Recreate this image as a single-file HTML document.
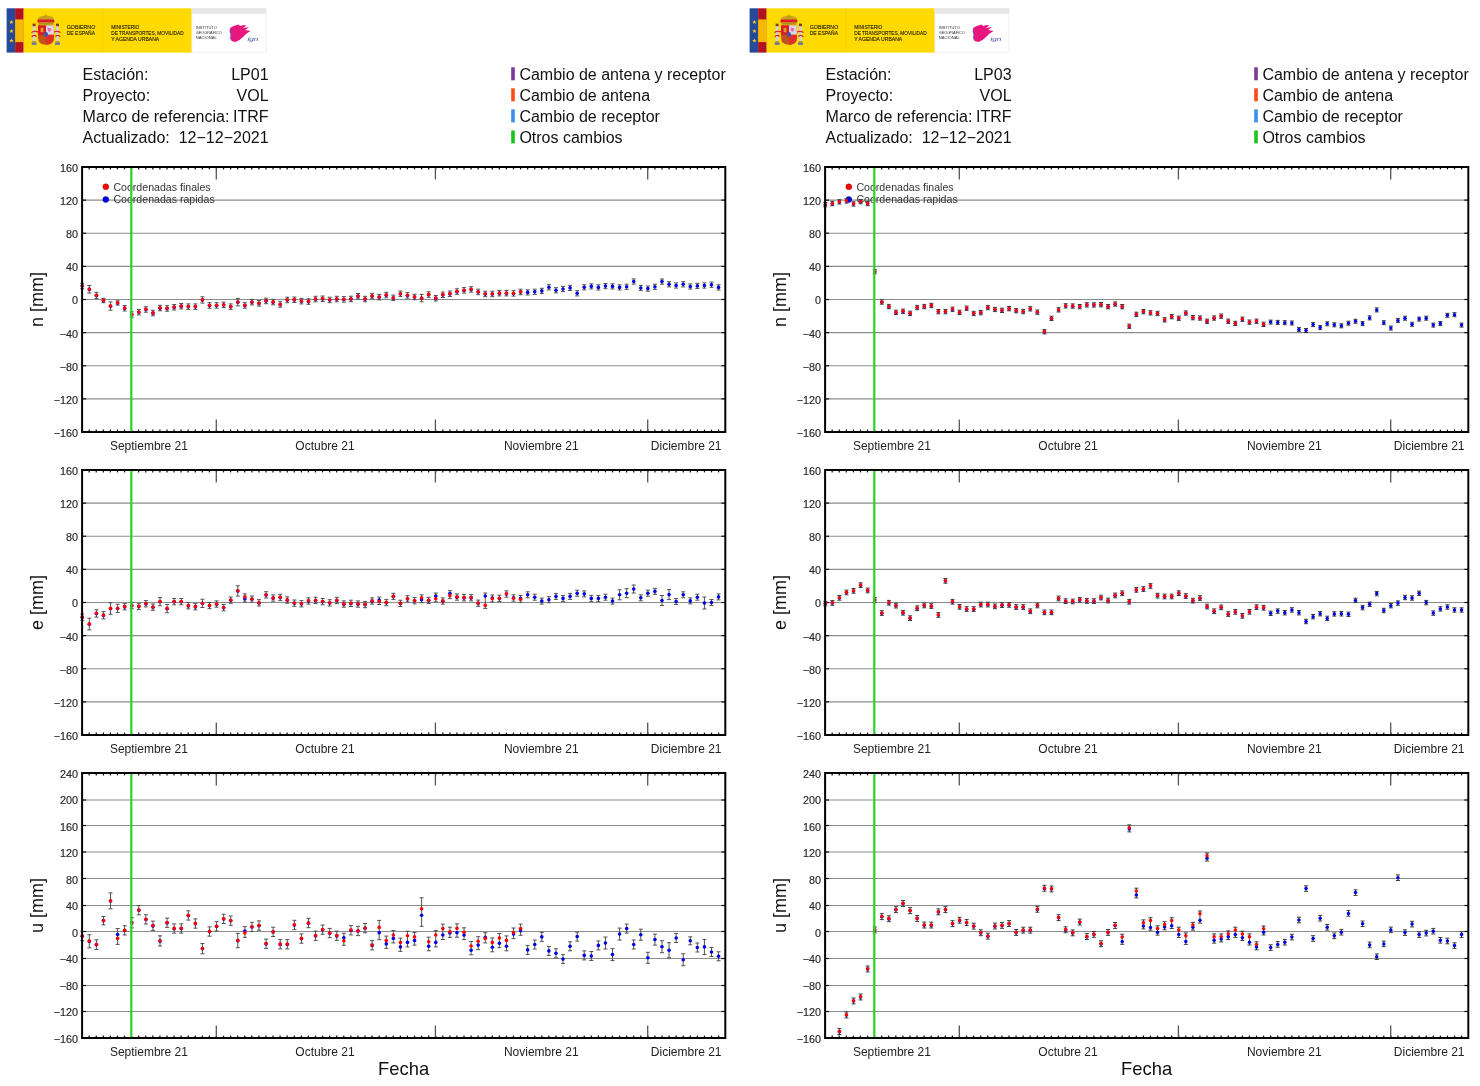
<!DOCTYPE html><html><head><meta charset="utf-8"><style>html,body{margin:0;padding:0;background:#fff;}svg{display:block;will-change:transform}</style></head><body><svg width="1480" height="1086" viewBox="0 0 1480 1086" font-family='"Liberation Sans", sans-serif'><rect width="1480" height="1086" fill="#fff"/><g transform="translate(0,0)"><rect x="6.6" y="8.3" width="8.5" height="44.3" fill="#27499c"/><rect x="15.1" y="8.3" width="8.6" height="44.3" fill="#b3121f"/><rect x="15.1" y="19.4" width="8.6" height="22.7" fill="#f6b800"/><path transform="translate(11.4,22.2) scale(2.3)" d="M0,-1 L0.29,-0.31 L0.95,-0.31 L0.42,0.12 L0.59,0.81 L0,0.4 L-0.59,0.81 L-0.42,0.12 L-0.95,-0.31 L-0.29,-0.31 Z" fill="#f5d010"/><path transform="translate(11.4,31.2) scale(2.3)" d="M0,-1 L0.29,-0.31 L0.95,-0.31 L0.42,0.12 L0.59,0.81 L0,0.4 L-0.59,0.81 L-0.42,0.12 L-0.95,-0.31 L-0.29,-0.31 Z" fill="#f5d010"/><path transform="translate(11.4,40.7) scale(2.3)" d="M0,-1 L0.29,-0.31 L0.95,-0.31 L0.42,0.12 L0.59,0.81 L0,0.4 L-0.59,0.81 L-0.42,0.12 L-0.95,-0.31 L-0.29,-0.31 Z" fill="#f5d010"/><rect x="23.7" y="8.3" width="168.2" height="44.3" fill="#ffda00"/><line x1="102.6" y1="8.3" x2="102.6" y2="52.6" stroke="#f0cc00" stroke-width="0.6"/><rect x="32.8" y="25" width="2.6" height="18" fill="#cfd3e6"/><rect x="32.599999999999994" y="23.6" width="3" height="2.6" fill="#8a3a20"/><rect x="31.699999999999996" y="42.4" width="4.8" height="2.4" fill="#5a72b0"/><rect x="32.3" y="41.2" width="3.6" height="1.4" fill="#b08a20"/><rect x="56.2" y="25" width="2.6" height="18" fill="#cfd3e6"/><rect x="56.0" y="23.6" width="3" height="2.6" fill="#8a3a20"/><rect x="55.1" y="42.4" width="4.8" height="2.4" fill="#5a72b0"/><rect x="55.7" y="41.2" width="3.6" height="1.4" fill="#b08a20"/><path d="M31.5 32.6 Q34 30.5 38.5 32 M31.8 36.8 Q34 34 36.5 36.5" stroke="#e0202a" stroke-width="1.2" fill="none"/><path d="M60.5 32.6 Q58 30.5 53.5 32 M60.2 36.8 Q58 34 55.5 36.5" stroke="#e0202a" stroke-width="1.2" fill="none"/><path d="M37.4 22.8 Q37 17.2 41 16.6 Q45.8 14.6 50.8 16.6 Q54.8 17.2 54.4 22.8 Z" fill="#c9a21a"/><rect x="37.6" y="19.4" width="16.6" height="3.2" rx="1.2" fill="#e01a2a"/><rect x="38.4" y="22.4" width="15" height="2.4" fill="#b8901a"/><rect x="45.5" y="14.4" width="0.9" height="2.6" fill="#b8901a"/><path d="M38.1 25.4 H53.8 V38 Q53.8 44.7 46 44.7 Q38.1 44.7 38.1 38 Z" fill="#c2521c"/><rect x="38.1" y="25.4" width="7.9" height="9.4" fill="#dc1a2c"/><rect x="46" y="25.4" width="7.8" height="9.4" fill="#dcd6e8"/><path d="M47.5 27.5 L51.5 28.5 L50 32 L48 31 Z" fill="#e070b0"/><path d="M46 34.8 H53.8 V38 Q53.8 44.7 46 44.7 Z" fill="#e0302a"/><rect x="40.6" y="27.8" width="2.8" height="4.4" fill="#d8a020"/><ellipse cx="46" cy="34.5" rx="2" ry="2.4" fill="#3a5aa8"/><g font-family='"Liberation Sans", sans-serif' font-size="5.5" fill="#1e1a00" stroke="#1e1a00" stroke-width="0.12"><text x="66.7" y="29.3" textLength="28.6" lengthAdjust="spacingAndGlyphs">GOBIERNO</text><text x="66.7" y="35.1" textLength="28.4" lengthAdjust="spacingAndGlyphs">DE ESPAÑA</text><text x="111.2" y="29.3" textLength="28.2" lengthAdjust="spacingAndGlyphs">MINISTERIO</text><text x="111.2" y="35.1" textLength="72.4" lengthAdjust="spacingAndGlyphs">DE TRANSPORTES, MOVILIDAD</text><text x="111.2" y="40.8" textLength="48" lengthAdjust="spacingAndGlyphs">Y AGENDA URBANA</text></g><rect x="191.9" y="8.4" width="74" height="43.8" fill="#ffffff" stroke="#ececec" stroke-width="0.8"/><rect x="191.9" y="8.4" width="74" height="5.4" fill="#e6e6e6"/><g font-family='"Liberation Sans", sans-serif' font-size="3.9" fill="#333"><text x="195.8" y="29.2" textLength="21" lengthAdjust="spacingAndGlyphs">INSTITUTO</text><text x="195.8" y="33.8" textLength="26" lengthAdjust="spacingAndGlyphs">GEOGRÁFICO</text><text x="195.8" y="38.9" textLength="21" lengthAdjust="spacingAndGlyphs">NACIONAL</text></g><path d="M230.2 28 L233 26.2 L236 25.2 L238.6 24.6 L240 26 L243.4 24.9 L246.6 25.4 L242.6 28 L246 27.4 L249 27 L245.2 30 L250.5 31 L246 34 L243 37 L239.5 40 L235.5 42 L232.2 41.2 L230.2 38.2 L231 35 L229.6 32 Z" fill="#e8177d"/><path d="M230 29 L231 33 L230.2 38 L232 41" stroke="#5566bb" stroke-width="0.9" fill="none" opacity="0.8"/><text x="247.4" y="41.4" font-size="6" font-style="italic" fill="#3b4fa8" font-family='"Liberation Sans", sans-serif' textLength="11" lengthAdjust="spacingAndGlyphs">ign</text></g><g transform="translate(0,0)" font-family='"Liberation Sans", sans-serif' font-size="16" fill="#111"><text x="82.6" y="80.1">Estación:</text><text x="268.6" y="80.1" text-anchor="end">LP01</text><text x="82.6" y="101.1">Proyecto:</text><text x="268.6" y="101.1" text-anchor="end">VOL</text><text x="82.6" y="122.2">Marco de referencia:</text><text x="268.6" y="122.2" text-anchor="end">ITRF</text><text x="82.6" y="143.3">Actualizado:</text><text x="268.6" y="143.3" text-anchor="end">12−12−2021</text><rect x="511.2" y="67.3" width="3.6" height="13" fill="#7b3a9a"/><text x="519.4" y="80.3">Cambio de antena y receptor</text><rect x="511.2" y="88.3" width="3.6" height="13" fill="#ff4a14"/><text x="519.4" y="101.3">Cambio de antena</text><rect x="511.2" y="109.4" width="3.6" height="13" fill="#3b8ef0"/><text x="519.4" y="122.4">Cambio de receptor</text><rect x="511.2" y="130.4" width="3.6" height="13" fill="#19c519"/><text x="519.4" y="143.4">Otros cambios</text></g><line x1="82.1" y1="200.12" x2="725.3" y2="200.12" stroke="#8c8c8c" stroke-width="1.1"/><line x1="82.1" y1="200.12" x2="86.1" y2="200.12" stroke="#111" stroke-width="1.2"/><line x1="721.3" y1="200.12" x2="725.3" y2="200.12" stroke="#111" stroke-width="1.2"/><line x1="82.1" y1="233.25" x2="725.3" y2="233.25" stroke="#8c8c8c" stroke-width="1.1"/><line x1="82.1" y1="233.25" x2="86.1" y2="233.25" stroke="#111" stroke-width="1.2"/><line x1="721.3" y1="233.25" x2="725.3" y2="233.25" stroke="#111" stroke-width="1.2"/><line x1="82.1" y1="266.38" x2="725.3" y2="266.38" stroke="#8c8c8c" stroke-width="1.1"/><line x1="82.1" y1="266.38" x2="86.1" y2="266.38" stroke="#111" stroke-width="1.2"/><line x1="721.3" y1="266.38" x2="725.3" y2="266.38" stroke="#111" stroke-width="1.2"/><line x1="82.1" y1="299.50" x2="725.3" y2="299.50" stroke="#8c8c8c" stroke-width="1.1"/><line x1="82.1" y1="299.50" x2="86.1" y2="299.50" stroke="#111" stroke-width="1.2"/><line x1="721.3" y1="299.50" x2="725.3" y2="299.50" stroke="#111" stroke-width="1.2"/><line x1="82.1" y1="332.62" x2="725.3" y2="332.62" stroke="#8c8c8c" stroke-width="1.1"/><line x1="82.1" y1="332.62" x2="86.1" y2="332.62" stroke="#111" stroke-width="1.2"/><line x1="721.3" y1="332.62" x2="725.3" y2="332.62" stroke="#111" stroke-width="1.2"/><line x1="82.1" y1="365.75" x2="725.3" y2="365.75" stroke="#8c8c8c" stroke-width="1.1"/><line x1="82.1" y1="365.75" x2="86.1" y2="365.75" stroke="#111" stroke-width="1.2"/><line x1="721.3" y1="365.75" x2="725.3" y2="365.75" stroke="#111" stroke-width="1.2"/><line x1="82.1" y1="398.88" x2="725.3" y2="398.88" stroke="#8c8c8c" stroke-width="1.1"/><line x1="82.1" y1="398.88" x2="86.1" y2="398.88" stroke="#111" stroke-width="1.2"/><line x1="721.3" y1="398.88" x2="725.3" y2="398.88" stroke="#111" stroke-width="1.2"/><text x="78.0" y="171.90" text-anchor="end" font-size="10.8" fill="#2a2a2a" stroke="#2a2a2a" stroke-width="0.18">160</text><text x="78.0" y="205.03" text-anchor="end" font-size="10.8" fill="#2a2a2a" stroke="#2a2a2a" stroke-width="0.18">120</text><text x="78.0" y="238.15" text-anchor="end" font-size="10.8" fill="#2a2a2a" stroke="#2a2a2a" stroke-width="0.18">80</text><text x="78.0" y="271.27" text-anchor="end" font-size="10.8" fill="#2a2a2a" stroke="#2a2a2a" stroke-width="0.18">40</text><text x="78.0" y="304.40" text-anchor="end" font-size="10.8" fill="#2a2a2a" stroke="#2a2a2a" stroke-width="0.18">0</text><text x="78.0" y="337.52" text-anchor="end" font-size="10.8" fill="#2a2a2a" stroke="#2a2a2a" stroke-width="0.18">−40</text><text x="78.0" y="370.65" text-anchor="end" font-size="10.8" fill="#2a2a2a" stroke="#2a2a2a" stroke-width="0.18">−80</text><text x="78.0" y="403.77" text-anchor="end" font-size="10.8" fill="#2a2a2a" stroke="#2a2a2a" stroke-width="0.18">−120</text><text x="78.0" y="436.90" text-anchor="end" font-size="10.8" fill="#2a2a2a" stroke="#2a2a2a" stroke-width="0.18">−160</text><line x1="89.17" y1="167" x2="89.17" y2="169.4" stroke="#111" stroke-width="1.25"/><line x1="89.17" y1="432" x2="89.17" y2="429.6" stroke="#111" stroke-width="1.25"/><line x1="96.24" y1="167" x2="96.24" y2="169.4" stroke="#111" stroke-width="1.25"/><line x1="96.24" y1="432" x2="96.24" y2="429.6" stroke="#111" stroke-width="1.25"/><line x1="103.32" y1="167" x2="103.32" y2="169.4" stroke="#111" stroke-width="1.25"/><line x1="103.32" y1="432" x2="103.32" y2="429.6" stroke="#111" stroke-width="1.25"/><line x1="110.39" y1="167" x2="110.39" y2="169.4" stroke="#111" stroke-width="1.25"/><line x1="110.39" y1="432" x2="110.39" y2="429.6" stroke="#111" stroke-width="1.25"/><line x1="117.46" y1="167" x2="117.46" y2="169.4" stroke="#111" stroke-width="1.25"/><line x1="117.46" y1="432" x2="117.46" y2="429.6" stroke="#111" stroke-width="1.25"/><line x1="124.53" y1="167" x2="124.53" y2="169.4" stroke="#111" stroke-width="1.25"/><line x1="124.53" y1="432" x2="124.53" y2="429.6" stroke="#111" stroke-width="1.25"/><line x1="131.60" y1="167" x2="131.60" y2="169.4" stroke="#111" stroke-width="1.25"/><line x1="131.60" y1="432" x2="131.60" y2="429.6" stroke="#111" stroke-width="1.25"/><line x1="138.68" y1="167" x2="138.68" y2="169.4" stroke="#111" stroke-width="1.25"/><line x1="138.68" y1="432" x2="138.68" y2="429.6" stroke="#111" stroke-width="1.25"/><line x1="145.75" y1="167" x2="145.75" y2="169.4" stroke="#111" stroke-width="1.25"/><line x1="145.75" y1="432" x2="145.75" y2="429.6" stroke="#111" stroke-width="1.25"/><line x1="152.82" y1="167" x2="152.82" y2="169.4" stroke="#111" stroke-width="1.25"/><line x1="152.82" y1="432" x2="152.82" y2="429.6" stroke="#111" stroke-width="1.25"/><line x1="159.89" y1="167" x2="159.89" y2="169.4" stroke="#111" stroke-width="1.25"/><line x1="159.89" y1="432" x2="159.89" y2="429.6" stroke="#111" stroke-width="1.25"/><line x1="166.97" y1="167" x2="166.97" y2="169.4" stroke="#111" stroke-width="1.25"/><line x1="166.97" y1="432" x2="166.97" y2="429.6" stroke="#111" stroke-width="1.25"/><line x1="174.04" y1="167" x2="174.04" y2="169.4" stroke="#111" stroke-width="1.25"/><line x1="174.04" y1="432" x2="174.04" y2="429.6" stroke="#111" stroke-width="1.25"/><line x1="181.11" y1="167" x2="181.11" y2="169.4" stroke="#111" stroke-width="1.25"/><line x1="181.11" y1="432" x2="181.11" y2="429.6" stroke="#111" stroke-width="1.25"/><line x1="188.18" y1="167" x2="188.18" y2="169.4" stroke="#111" stroke-width="1.25"/><line x1="188.18" y1="432" x2="188.18" y2="429.6" stroke="#111" stroke-width="1.25"/><line x1="195.25" y1="167" x2="195.25" y2="169.4" stroke="#111" stroke-width="1.25"/><line x1="195.25" y1="432" x2="195.25" y2="429.6" stroke="#111" stroke-width="1.25"/><line x1="202.33" y1="167" x2="202.33" y2="169.4" stroke="#111" stroke-width="1.25"/><line x1="202.33" y1="432" x2="202.33" y2="429.6" stroke="#111" stroke-width="1.25"/><line x1="209.40" y1="167" x2="209.40" y2="169.4" stroke="#111" stroke-width="1.25"/><line x1="209.40" y1="432" x2="209.40" y2="429.6" stroke="#111" stroke-width="1.25"/><line x1="216.47" y1="167" x2="216.47" y2="169.4" stroke="#111" stroke-width="1.25"/><line x1="216.47" y1="432" x2="216.47" y2="429.6" stroke="#111" stroke-width="1.25"/><line x1="223.54" y1="167" x2="223.54" y2="169.4" stroke="#111" stroke-width="1.25"/><line x1="223.54" y1="432" x2="223.54" y2="429.6" stroke="#111" stroke-width="1.25"/><line x1="230.61" y1="167" x2="230.61" y2="169.4" stroke="#111" stroke-width="1.25"/><line x1="230.61" y1="432" x2="230.61" y2="429.6" stroke="#111" stroke-width="1.25"/><line x1="237.69" y1="167" x2="237.69" y2="169.4" stroke="#111" stroke-width="1.25"/><line x1="237.69" y1="432" x2="237.69" y2="429.6" stroke="#111" stroke-width="1.25"/><line x1="244.76" y1="167" x2="244.76" y2="169.4" stroke="#111" stroke-width="1.25"/><line x1="244.76" y1="432" x2="244.76" y2="429.6" stroke="#111" stroke-width="1.25"/><line x1="251.83" y1="167" x2="251.83" y2="169.4" stroke="#111" stroke-width="1.25"/><line x1="251.83" y1="432" x2="251.83" y2="429.6" stroke="#111" stroke-width="1.25"/><line x1="258.90" y1="167" x2="258.90" y2="169.4" stroke="#111" stroke-width="1.25"/><line x1="258.90" y1="432" x2="258.90" y2="429.6" stroke="#111" stroke-width="1.25"/><line x1="265.98" y1="167" x2="265.98" y2="169.4" stroke="#111" stroke-width="1.25"/><line x1="265.98" y1="432" x2="265.98" y2="429.6" stroke="#111" stroke-width="1.25"/><line x1="273.05" y1="167" x2="273.05" y2="169.4" stroke="#111" stroke-width="1.25"/><line x1="273.05" y1="432" x2="273.05" y2="429.6" stroke="#111" stroke-width="1.25"/><line x1="280.12" y1="167" x2="280.12" y2="169.4" stroke="#111" stroke-width="1.25"/><line x1="280.12" y1="432" x2="280.12" y2="429.6" stroke="#111" stroke-width="1.25"/><line x1="287.19" y1="167" x2="287.19" y2="169.4" stroke="#111" stroke-width="1.25"/><line x1="287.19" y1="432" x2="287.19" y2="429.6" stroke="#111" stroke-width="1.25"/><line x1="294.26" y1="167" x2="294.26" y2="169.4" stroke="#111" stroke-width="1.25"/><line x1="294.26" y1="432" x2="294.26" y2="429.6" stroke="#111" stroke-width="1.25"/><line x1="301.34" y1="167" x2="301.34" y2="169.4" stroke="#111" stroke-width="1.25"/><line x1="301.34" y1="432" x2="301.34" y2="429.6" stroke="#111" stroke-width="1.25"/><line x1="308.41" y1="167" x2="308.41" y2="169.4" stroke="#111" stroke-width="1.25"/><line x1="308.41" y1="432" x2="308.41" y2="429.6" stroke="#111" stroke-width="1.25"/><line x1="315.48" y1="167" x2="315.48" y2="169.4" stroke="#111" stroke-width="1.25"/><line x1="315.48" y1="432" x2="315.48" y2="429.6" stroke="#111" stroke-width="1.25"/><line x1="322.55" y1="167" x2="322.55" y2="169.4" stroke="#111" stroke-width="1.25"/><line x1="322.55" y1="432" x2="322.55" y2="429.6" stroke="#111" stroke-width="1.25"/><line x1="329.62" y1="167" x2="329.62" y2="169.4" stroke="#111" stroke-width="1.25"/><line x1="329.62" y1="432" x2="329.62" y2="429.6" stroke="#111" stroke-width="1.25"/><line x1="336.70" y1="167" x2="336.70" y2="169.4" stroke="#111" stroke-width="1.25"/><line x1="336.70" y1="432" x2="336.70" y2="429.6" stroke="#111" stroke-width="1.25"/><line x1="343.77" y1="167" x2="343.77" y2="169.4" stroke="#111" stroke-width="1.25"/><line x1="343.77" y1="432" x2="343.77" y2="429.6" stroke="#111" stroke-width="1.25"/><line x1="350.84" y1="167" x2="350.84" y2="169.4" stroke="#111" stroke-width="1.25"/><line x1="350.84" y1="432" x2="350.84" y2="429.6" stroke="#111" stroke-width="1.25"/><line x1="357.91" y1="167" x2="357.91" y2="169.4" stroke="#111" stroke-width="1.25"/><line x1="357.91" y1="432" x2="357.91" y2="429.6" stroke="#111" stroke-width="1.25"/><line x1="364.99" y1="167" x2="364.99" y2="169.4" stroke="#111" stroke-width="1.25"/><line x1="364.99" y1="432" x2="364.99" y2="429.6" stroke="#111" stroke-width="1.25"/><line x1="372.06" y1="167" x2="372.06" y2="169.4" stroke="#111" stroke-width="1.25"/><line x1="372.06" y1="432" x2="372.06" y2="429.6" stroke="#111" stroke-width="1.25"/><line x1="379.13" y1="167" x2="379.13" y2="169.4" stroke="#111" stroke-width="1.25"/><line x1="379.13" y1="432" x2="379.13" y2="429.6" stroke="#111" stroke-width="1.25"/><line x1="386.20" y1="167" x2="386.20" y2="169.4" stroke="#111" stroke-width="1.25"/><line x1="386.20" y1="432" x2="386.20" y2="429.6" stroke="#111" stroke-width="1.25"/><line x1="393.27" y1="167" x2="393.27" y2="169.4" stroke="#111" stroke-width="1.25"/><line x1="393.27" y1="432" x2="393.27" y2="429.6" stroke="#111" stroke-width="1.25"/><line x1="400.35" y1="167" x2="400.35" y2="169.4" stroke="#111" stroke-width="1.25"/><line x1="400.35" y1="432" x2="400.35" y2="429.6" stroke="#111" stroke-width="1.25"/><line x1="407.42" y1="167" x2="407.42" y2="169.4" stroke="#111" stroke-width="1.25"/><line x1="407.42" y1="432" x2="407.42" y2="429.6" stroke="#111" stroke-width="1.25"/><line x1="414.49" y1="167" x2="414.49" y2="169.4" stroke="#111" stroke-width="1.25"/><line x1="414.49" y1="432" x2="414.49" y2="429.6" stroke="#111" stroke-width="1.25"/><line x1="421.56" y1="167" x2="421.56" y2="169.4" stroke="#111" stroke-width="1.25"/><line x1="421.56" y1="432" x2="421.56" y2="429.6" stroke="#111" stroke-width="1.25"/><line x1="428.63" y1="167" x2="428.63" y2="169.4" stroke="#111" stroke-width="1.25"/><line x1="428.63" y1="432" x2="428.63" y2="429.6" stroke="#111" stroke-width="1.25"/><line x1="435.71" y1="167" x2="435.71" y2="169.4" stroke="#111" stroke-width="1.25"/><line x1="435.71" y1="432" x2="435.71" y2="429.6" stroke="#111" stroke-width="1.25"/><line x1="442.78" y1="167" x2="442.78" y2="169.4" stroke="#111" stroke-width="1.25"/><line x1="442.78" y1="432" x2="442.78" y2="429.6" stroke="#111" stroke-width="1.25"/><line x1="449.85" y1="167" x2="449.85" y2="169.4" stroke="#111" stroke-width="1.25"/><line x1="449.85" y1="432" x2="449.85" y2="429.6" stroke="#111" stroke-width="1.25"/><line x1="456.92" y1="167" x2="456.92" y2="169.4" stroke="#111" stroke-width="1.25"/><line x1="456.92" y1="432" x2="456.92" y2="429.6" stroke="#111" stroke-width="1.25"/><line x1="464.00" y1="167" x2="464.00" y2="169.4" stroke="#111" stroke-width="1.25"/><line x1="464.00" y1="432" x2="464.00" y2="429.6" stroke="#111" stroke-width="1.25"/><line x1="471.07" y1="167" x2="471.07" y2="169.4" stroke="#111" stroke-width="1.25"/><line x1="471.07" y1="432" x2="471.07" y2="429.6" stroke="#111" stroke-width="1.25"/><line x1="478.14" y1="167" x2="478.14" y2="169.4" stroke="#111" stroke-width="1.25"/><line x1="478.14" y1="432" x2="478.14" y2="429.6" stroke="#111" stroke-width="1.25"/><line x1="485.21" y1="167" x2="485.21" y2="169.4" stroke="#111" stroke-width="1.25"/><line x1="485.21" y1="432" x2="485.21" y2="429.6" stroke="#111" stroke-width="1.25"/><line x1="492.28" y1="167" x2="492.28" y2="169.4" stroke="#111" stroke-width="1.25"/><line x1="492.28" y1="432" x2="492.28" y2="429.6" stroke="#111" stroke-width="1.25"/><line x1="499.36" y1="167" x2="499.36" y2="169.4" stroke="#111" stroke-width="1.25"/><line x1="499.36" y1="432" x2="499.36" y2="429.6" stroke="#111" stroke-width="1.25"/><line x1="506.43" y1="167" x2="506.43" y2="169.4" stroke="#111" stroke-width="1.25"/><line x1="506.43" y1="432" x2="506.43" y2="429.6" stroke="#111" stroke-width="1.25"/><line x1="513.50" y1="167" x2="513.50" y2="169.4" stroke="#111" stroke-width="1.25"/><line x1="513.50" y1="432" x2="513.50" y2="429.6" stroke="#111" stroke-width="1.25"/><line x1="520.57" y1="167" x2="520.57" y2="169.4" stroke="#111" stroke-width="1.25"/><line x1="520.57" y1="432" x2="520.57" y2="429.6" stroke="#111" stroke-width="1.25"/><line x1="527.64" y1="167" x2="527.64" y2="169.4" stroke="#111" stroke-width="1.25"/><line x1="527.64" y1="432" x2="527.64" y2="429.6" stroke="#111" stroke-width="1.25"/><line x1="534.72" y1="167" x2="534.72" y2="169.4" stroke="#111" stroke-width="1.25"/><line x1="534.72" y1="432" x2="534.72" y2="429.6" stroke="#111" stroke-width="1.25"/><line x1="541.79" y1="167" x2="541.79" y2="169.4" stroke="#111" stroke-width="1.25"/><line x1="541.79" y1="432" x2="541.79" y2="429.6" stroke="#111" stroke-width="1.25"/><line x1="548.86" y1="167" x2="548.86" y2="169.4" stroke="#111" stroke-width="1.25"/><line x1="548.86" y1="432" x2="548.86" y2="429.6" stroke="#111" stroke-width="1.25"/><line x1="555.93" y1="167" x2="555.93" y2="169.4" stroke="#111" stroke-width="1.25"/><line x1="555.93" y1="432" x2="555.93" y2="429.6" stroke="#111" stroke-width="1.25"/><line x1="563.00" y1="167" x2="563.00" y2="169.4" stroke="#111" stroke-width="1.25"/><line x1="563.00" y1="432" x2="563.00" y2="429.6" stroke="#111" stroke-width="1.25"/><line x1="570.08" y1="167" x2="570.08" y2="169.4" stroke="#111" stroke-width="1.25"/><line x1="570.08" y1="432" x2="570.08" y2="429.6" stroke="#111" stroke-width="1.25"/><line x1="577.15" y1="167" x2="577.15" y2="169.4" stroke="#111" stroke-width="1.25"/><line x1="577.15" y1="432" x2="577.15" y2="429.6" stroke="#111" stroke-width="1.25"/><line x1="584.22" y1="167" x2="584.22" y2="169.4" stroke="#111" stroke-width="1.25"/><line x1="584.22" y1="432" x2="584.22" y2="429.6" stroke="#111" stroke-width="1.25"/><line x1="591.29" y1="167" x2="591.29" y2="169.4" stroke="#111" stroke-width="1.25"/><line x1="591.29" y1="432" x2="591.29" y2="429.6" stroke="#111" stroke-width="1.25"/><line x1="598.37" y1="167" x2="598.37" y2="169.4" stroke="#111" stroke-width="1.25"/><line x1="598.37" y1="432" x2="598.37" y2="429.6" stroke="#111" stroke-width="1.25"/><line x1="605.44" y1="167" x2="605.44" y2="169.4" stroke="#111" stroke-width="1.25"/><line x1="605.44" y1="432" x2="605.44" y2="429.6" stroke="#111" stroke-width="1.25"/><line x1="612.51" y1="167" x2="612.51" y2="169.4" stroke="#111" stroke-width="1.25"/><line x1="612.51" y1="432" x2="612.51" y2="429.6" stroke="#111" stroke-width="1.25"/><line x1="619.58" y1="167" x2="619.58" y2="169.4" stroke="#111" stroke-width="1.25"/><line x1="619.58" y1="432" x2="619.58" y2="429.6" stroke="#111" stroke-width="1.25"/><line x1="626.65" y1="167" x2="626.65" y2="169.4" stroke="#111" stroke-width="1.25"/><line x1="626.65" y1="432" x2="626.65" y2="429.6" stroke="#111" stroke-width="1.25"/><line x1="633.73" y1="167" x2="633.73" y2="169.4" stroke="#111" stroke-width="1.25"/><line x1="633.73" y1="432" x2="633.73" y2="429.6" stroke="#111" stroke-width="1.25"/><line x1="640.80" y1="167" x2="640.80" y2="169.4" stroke="#111" stroke-width="1.25"/><line x1="640.80" y1="432" x2="640.80" y2="429.6" stroke="#111" stroke-width="1.25"/><line x1="647.87" y1="167" x2="647.87" y2="169.4" stroke="#111" stroke-width="1.25"/><line x1="647.87" y1="432" x2="647.87" y2="429.6" stroke="#111" stroke-width="1.25"/><line x1="654.94" y1="167" x2="654.94" y2="169.4" stroke="#111" stroke-width="1.25"/><line x1="654.94" y1="432" x2="654.94" y2="429.6" stroke="#111" stroke-width="1.25"/><line x1="662.01" y1="167" x2="662.01" y2="169.4" stroke="#111" stroke-width="1.25"/><line x1="662.01" y1="432" x2="662.01" y2="429.6" stroke="#111" stroke-width="1.25"/><line x1="669.09" y1="167" x2="669.09" y2="169.4" stroke="#111" stroke-width="1.25"/><line x1="669.09" y1="432" x2="669.09" y2="429.6" stroke="#111" stroke-width="1.25"/><line x1="676.16" y1="167" x2="676.16" y2="169.4" stroke="#111" stroke-width="1.25"/><line x1="676.16" y1="432" x2="676.16" y2="429.6" stroke="#111" stroke-width="1.25"/><line x1="683.23" y1="167" x2="683.23" y2="169.4" stroke="#111" stroke-width="1.25"/><line x1="683.23" y1="432" x2="683.23" y2="429.6" stroke="#111" stroke-width="1.25"/><line x1="690.30" y1="167" x2="690.30" y2="169.4" stroke="#111" stroke-width="1.25"/><line x1="690.30" y1="432" x2="690.30" y2="429.6" stroke="#111" stroke-width="1.25"/><line x1="697.38" y1="167" x2="697.38" y2="169.4" stroke="#111" stroke-width="1.25"/><line x1="697.38" y1="432" x2="697.38" y2="429.6" stroke="#111" stroke-width="1.25"/><line x1="704.45" y1="167" x2="704.45" y2="169.4" stroke="#111" stroke-width="1.25"/><line x1="704.45" y1="432" x2="704.45" y2="429.6" stroke="#111" stroke-width="1.25"/><line x1="711.52" y1="167" x2="711.52" y2="169.4" stroke="#111" stroke-width="1.25"/><line x1="711.52" y1="432" x2="711.52" y2="429.6" stroke="#111" stroke-width="1.25"/><line x1="718.59" y1="167" x2="718.59" y2="169.4" stroke="#111" stroke-width="1.25"/><line x1="718.59" y1="432" x2="718.59" y2="429.6" stroke="#111" stroke-width="1.25"/><line x1="216.3" y1="167" x2="216.3" y2="179.5" stroke="#555" stroke-width="1.3"/><line x1="216.3" y1="432" x2="216.3" y2="419.5" stroke="#555" stroke-width="1.3"/><line x1="435.4" y1="167" x2="435.4" y2="179.5" stroke="#555" stroke-width="1.3"/><line x1="435.4" y1="432" x2="435.4" y2="419.5" stroke="#555" stroke-width="1.3"/><line x1="647.7" y1="167" x2="647.7" y2="179.5" stroke="#555" stroke-width="1.3"/><line x1="647.7" y1="432" x2="647.7" y2="419.5" stroke="#555" stroke-width="1.3"/><text x="148.9" y="450.4" text-anchor="middle" font-size="12" fill="#222">Septiembre 21</text><text x="325.0" y="450.4" text-anchor="middle" font-size="12" fill="#222">Octubre 21</text><text x="541.3" y="450.4" text-anchor="middle" font-size="12" fill="#222">Noviembre 21</text><text x="686.2" y="450.4" text-anchor="middle" font-size="12" fill="#222">Diciembre 21</text><text transform="translate(43.2,299.5) rotate(-90)" text-anchor="middle" font-size="18" fill="#111">n [mm]</text><circle cx="105.8" cy="186.8" r="3" fill="#ff0000" stroke="#8a0000" stroke-width="0.4"/><text x="113.4" y="190.6" font-size="10.6" fill="#333">Coordenadas finales</text><circle cx="105.8" cy="199.5" r="3" fill="#0000ee" stroke="#00006a" stroke-width="0.4"/><text x="113.4" y="202.7" font-size="10.6" fill="#333">Coordenadas rapidas</text><path d="M82.26 283.20V288.70M80.26 283.20H84.26M80.26 288.70H84.26M89.33 285.50V293.00M87.33 285.50H91.33M87.33 293.00H91.33M96.40 292.30V298.60M94.40 292.30H98.40M94.40 298.60H98.40M103.47 298.40V302.70M101.47 298.40H105.47M101.47 302.70H105.47M110.54 301.90V310.20M108.54 301.90H112.54M108.54 310.20H112.54M117.61 300.80V305.10M115.61 300.80H119.61M115.61 305.10H119.61M124.68 305.50V311.00M122.68 305.50H126.68M122.68 311.00H126.68M131.75 311.80V317.30M129.75 311.80H133.75M129.75 317.30H133.75M138.82 309.40V314.90M136.82 309.40H140.82M136.82 314.90H140.82M145.89 306.70V312.20M143.89 306.70H147.89M143.89 312.20H147.89M152.96 310.30V315.80M150.96 310.30H154.96M150.96 315.80H154.96M160.03 305.30V310.80M158.03 305.30H162.03M158.03 310.80H162.03M167.10 305.70V311.20M165.10 305.70H169.10M165.10 311.20H169.10M174.17 304.50V310.00M172.17 304.50H176.17M172.17 310.00H176.17M181.24 303.50V309.00M179.24 303.50H183.24M179.24 309.00H183.24M188.31 303.90V309.40M186.31 303.90H190.31M186.31 309.40H190.31M195.38 303.90V309.40M193.38 303.90H197.38M193.38 309.40H197.38M202.45 296.80V303.10M200.45 296.80H204.45M200.45 303.10H204.45M209.52 302.70V308.20M207.52 302.70H211.52M207.52 308.20H211.52M216.59 302.70V308.20M214.59 302.70H218.59M214.59 308.20H218.59M223.66 302.10V307.60M221.66 302.10H225.66M221.66 307.60H225.66M230.73 303.90V309.40M228.73 303.90H232.73M228.73 309.40H232.73M237.80 298.50V305.80M235.80 298.50H239.80M235.80 305.80H239.80M244.87 302.70V308.20M242.87 302.70H246.87M242.87 308.20H246.87M251.94 299.40V304.90M249.94 299.40H253.94M249.94 304.90H253.94M259.01 300.60V306.10M257.01 300.60H261.01M257.01 306.10H261.01M266.08 298.20V303.70M264.08 298.20H268.08M264.08 303.70H268.08M273.15 299.30V304.80M271.15 299.30H275.15M271.15 304.80H275.15M280.22 301.70V307.20M278.22 301.70H282.22M278.22 307.20H282.22M287.29 297.20V302.70M285.29 297.20H289.29M285.29 302.70H289.29M294.36 297.00V302.50M292.36 297.00H296.36M292.36 302.50H296.36M301.43 298.40V303.90M299.43 298.40H303.43M299.43 303.90H303.43M308.50 298.80V304.30M306.50 298.80H310.50M306.50 304.30H310.50M315.57 296.30V301.80M313.57 296.30H317.57M313.57 301.80H317.57M322.64 296.00V301.50M320.64 296.00H324.64M320.64 301.50H324.64M329.71 297.20V302.70M327.71 297.20H331.71M327.71 302.70H331.71M336.78 296.30V301.80M334.78 296.30H338.78M334.78 301.80H338.78M343.85 296.60V302.10M341.85 296.60H345.85M341.85 302.10H345.85M350.92 296.20V301.70M348.92 296.20H352.92M348.92 301.70H352.92M357.99 293.50V299.00M355.99 293.50H359.99M355.99 299.00H359.99M365.06 296.30V301.80M363.06 296.30H367.06M363.06 301.80H367.06M372.13 293.30V298.80M370.13 293.30H374.13M370.13 298.80H374.13M379.20 294.40V299.90M377.20 294.40H381.20M377.20 299.90H381.20M386.27 292.30V297.80M384.27 292.30H388.27M384.27 297.80H388.27M393.34 295.10V300.60M391.34 295.10H395.34M391.34 300.60H395.34M400.41 291.10V296.60M398.41 291.10H402.41M398.41 296.60H402.41M407.48 292.70V298.20M405.48 292.70H409.48M405.48 298.20H409.48M414.55 294.20V299.70M412.55 294.20H416.55M412.55 299.70H416.55M421.62 294.50V301.80M419.62 294.50H423.62M419.62 301.80H423.62M428.69 291.80V297.30M426.69 291.80H430.69M426.69 297.30H430.69M435.76 295.50V301.00M433.76 295.50H437.76M433.76 301.00H437.76M442.83 292.00V297.50M440.83 292.00H444.83M440.83 297.50H444.83M449.90 291.00V296.50M447.90 291.00H451.90M447.90 296.50H451.90M456.97 288.80V294.30M454.97 288.80H458.97M454.97 294.30H458.97M464.04 287.60V293.10M462.04 287.60H466.04M462.04 293.10H466.04M471.11 286.70V292.20M469.11 286.70H473.11M469.11 292.20H473.11M478.18 289.20V294.70M476.18 289.20H480.18M476.18 294.70H480.18M485.25 291.20V296.70M483.25 291.20H487.25M483.25 296.70H487.25M492.32 291.20V296.70M490.32 291.20H494.32M490.32 296.70H494.32M499.39 290.40V295.90M497.39 290.40H501.39M497.39 295.90H501.39M506.46 290.40V295.90M504.46 290.40H508.46M504.46 295.90H508.46M513.53 290.60V296.10M511.53 290.60H515.53M511.53 296.10H515.53M520.60 289.20V294.70M518.60 289.20H522.60M518.60 294.70H522.60M527.67 289.80V295.00M525.67 289.80H529.67M525.67 295.00H529.67M534.74 289.20V294.40M532.74 289.20H536.74M532.74 294.40H536.74M541.81 288.30V293.50M539.81 288.30H543.81M539.81 293.50H543.81M548.88 284.70V289.90M546.88 284.70H550.88M546.88 289.90H550.88M555.95 287.70V292.90M553.95 287.70H557.95M553.95 292.90H557.95M563.02 286.40V291.60M561.02 286.40H565.02M561.02 291.60H565.02M570.09 285.30V290.50M568.09 285.30H572.09M568.09 290.50H572.09M577.16 290.70V295.90M575.16 290.70H579.16M575.16 295.90H579.16M584.23 284.70V289.90M582.23 284.70H586.23M582.23 289.90H586.23M591.30 283.80V289.00M589.30 283.80H593.30M589.30 289.00H593.30M598.37 284.80V290.00M596.37 284.80H600.37M596.37 290.00H600.37M605.44 283.50V288.70M603.44 283.50H607.44M603.44 288.70H607.44M612.51 283.80V289.00M610.51 283.80H614.51M610.51 289.00H614.51M619.58 284.80V290.00M617.58 284.80H621.58M617.58 290.00H621.58M626.65 284.20V289.40M624.65 284.20H628.65M624.65 289.40H628.65M633.72 278.90V284.10M631.72 278.90H635.72M631.72 284.10H635.72M640.79 285.40V290.60M638.79 285.40H642.79M638.79 290.60H642.79M647.86 286.00V291.20M645.86 286.00H649.86M645.86 291.20H649.86M654.93 284.20V289.40M652.93 284.20H656.93M652.93 289.40H656.93M662.00 279.00V284.20M660.00 279.00H664.00M660.00 284.20H664.00M669.07 281.70V286.90M667.07 281.70H671.07M667.07 286.90H671.07M676.14 282.90V288.10M674.14 282.90H678.14M674.14 288.10H678.14M683.21 281.70V286.90M681.21 281.70H685.21M681.21 286.90H685.21M690.28 283.90V289.10M688.28 283.90H692.28M688.28 289.10H692.28M697.35 283.30V288.50M695.35 283.30H699.35M695.35 288.50H699.35M704.42 282.90V288.10M702.42 282.90H706.42M702.42 288.10H706.42M711.49 282.10V287.30M709.49 282.10H713.49M709.49 287.30H713.49M718.56 284.80V290.00M716.56 284.80H720.56M716.56 290.00H720.56" stroke="#4a4a4a" stroke-width="0.95" fill="none"/><g fill="#0000e6"><circle cx="82.26" cy="286.10" r="1.8"/><circle cx="89.33" cy="289.40" r="1.8"/><circle cx="96.40" cy="295.60" r="1.8"/><circle cx="103.47" cy="300.70" r="1.8"/><circle cx="110.54" cy="306.20" r="1.8"/><circle cx="117.61" cy="303.10" r="1.8"/><circle cx="124.68" cy="308.40" r="1.8"/><circle cx="131.75" cy="314.70" r="1.8"/><circle cx="138.82" cy="312.30" r="1.8"/><circle cx="145.89" cy="309.60" r="1.8"/><circle cx="152.96" cy="313.20" r="1.8"/><circle cx="160.03" cy="308.20" r="1.8"/><circle cx="167.10" cy="308.60" r="1.8"/><circle cx="174.17" cy="307.40" r="1.8"/><circle cx="181.24" cy="306.40" r="1.8"/><circle cx="188.31" cy="306.80" r="1.8"/><circle cx="195.38" cy="306.80" r="1.8"/><circle cx="202.45" cy="300.10" r="1.8"/><circle cx="209.52" cy="305.60" r="1.8"/><circle cx="216.59" cy="305.60" r="1.8"/><circle cx="223.66" cy="305.00" r="1.8"/><circle cx="230.73" cy="306.80" r="1.8"/><circle cx="237.80" cy="302.30" r="1.8"/><circle cx="244.87" cy="305.60" r="1.8"/><circle cx="251.94" cy="302.30" r="1.8"/><circle cx="259.01" cy="303.50" r="1.8"/><circle cx="266.08" cy="301.10" r="1.8"/><circle cx="273.15" cy="302.20" r="1.8"/><circle cx="280.22" cy="304.60" r="1.8"/><circle cx="287.29" cy="300.10" r="1.8"/><circle cx="294.36" cy="299.90" r="1.8"/><circle cx="301.43" cy="301.30" r="1.8"/><circle cx="308.50" cy="301.70" r="1.8"/><circle cx="315.57" cy="299.20" r="1.8"/><circle cx="322.64" cy="298.90" r="1.8"/><circle cx="329.71" cy="300.10" r="1.8"/><circle cx="336.78" cy="299.20" r="1.8"/><circle cx="343.85" cy="299.50" r="1.8"/><circle cx="350.92" cy="299.10" r="1.8"/><circle cx="357.99" cy="296.40" r="1.8"/><circle cx="365.06" cy="299.20" r="1.8"/><circle cx="372.13" cy="296.20" r="1.8"/><circle cx="379.20" cy="297.30" r="1.8"/><circle cx="386.27" cy="295.20" r="1.8"/><circle cx="393.34" cy="298.00" r="1.8"/><circle cx="400.41" cy="294.00" r="1.8"/><circle cx="407.48" cy="295.60" r="1.8"/><circle cx="414.55" cy="297.10" r="1.8"/><circle cx="421.62" cy="298.30" r="1.8"/><circle cx="428.69" cy="294.70" r="1.8"/><circle cx="435.76" cy="298.40" r="1.8"/><circle cx="442.83" cy="294.90" r="1.8"/><circle cx="449.90" cy="293.90" r="1.8"/><circle cx="456.97" cy="291.70" r="1.8"/><circle cx="464.04" cy="290.50" r="1.8"/><circle cx="471.11" cy="289.60" r="1.8"/><circle cx="478.18" cy="292.10" r="1.8"/><circle cx="485.25" cy="294.10" r="1.8"/><circle cx="492.32" cy="294.10" r="1.8"/><circle cx="499.39" cy="293.30" r="1.8"/><circle cx="506.46" cy="293.30" r="1.8"/><circle cx="513.53" cy="293.50" r="1.8"/><circle cx="520.60" cy="292.10" r="1.8"/><circle cx="527.67" cy="292.40" r="1.8"/><circle cx="534.74" cy="291.80" r="1.8"/><circle cx="541.81" cy="290.90" r="1.8"/><circle cx="548.88" cy="287.30" r="1.8"/><circle cx="555.95" cy="290.30" r="1.8"/><circle cx="563.02" cy="289.00" r="1.8"/><circle cx="570.09" cy="287.90" r="1.8"/><circle cx="577.16" cy="293.30" r="1.8"/><circle cx="584.23" cy="287.30" r="1.8"/><circle cx="591.30" cy="286.40" r="1.8"/><circle cx="598.37" cy="287.40" r="1.8"/><circle cx="605.44" cy="286.10" r="1.8"/><circle cx="612.51" cy="286.40" r="1.8"/><circle cx="619.58" cy="287.40" r="1.8"/><circle cx="626.65" cy="286.80" r="1.8"/><circle cx="633.72" cy="281.50" r="1.8"/><circle cx="640.79" cy="288.00" r="1.8"/><circle cx="647.86" cy="288.60" r="1.8"/><circle cx="654.93" cy="286.80" r="1.8"/><circle cx="662.00" cy="281.60" r="1.8"/><circle cx="669.07" cy="284.30" r="1.8"/><circle cx="676.14" cy="285.50" r="1.8"/><circle cx="683.21" cy="284.30" r="1.8"/><circle cx="690.28" cy="286.50" r="1.8"/><circle cx="697.35" cy="285.90" r="1.8"/><circle cx="704.42" cy="285.50" r="1.8"/><circle cx="711.49" cy="284.70" r="1.8"/><circle cx="718.56" cy="287.40" r="1.8"/></g><g fill="#ff0000"><circle cx="82.26" cy="285.80" r="1.8"/><circle cx="89.33" cy="289.10" r="1.8"/><circle cx="96.40" cy="295.30" r="1.8"/><circle cx="103.47" cy="300.40" r="1.8"/><circle cx="110.54" cy="305.90" r="1.8"/><circle cx="117.61" cy="302.80" r="1.8"/><circle cx="124.68" cy="308.10" r="1.8"/><circle cx="131.75" cy="314.40" r="1.8"/><circle cx="138.82" cy="312.00" r="1.8"/><circle cx="145.89" cy="309.30" r="1.8"/><circle cx="152.96" cy="312.90" r="1.8"/><circle cx="160.03" cy="307.90" r="1.8"/><circle cx="167.10" cy="308.30" r="1.8"/><circle cx="174.17" cy="307.10" r="1.8"/><circle cx="181.24" cy="306.10" r="1.8"/><circle cx="188.31" cy="306.50" r="1.8"/><circle cx="195.38" cy="306.50" r="1.8"/><circle cx="202.45" cy="299.80" r="1.8"/><circle cx="209.52" cy="305.30" r="1.8"/><circle cx="216.59" cy="305.30" r="1.8"/><circle cx="223.66" cy="304.70" r="1.8"/><circle cx="230.73" cy="306.50" r="1.8"/><circle cx="237.80" cy="302.00" r="1.8"/><circle cx="244.87" cy="305.30" r="1.8"/><circle cx="251.94" cy="302.00" r="1.8"/><circle cx="259.01" cy="303.20" r="1.8"/><circle cx="266.08" cy="300.80" r="1.8"/><circle cx="273.15" cy="301.90" r="1.8"/><circle cx="280.22" cy="304.30" r="1.8"/><circle cx="287.29" cy="299.80" r="1.8"/><circle cx="294.36" cy="299.60" r="1.8"/><circle cx="301.43" cy="301.00" r="1.8"/><circle cx="308.50" cy="301.40" r="1.8"/><circle cx="315.57" cy="298.90" r="1.8"/><circle cx="322.64" cy="298.60" r="1.8"/><circle cx="329.71" cy="299.80" r="1.8"/><circle cx="336.78" cy="298.90" r="1.8"/><circle cx="343.85" cy="299.20" r="1.8"/><circle cx="350.92" cy="298.80" r="1.8"/><circle cx="357.99" cy="296.10" r="1.8"/><circle cx="365.06" cy="298.90" r="1.8"/><circle cx="372.13" cy="295.90" r="1.8"/><circle cx="379.20" cy="297.00" r="1.8"/><circle cx="386.27" cy="294.90" r="1.8"/><circle cx="393.34" cy="297.70" r="1.8"/><circle cx="400.41" cy="293.70" r="1.8"/><circle cx="407.48" cy="295.30" r="1.8"/><circle cx="414.55" cy="296.80" r="1.8"/><circle cx="421.62" cy="298.00" r="1.8"/><circle cx="428.69" cy="294.40" r="1.8"/><circle cx="435.76" cy="298.10" r="1.8"/><circle cx="442.83" cy="294.60" r="1.8"/><circle cx="449.90" cy="293.60" r="1.8"/><circle cx="456.97" cy="291.40" r="1.8"/><circle cx="464.04" cy="290.20" r="1.8"/><circle cx="471.11" cy="289.30" r="1.8"/><circle cx="478.18" cy="291.80" r="1.8"/><circle cx="485.25" cy="293.80" r="1.8"/><circle cx="492.32" cy="293.80" r="1.8"/><circle cx="499.39" cy="293.00" r="1.8"/><circle cx="506.46" cy="293.00" r="1.8"/><circle cx="513.53" cy="293.20" r="1.8"/><circle cx="520.60" cy="291.80" r="1.8"/></g><line x1="131.3" y1="167" x2="131.3" y2="432" stroke="#28d228" stroke-width="2.2"/><rect x="82.1" y="167" width="643.1999999999999" height="265" fill="none" stroke="#000" stroke-width="2"/><line x1="82.1" y1="503.12" x2="725.3" y2="503.12" stroke="#8c8c8c" stroke-width="1.1"/><line x1="82.1" y1="503.12" x2="86.1" y2="503.12" stroke="#111" stroke-width="1.2"/><line x1="721.3" y1="503.12" x2="725.3" y2="503.12" stroke="#111" stroke-width="1.2"/><line x1="82.1" y1="536.25" x2="725.3" y2="536.25" stroke="#8c8c8c" stroke-width="1.1"/><line x1="82.1" y1="536.25" x2="86.1" y2="536.25" stroke="#111" stroke-width="1.2"/><line x1="721.3" y1="536.25" x2="725.3" y2="536.25" stroke="#111" stroke-width="1.2"/><line x1="82.1" y1="569.38" x2="725.3" y2="569.38" stroke="#8c8c8c" stroke-width="1.1"/><line x1="82.1" y1="569.38" x2="86.1" y2="569.38" stroke="#111" stroke-width="1.2"/><line x1="721.3" y1="569.38" x2="725.3" y2="569.38" stroke="#111" stroke-width="1.2"/><line x1="82.1" y1="602.50" x2="725.3" y2="602.50" stroke="#8c8c8c" stroke-width="1.1"/><line x1="82.1" y1="602.50" x2="86.1" y2="602.50" stroke="#111" stroke-width="1.2"/><line x1="721.3" y1="602.50" x2="725.3" y2="602.50" stroke="#111" stroke-width="1.2"/><line x1="82.1" y1="635.62" x2="725.3" y2="635.62" stroke="#8c8c8c" stroke-width="1.1"/><line x1="82.1" y1="635.62" x2="86.1" y2="635.62" stroke="#111" stroke-width="1.2"/><line x1="721.3" y1="635.62" x2="725.3" y2="635.62" stroke="#111" stroke-width="1.2"/><line x1="82.1" y1="668.75" x2="725.3" y2="668.75" stroke="#8c8c8c" stroke-width="1.1"/><line x1="82.1" y1="668.75" x2="86.1" y2="668.75" stroke="#111" stroke-width="1.2"/><line x1="721.3" y1="668.75" x2="725.3" y2="668.75" stroke="#111" stroke-width="1.2"/><line x1="82.1" y1="701.88" x2="725.3" y2="701.88" stroke="#8c8c8c" stroke-width="1.1"/><line x1="82.1" y1="701.88" x2="86.1" y2="701.88" stroke="#111" stroke-width="1.2"/><line x1="721.3" y1="701.88" x2="725.3" y2="701.88" stroke="#111" stroke-width="1.2"/><text x="78.0" y="474.90" text-anchor="end" font-size="10.8" fill="#2a2a2a" stroke="#2a2a2a" stroke-width="0.18">160</text><text x="78.0" y="508.02" text-anchor="end" font-size="10.8" fill="#2a2a2a" stroke="#2a2a2a" stroke-width="0.18">120</text><text x="78.0" y="541.15" text-anchor="end" font-size="10.8" fill="#2a2a2a" stroke="#2a2a2a" stroke-width="0.18">80</text><text x="78.0" y="574.27" text-anchor="end" font-size="10.8" fill="#2a2a2a" stroke="#2a2a2a" stroke-width="0.18">40</text><text x="78.0" y="607.40" text-anchor="end" font-size="10.8" fill="#2a2a2a" stroke="#2a2a2a" stroke-width="0.18">0</text><text x="78.0" y="640.52" text-anchor="end" font-size="10.8" fill="#2a2a2a" stroke="#2a2a2a" stroke-width="0.18">−40</text><text x="78.0" y="673.65" text-anchor="end" font-size="10.8" fill="#2a2a2a" stroke="#2a2a2a" stroke-width="0.18">−80</text><text x="78.0" y="706.77" text-anchor="end" font-size="10.8" fill="#2a2a2a" stroke="#2a2a2a" stroke-width="0.18">−120</text><text x="78.0" y="739.90" text-anchor="end" font-size="10.8" fill="#2a2a2a" stroke="#2a2a2a" stroke-width="0.18">−160</text><line x1="89.17" y1="470" x2="89.17" y2="472.4" stroke="#111" stroke-width="1.25"/><line x1="89.17" y1="735" x2="89.17" y2="732.6" stroke="#111" stroke-width="1.25"/><line x1="96.24" y1="470" x2="96.24" y2="472.4" stroke="#111" stroke-width="1.25"/><line x1="96.24" y1="735" x2="96.24" y2="732.6" stroke="#111" stroke-width="1.25"/><line x1="103.32" y1="470" x2="103.32" y2="472.4" stroke="#111" stroke-width="1.25"/><line x1="103.32" y1="735" x2="103.32" y2="732.6" stroke="#111" stroke-width="1.25"/><line x1="110.39" y1="470" x2="110.39" y2="472.4" stroke="#111" stroke-width="1.25"/><line x1="110.39" y1="735" x2="110.39" y2="732.6" stroke="#111" stroke-width="1.25"/><line x1="117.46" y1="470" x2="117.46" y2="472.4" stroke="#111" stroke-width="1.25"/><line x1="117.46" y1="735" x2="117.46" y2="732.6" stroke="#111" stroke-width="1.25"/><line x1="124.53" y1="470" x2="124.53" y2="472.4" stroke="#111" stroke-width="1.25"/><line x1="124.53" y1="735" x2="124.53" y2="732.6" stroke="#111" stroke-width="1.25"/><line x1="131.60" y1="470" x2="131.60" y2="472.4" stroke="#111" stroke-width="1.25"/><line x1="131.60" y1="735" x2="131.60" y2="732.6" stroke="#111" stroke-width="1.25"/><line x1="138.68" y1="470" x2="138.68" y2="472.4" stroke="#111" stroke-width="1.25"/><line x1="138.68" y1="735" x2="138.68" y2="732.6" stroke="#111" stroke-width="1.25"/><line x1="145.75" y1="470" x2="145.75" y2="472.4" stroke="#111" stroke-width="1.25"/><line x1="145.75" y1="735" x2="145.75" y2="732.6" stroke="#111" stroke-width="1.25"/><line x1="152.82" y1="470" x2="152.82" y2="472.4" stroke="#111" stroke-width="1.25"/><line x1="152.82" y1="735" x2="152.82" y2="732.6" stroke="#111" stroke-width="1.25"/><line x1="159.89" y1="470" x2="159.89" y2="472.4" stroke="#111" stroke-width="1.25"/><line x1="159.89" y1="735" x2="159.89" y2="732.6" stroke="#111" stroke-width="1.25"/><line x1="166.97" y1="470" x2="166.97" y2="472.4" stroke="#111" stroke-width="1.25"/><line x1="166.97" y1="735" x2="166.97" y2="732.6" stroke="#111" stroke-width="1.25"/><line x1="174.04" y1="470" x2="174.04" y2="472.4" stroke="#111" stroke-width="1.25"/><line x1="174.04" y1="735" x2="174.04" y2="732.6" stroke="#111" stroke-width="1.25"/><line x1="181.11" y1="470" x2="181.11" y2="472.4" stroke="#111" stroke-width="1.25"/><line x1="181.11" y1="735" x2="181.11" y2="732.6" stroke="#111" stroke-width="1.25"/><line x1="188.18" y1="470" x2="188.18" y2="472.4" stroke="#111" stroke-width="1.25"/><line x1="188.18" y1="735" x2="188.18" y2="732.6" stroke="#111" stroke-width="1.25"/><line x1="195.25" y1="470" x2="195.25" y2="472.4" stroke="#111" stroke-width="1.25"/><line x1="195.25" y1="735" x2="195.25" y2="732.6" stroke="#111" stroke-width="1.25"/><line x1="202.33" y1="470" x2="202.33" y2="472.4" stroke="#111" stroke-width="1.25"/><line x1="202.33" y1="735" x2="202.33" y2="732.6" stroke="#111" stroke-width="1.25"/><line x1="209.40" y1="470" x2="209.40" y2="472.4" stroke="#111" stroke-width="1.25"/><line x1="209.40" y1="735" x2="209.40" y2="732.6" stroke="#111" stroke-width="1.25"/><line x1="216.47" y1="470" x2="216.47" y2="472.4" stroke="#111" stroke-width="1.25"/><line x1="216.47" y1="735" x2="216.47" y2="732.6" stroke="#111" stroke-width="1.25"/><line x1="223.54" y1="470" x2="223.54" y2="472.4" stroke="#111" stroke-width="1.25"/><line x1="223.54" y1="735" x2="223.54" y2="732.6" stroke="#111" stroke-width="1.25"/><line x1="230.61" y1="470" x2="230.61" y2="472.4" stroke="#111" stroke-width="1.25"/><line x1="230.61" y1="735" x2="230.61" y2="732.6" stroke="#111" stroke-width="1.25"/><line x1="237.69" y1="470" x2="237.69" y2="472.4" stroke="#111" stroke-width="1.25"/><line x1="237.69" y1="735" x2="237.69" y2="732.6" stroke="#111" stroke-width="1.25"/><line x1="244.76" y1="470" x2="244.76" y2="472.4" stroke="#111" stroke-width="1.25"/><line x1="244.76" y1="735" x2="244.76" y2="732.6" stroke="#111" stroke-width="1.25"/><line x1="251.83" y1="470" x2="251.83" y2="472.4" stroke="#111" stroke-width="1.25"/><line x1="251.83" y1="735" x2="251.83" y2="732.6" stroke="#111" stroke-width="1.25"/><line x1="258.90" y1="470" x2="258.90" y2="472.4" stroke="#111" stroke-width="1.25"/><line x1="258.90" y1="735" x2="258.90" y2="732.6" stroke="#111" stroke-width="1.25"/><line x1="265.98" y1="470" x2="265.98" y2="472.4" stroke="#111" stroke-width="1.25"/><line x1="265.98" y1="735" x2="265.98" y2="732.6" stroke="#111" stroke-width="1.25"/><line x1="273.05" y1="470" x2="273.05" y2="472.4" stroke="#111" stroke-width="1.25"/><line x1="273.05" y1="735" x2="273.05" y2="732.6" stroke="#111" stroke-width="1.25"/><line x1="280.12" y1="470" x2="280.12" y2="472.4" stroke="#111" stroke-width="1.25"/><line x1="280.12" y1="735" x2="280.12" y2="732.6" stroke="#111" stroke-width="1.25"/><line x1="287.19" y1="470" x2="287.19" y2="472.4" stroke="#111" stroke-width="1.25"/><line x1="287.19" y1="735" x2="287.19" y2="732.6" stroke="#111" stroke-width="1.25"/><line x1="294.26" y1="470" x2="294.26" y2="472.4" stroke="#111" stroke-width="1.25"/><line x1="294.26" y1="735" x2="294.26" y2="732.6" stroke="#111" stroke-width="1.25"/><line x1="301.34" y1="470" x2="301.34" y2="472.4" stroke="#111" stroke-width="1.25"/><line x1="301.34" y1="735" x2="301.34" y2="732.6" stroke="#111" stroke-width="1.25"/><line x1="308.41" y1="470" x2="308.41" y2="472.4" stroke="#111" stroke-width="1.25"/><line x1="308.41" y1="735" x2="308.41" y2="732.6" stroke="#111" stroke-width="1.25"/><line x1="315.48" y1="470" x2="315.48" y2="472.4" stroke="#111" stroke-width="1.25"/><line x1="315.48" y1="735" x2="315.48" y2="732.6" stroke="#111" stroke-width="1.25"/><line x1="322.55" y1="470" x2="322.55" y2="472.4" stroke="#111" stroke-width="1.25"/><line x1="322.55" y1="735" x2="322.55" y2="732.6" stroke="#111" stroke-width="1.25"/><line x1="329.62" y1="470" x2="329.62" y2="472.4" stroke="#111" stroke-width="1.25"/><line x1="329.62" y1="735" x2="329.62" y2="732.6" stroke="#111" stroke-width="1.25"/><line x1="336.70" y1="470" x2="336.70" y2="472.4" stroke="#111" stroke-width="1.25"/><line x1="336.70" y1="735" x2="336.70" y2="732.6" stroke="#111" stroke-width="1.25"/><line x1="343.77" y1="470" x2="343.77" y2="472.4" stroke="#111" stroke-width="1.25"/><line x1="343.77" y1="735" x2="343.77" y2="732.6" stroke="#111" stroke-width="1.25"/><line x1="350.84" y1="470" x2="350.84" y2="472.4" stroke="#111" stroke-width="1.25"/><line x1="350.84" y1="735" x2="350.84" y2="732.6" stroke="#111" stroke-width="1.25"/><line x1="357.91" y1="470" x2="357.91" y2="472.4" stroke="#111" stroke-width="1.25"/><line x1="357.91" y1="735" x2="357.91" y2="732.6" stroke="#111" stroke-width="1.25"/><line x1="364.99" y1="470" x2="364.99" y2="472.4" stroke="#111" stroke-width="1.25"/><line x1="364.99" y1="735" x2="364.99" y2="732.6" stroke="#111" stroke-width="1.25"/><line x1="372.06" y1="470" x2="372.06" y2="472.4" stroke="#111" stroke-width="1.25"/><line x1="372.06" y1="735" x2="372.06" y2="732.6" stroke="#111" stroke-width="1.25"/><line x1="379.13" y1="470" x2="379.13" y2="472.4" stroke="#111" stroke-width="1.25"/><line x1="379.13" y1="735" x2="379.13" y2="732.6" stroke="#111" stroke-width="1.25"/><line x1="386.20" y1="470" x2="386.20" y2="472.4" stroke="#111" stroke-width="1.25"/><line x1="386.20" y1="735" x2="386.20" y2="732.6" stroke="#111" stroke-width="1.25"/><line x1="393.27" y1="470" x2="393.27" y2="472.4" stroke="#111" stroke-width="1.25"/><line x1="393.27" y1="735" x2="393.27" y2="732.6" stroke="#111" stroke-width="1.25"/><line x1="400.35" y1="470" x2="400.35" y2="472.4" stroke="#111" stroke-width="1.25"/><line x1="400.35" y1="735" x2="400.35" y2="732.6" stroke="#111" stroke-width="1.25"/><line x1="407.42" y1="470" x2="407.42" y2="472.4" stroke="#111" stroke-width="1.25"/><line x1="407.42" y1="735" x2="407.42" y2="732.6" stroke="#111" stroke-width="1.25"/><line x1="414.49" y1="470" x2="414.49" y2="472.4" stroke="#111" stroke-width="1.25"/><line x1="414.49" y1="735" x2="414.49" y2="732.6" stroke="#111" stroke-width="1.25"/><line x1="421.56" y1="470" x2="421.56" y2="472.4" stroke="#111" stroke-width="1.25"/><line x1="421.56" y1="735" x2="421.56" y2="732.6" stroke="#111" stroke-width="1.25"/><line x1="428.63" y1="470" x2="428.63" y2="472.4" stroke="#111" stroke-width="1.25"/><line x1="428.63" y1="735" x2="428.63" y2="732.6" stroke="#111" stroke-width="1.25"/><line x1="435.71" y1="470" x2="435.71" y2="472.4" stroke="#111" stroke-width="1.25"/><line x1="435.71" y1="735" x2="435.71" y2="732.6" stroke="#111" stroke-width="1.25"/><line x1="442.78" y1="470" x2="442.78" y2="472.4" stroke="#111" stroke-width="1.25"/><line x1="442.78" y1="735" x2="442.78" y2="732.6" stroke="#111" stroke-width="1.25"/><line x1="449.85" y1="470" x2="449.85" y2="472.4" stroke="#111" stroke-width="1.25"/><line x1="449.85" y1="735" x2="449.85" y2="732.6" stroke="#111" stroke-width="1.25"/><line x1="456.92" y1="470" x2="456.92" y2="472.4" stroke="#111" stroke-width="1.25"/><line x1="456.92" y1="735" x2="456.92" y2="732.6" stroke="#111" stroke-width="1.25"/><line x1="464.00" y1="470" x2="464.00" y2="472.4" stroke="#111" stroke-width="1.25"/><line x1="464.00" y1="735" x2="464.00" y2="732.6" stroke="#111" stroke-width="1.25"/><line x1="471.07" y1="470" x2="471.07" y2="472.4" stroke="#111" stroke-width="1.25"/><line x1="471.07" y1="735" x2="471.07" y2="732.6" stroke="#111" stroke-width="1.25"/><line x1="478.14" y1="470" x2="478.14" y2="472.4" stroke="#111" stroke-width="1.25"/><line x1="478.14" y1="735" x2="478.14" y2="732.6" stroke="#111" stroke-width="1.25"/><line x1="485.21" y1="470" x2="485.21" y2="472.4" stroke="#111" stroke-width="1.25"/><line x1="485.21" y1="735" x2="485.21" y2="732.6" stroke="#111" stroke-width="1.25"/><line x1="492.28" y1="470" x2="492.28" y2="472.4" stroke="#111" stroke-width="1.25"/><line x1="492.28" y1="735" x2="492.28" y2="732.6" stroke="#111" stroke-width="1.25"/><line x1="499.36" y1="470" x2="499.36" y2="472.4" stroke="#111" stroke-width="1.25"/><line x1="499.36" y1="735" x2="499.36" y2="732.6" stroke="#111" stroke-width="1.25"/><line x1="506.43" y1="470" x2="506.43" y2="472.4" stroke="#111" stroke-width="1.25"/><line x1="506.43" y1="735" x2="506.43" y2="732.6" stroke="#111" stroke-width="1.25"/><line x1="513.50" y1="470" x2="513.50" y2="472.4" stroke="#111" stroke-width="1.25"/><line x1="513.50" y1="735" x2="513.50" y2="732.6" stroke="#111" stroke-width="1.25"/><line x1="520.57" y1="470" x2="520.57" y2="472.4" stroke="#111" stroke-width="1.25"/><line x1="520.57" y1="735" x2="520.57" y2="732.6" stroke="#111" stroke-width="1.25"/><line x1="527.64" y1="470" x2="527.64" y2="472.4" stroke="#111" stroke-width="1.25"/><line x1="527.64" y1="735" x2="527.64" y2="732.6" stroke="#111" stroke-width="1.25"/><line x1="534.72" y1="470" x2="534.72" y2="472.4" stroke="#111" stroke-width="1.25"/><line x1="534.72" y1="735" x2="534.72" y2="732.6" stroke="#111" stroke-width="1.25"/><line x1="541.79" y1="470" x2="541.79" y2="472.4" stroke="#111" stroke-width="1.25"/><line x1="541.79" y1="735" x2="541.79" y2="732.6" stroke="#111" stroke-width="1.25"/><line x1="548.86" y1="470" x2="548.86" y2="472.4" stroke="#111" stroke-width="1.25"/><line x1="548.86" y1="735" x2="548.86" y2="732.6" stroke="#111" stroke-width="1.25"/><line x1="555.93" y1="470" x2="555.93" y2="472.4" stroke="#111" stroke-width="1.25"/><line x1="555.93" y1="735" x2="555.93" y2="732.6" stroke="#111" stroke-width="1.25"/><line x1="563.00" y1="470" x2="563.00" y2="472.4" stroke="#111" stroke-width="1.25"/><line x1="563.00" y1="735" x2="563.00" y2="732.6" stroke="#111" stroke-width="1.25"/><line x1="570.08" y1="470" x2="570.08" y2="472.4" stroke="#111" stroke-width="1.25"/><line x1="570.08" y1="735" x2="570.08" y2="732.6" stroke="#111" stroke-width="1.25"/><line x1="577.15" y1="470" x2="577.15" y2="472.4" stroke="#111" stroke-width="1.25"/><line x1="577.15" y1="735" x2="577.15" y2="732.6" stroke="#111" stroke-width="1.25"/><line x1="584.22" y1="470" x2="584.22" y2="472.4" stroke="#111" stroke-width="1.25"/><line x1="584.22" y1="735" x2="584.22" y2="732.6" stroke="#111" stroke-width="1.25"/><line x1="591.29" y1="470" x2="591.29" y2="472.4" stroke="#111" stroke-width="1.25"/><line x1="591.29" y1="735" x2="591.29" y2="732.6" stroke="#111" stroke-width="1.25"/><line x1="598.37" y1="470" x2="598.37" y2="472.4" stroke="#111" stroke-width="1.25"/><line x1="598.37" y1="735" x2="598.37" y2="732.6" stroke="#111" stroke-width="1.25"/><line x1="605.44" y1="470" x2="605.44" y2="472.4" stroke="#111" stroke-width="1.25"/><line x1="605.44" y1="735" x2="605.44" y2="732.6" stroke="#111" stroke-width="1.25"/><line x1="612.51" y1="470" x2="612.51" y2="472.4" stroke="#111" stroke-width="1.25"/><line x1="612.51" y1="735" x2="612.51" y2="732.6" stroke="#111" stroke-width="1.25"/><line x1="619.58" y1="470" x2="619.58" y2="472.4" stroke="#111" stroke-width="1.25"/><line x1="619.58" y1="735" x2="619.58" y2="732.6" stroke="#111" stroke-width="1.25"/><line x1="626.65" y1="470" x2="626.65" y2="472.4" stroke="#111" stroke-width="1.25"/><line x1="626.65" y1="735" x2="626.65" y2="732.6" stroke="#111" stroke-width="1.25"/><line x1="633.73" y1="470" x2="633.73" y2="472.4" stroke="#111" stroke-width="1.25"/><line x1="633.73" y1="735" x2="633.73" y2="732.6" stroke="#111" stroke-width="1.25"/><line x1="640.80" y1="470" x2="640.80" y2="472.4" stroke="#111" stroke-width="1.25"/><line x1="640.80" y1="735" x2="640.80" y2="732.6" stroke="#111" stroke-width="1.25"/><line x1="647.87" y1="470" x2="647.87" y2="472.4" stroke="#111" stroke-width="1.25"/><line x1="647.87" y1="735" x2="647.87" y2="732.6" stroke="#111" stroke-width="1.25"/><line x1="654.94" y1="470" x2="654.94" y2="472.4" stroke="#111" stroke-width="1.25"/><line x1="654.94" y1="735" x2="654.94" y2="732.6" stroke="#111" stroke-width="1.25"/><line x1="662.01" y1="470" x2="662.01" y2="472.4" stroke="#111" stroke-width="1.25"/><line x1="662.01" y1="735" x2="662.01" y2="732.6" stroke="#111" stroke-width="1.25"/><line x1="669.09" y1="470" x2="669.09" y2="472.4" stroke="#111" stroke-width="1.25"/><line x1="669.09" y1="735" x2="669.09" y2="732.6" stroke="#111" stroke-width="1.25"/><line x1="676.16" y1="470" x2="676.16" y2="472.4" stroke="#111" stroke-width="1.25"/><line x1="676.16" y1="735" x2="676.16" y2="732.6" stroke="#111" stroke-width="1.25"/><line x1="683.23" y1="470" x2="683.23" y2="472.4" stroke="#111" stroke-width="1.25"/><line x1="683.23" y1="735" x2="683.23" y2="732.6" stroke="#111" stroke-width="1.25"/><line x1="690.30" y1="470" x2="690.30" y2="472.4" stroke="#111" stroke-width="1.25"/><line x1="690.30" y1="735" x2="690.30" y2="732.6" stroke="#111" stroke-width="1.25"/><line x1="697.38" y1="470" x2="697.38" y2="472.4" stroke="#111" stroke-width="1.25"/><line x1="697.38" y1="735" x2="697.38" y2="732.6" stroke="#111" stroke-width="1.25"/><line x1="704.45" y1="470" x2="704.45" y2="472.4" stroke="#111" stroke-width="1.25"/><line x1="704.45" y1="735" x2="704.45" y2="732.6" stroke="#111" stroke-width="1.25"/><line x1="711.52" y1="470" x2="711.52" y2="472.4" stroke="#111" stroke-width="1.25"/><line x1="711.52" y1="735" x2="711.52" y2="732.6" stroke="#111" stroke-width="1.25"/><line x1="718.59" y1="470" x2="718.59" y2="472.4" stroke="#111" stroke-width="1.25"/><line x1="718.59" y1="735" x2="718.59" y2="732.6" stroke="#111" stroke-width="1.25"/><line x1="216.3" y1="470" x2="216.3" y2="482.5" stroke="#555" stroke-width="1.3"/><line x1="216.3" y1="735" x2="216.3" y2="722.5" stroke="#555" stroke-width="1.3"/><line x1="435.4" y1="470" x2="435.4" y2="482.5" stroke="#555" stroke-width="1.3"/><line x1="435.4" y1="735" x2="435.4" y2="722.5" stroke="#555" stroke-width="1.3"/><line x1="647.7" y1="470" x2="647.7" y2="482.5" stroke="#555" stroke-width="1.3"/><line x1="647.7" y1="735" x2="647.7" y2="722.5" stroke="#555" stroke-width="1.3"/><text x="148.9" y="753.4" text-anchor="middle" font-size="12" fill="#222">Septiembre 21</text><text x="325.0" y="753.4" text-anchor="middle" font-size="12" fill="#222">Octubre 21</text><text x="541.3" y="753.4" text-anchor="middle" font-size="12" fill="#222">Noviembre 21</text><text x="686.2" y="753.4" text-anchor="middle" font-size="12" fill="#222">Diciembre 21</text><text transform="translate(43.2,602.5) rotate(-90)" text-anchor="middle" font-size="18" fill="#111">e [mm]</text><path d="M82.26 614.00V620.30M80.26 614.00H84.26M80.26 620.30H84.26M89.33 618.20V629.90M87.33 618.20H91.33M87.33 629.90H91.33M96.40 609.80V617.10M94.40 609.80H98.40M94.40 617.10H98.40M103.47 611.60V618.90M101.47 611.60H105.47M101.47 618.90H105.47M110.54 602.80V614.30M108.54 602.80H112.54M108.54 614.30H112.54M117.61 604.20V612.50M115.61 604.20H119.61M115.61 612.50H119.61M124.68 603.60V609.90M122.68 603.60H126.68M122.68 609.90H126.68M131.75 602.40V608.70M129.75 602.40H133.75M129.75 608.70H133.75M138.82 603.30V609.60M136.82 603.30H140.82M136.82 609.60H140.82M145.89 600.60V606.90M143.89 600.60H147.89M143.89 606.90H147.89M152.96 604.00V610.30M150.96 604.00H154.96M150.96 610.30H154.96M160.03 597.50V605.80M158.03 597.50H162.03M158.03 605.80H162.03M167.10 604.40V612.70M165.10 604.40H169.10M165.10 612.70H169.10M174.17 598.50V604.80M172.17 598.50H176.17M172.17 604.80H176.17M181.24 598.50V604.80M179.24 598.50H183.24M179.24 604.80H183.24M188.31 602.60V608.90M186.31 602.60H190.31M186.31 608.90H190.31M195.38 603.60V609.90M193.38 603.60H197.38M193.38 609.90H197.38M202.45 599.20V607.50M200.45 599.20H204.45M200.45 607.50H204.45M209.52 602.40V608.70M207.52 602.40H211.52M207.52 608.70H211.52M216.59 600.90V607.20M214.59 600.90H218.59M214.59 607.20H218.59M223.66 604.50V610.80M221.66 604.50H225.66M221.66 610.80H225.66M230.73 597.00V603.30M228.73 597.00H232.73M228.73 603.30H232.73M237.80 585.80V596.10M235.80 585.80H239.80M235.80 596.10H239.80M244.87 593.90V602.00M242.87 593.90H246.87M242.87 602.00H246.87M251.94 596.00V602.30M249.94 596.00H253.94M249.94 602.30H253.94M259.01 599.70V606.00M257.01 599.70H261.01M257.01 606.00H261.01M266.08 591.70V598.00M264.08 591.70H268.08M264.08 598.00H268.08M273.15 594.90V601.20M271.15 594.90H275.15M271.15 601.20H275.15M280.22 594.30V600.60M278.22 594.30H282.22M278.22 600.60H282.22M287.29 596.90V603.20M285.29 596.90H289.29M285.29 603.20H289.29M294.36 600.00V606.30M292.36 600.00H296.36M292.36 606.30H296.36M301.43 600.60V606.90M299.43 600.60H303.43M299.43 606.90H303.43M308.50 597.80V604.10M306.50 597.80H310.50M306.50 604.10H310.50M315.57 597.20V603.50M313.57 597.20H317.57M313.57 603.50H317.57M322.64 598.50V604.80M320.64 598.50H324.64M320.64 604.80H324.64M329.71 599.70V606.00M327.71 599.70H331.71M327.71 606.00H331.71M336.78 597.30V603.60M334.78 597.30H338.78M334.78 603.60H338.78M343.85 600.90V607.20M341.85 600.90H345.85M341.85 607.20H345.85M350.92 600.20V606.50M348.92 600.20H352.92M348.92 606.50H352.92M357.99 600.90V607.20M355.99 600.90H359.99M355.99 607.20H359.99M365.06 601.40V607.70M363.06 601.40H367.06M363.06 607.70H367.06M372.13 597.90V604.20M370.13 597.90H374.13M370.13 604.20H374.13M379.20 597.00V604.50M377.20 597.00H381.20M377.20 604.50H381.20M386.27 599.40V605.70M384.27 599.40H388.27M384.27 605.70H388.27M393.34 593.30V599.60M391.34 593.30H395.34M391.34 599.60H395.34M400.41 600.20V606.50M398.41 600.20H402.41M398.41 606.50H402.41M407.48 595.70V602.00M405.48 595.70H409.48M405.48 602.00H409.48M414.55 597.50V603.80M412.55 597.50H416.55M412.55 603.80H416.55M421.62 594.80V602.70M419.62 594.80H423.62M419.62 602.70H423.62M428.69 597.30V603.60M426.69 597.30H430.69M426.69 603.60H430.69M435.76 593.00V601.80M433.76 593.00H437.76M433.76 601.80H437.76M442.83 597.90V604.20M440.83 597.90H444.83M440.83 604.20H444.83M449.90 590.60V598.60M447.90 590.60H451.90M447.90 598.60H451.90M456.97 593.90V600.20M454.97 593.90H458.97M454.97 600.20H458.97M464.04 594.60V600.90M462.04 594.60H466.04M462.04 600.90H466.04M471.11 594.60V600.90M469.11 594.60H473.11M469.11 600.90H473.11M478.18 600.10V606.40M476.18 600.10H480.18M476.18 606.40H480.18M485.25 593.00V608.40M483.25 593.00H487.25M483.25 608.40H487.25M492.32 595.00V601.80M490.32 595.00H494.32M490.32 601.80H494.32M499.39 595.20V601.50M497.39 595.20H501.39M497.39 601.50H501.39M506.46 590.80V597.10M504.46 590.80H508.46M504.46 597.10H508.46M513.53 594.80V601.20M511.53 594.80H515.53M511.53 601.20H515.53M520.60 595.40V602.40M518.60 595.40H522.60M518.60 602.40H522.60M527.67 591.80V597.80M525.67 591.80H529.67M525.67 597.80H529.67M534.74 594.20V600.20M532.74 594.20H536.74M532.74 600.20H536.74M541.81 598.10V604.10M539.81 598.10H543.81M539.81 604.10H543.81M548.88 596.70V602.70M546.88 596.70H550.88M546.88 602.70H550.88M555.95 593.40V599.40M553.95 593.40H557.95M553.95 599.40H557.95M563.02 595.40V601.40M561.02 595.40H565.02M561.02 601.40H565.02M570.09 593.40V599.40M568.09 593.40H572.09M568.09 599.40H572.09M577.16 590.20V596.20M575.16 590.20H579.16M575.16 596.20H579.16M584.23 590.90V596.90M582.23 590.90H586.23M582.23 596.90H586.23M591.30 595.40V601.40M589.30 595.40H593.30M589.30 601.40H593.30M598.37 595.40V601.40M596.37 595.40H600.37M596.37 601.40H600.37M605.44 594.20V600.20M603.44 594.20H607.44M603.44 600.20H607.44M612.51 598.10V604.10M610.51 598.10H614.51M610.51 604.10H614.51M619.58 589.80V599.80M617.58 589.80H621.58M617.58 599.80H621.58M626.65 588.70V597.70M624.65 588.70H628.65M624.65 597.70H628.65M633.72 585.00V593.00M631.72 585.00H635.72M631.72 593.00H635.72M640.79 594.80V600.80M638.79 594.80H642.79M638.79 600.80H642.79M647.86 590.20V596.20M645.86 590.20H649.86M645.86 596.20H649.86M654.93 588.40V594.40M652.93 588.40H656.93M652.93 594.40H656.93M662.00 595.50V605.50M660.00 595.50H664.00M660.00 605.50H664.00M669.07 589.60V599.60M667.07 589.60H671.07M667.07 599.60H671.07M676.14 598.50V604.50M674.14 598.50H678.14M674.14 604.50H678.14M683.21 591.80V597.80M681.21 591.80H685.21M681.21 597.80H685.21M690.28 597.90V603.90M688.28 597.90H692.28M688.28 603.90H692.28M697.35 594.20V600.20M695.35 594.20H699.35M695.35 600.20H699.35M704.42 597.00V609.00M702.42 597.00H706.42M702.42 609.00H706.42M711.49 599.50V605.50M709.49 599.50H713.49M709.49 605.50H713.49M718.56 593.90V599.90M716.56 593.90H720.56M716.56 599.90H720.56" stroke="#4a4a4a" stroke-width="0.95" fill="none"/><g fill="#0000e6"><circle cx="82.26" cy="617.30" r="1.8"/><circle cx="89.33" cy="624.20" r="1.8"/><circle cx="96.40" cy="613.60" r="1.8"/><circle cx="103.47" cy="615.40" r="1.8"/><circle cx="110.54" cy="608.70" r="1.8"/><circle cx="117.61" cy="608.50" r="1.8"/><circle cx="124.68" cy="606.90" r="1.8"/><circle cx="131.75" cy="605.70" r="1.8"/><circle cx="138.82" cy="606.60" r="1.8"/><circle cx="145.89" cy="603.90" r="1.8"/><circle cx="152.96" cy="607.30" r="1.8"/><circle cx="160.03" cy="601.80" r="1.8"/><circle cx="167.10" cy="608.70" r="1.8"/><circle cx="174.17" cy="601.80" r="1.8"/><circle cx="181.24" cy="601.80" r="1.8"/><circle cx="188.31" cy="605.90" r="1.8"/><circle cx="195.38" cy="606.90" r="1.8"/><circle cx="202.45" cy="603.50" r="1.8"/><circle cx="209.52" cy="605.70" r="1.8"/><circle cx="216.59" cy="604.20" r="1.8"/><circle cx="223.66" cy="607.80" r="1.8"/><circle cx="230.73" cy="600.30" r="1.8"/><circle cx="237.80" cy="591.10" r="1.8"/><circle cx="244.87" cy="599.00" r="1.8"/><circle cx="251.94" cy="599.30" r="1.8"/><circle cx="259.01" cy="603.00" r="1.8"/><circle cx="266.08" cy="595.00" r="1.8"/><circle cx="273.15" cy="598.20" r="1.8"/><circle cx="280.22" cy="597.60" r="1.8"/><circle cx="287.29" cy="600.20" r="1.8"/><circle cx="294.36" cy="603.30" r="1.8"/><circle cx="301.43" cy="603.90" r="1.8"/><circle cx="308.50" cy="601.10" r="1.8"/><circle cx="315.57" cy="600.50" r="1.8"/><circle cx="322.64" cy="601.80" r="1.8"/><circle cx="329.71" cy="603.00" r="1.8"/><circle cx="336.78" cy="600.60" r="1.8"/><circle cx="343.85" cy="604.20" r="1.8"/><circle cx="350.92" cy="603.50" r="1.8"/><circle cx="357.99" cy="604.20" r="1.8"/><circle cx="365.06" cy="604.70" r="1.8"/><circle cx="372.13" cy="601.20" r="1.8"/><circle cx="379.20" cy="600.00" r="1.8"/><circle cx="386.27" cy="602.70" r="1.8"/><circle cx="393.34" cy="596.60" r="1.8"/><circle cx="400.41" cy="603.50" r="1.8"/><circle cx="407.48" cy="599.00" r="1.8"/><circle cx="414.55" cy="600.80" r="1.8"/><circle cx="421.62" cy="599.70" r="1.8"/><circle cx="428.69" cy="600.60" r="1.8"/><circle cx="435.76" cy="596.00" r="1.8"/><circle cx="442.83" cy="601.20" r="1.8"/><circle cx="449.90" cy="593.60" r="1.8"/><circle cx="456.97" cy="597.20" r="1.8"/><circle cx="464.04" cy="597.90" r="1.8"/><circle cx="471.11" cy="597.90" r="1.8"/><circle cx="478.18" cy="603.40" r="1.8"/><circle cx="485.25" cy="596.00" r="1.8"/><circle cx="492.32" cy="598.00" r="1.8"/><circle cx="499.39" cy="598.50" r="1.8"/><circle cx="506.46" cy="594.10" r="1.8"/><circle cx="513.53" cy="597.80" r="1.8"/><circle cx="520.60" cy="598.40" r="1.8"/><circle cx="527.67" cy="594.80" r="1.8"/><circle cx="534.74" cy="597.20" r="1.8"/><circle cx="541.81" cy="601.10" r="1.8"/><circle cx="548.88" cy="599.70" r="1.8"/><circle cx="555.95" cy="596.40" r="1.8"/><circle cx="563.02" cy="598.40" r="1.8"/><circle cx="570.09" cy="596.40" r="1.8"/><circle cx="577.16" cy="593.20" r="1.8"/><circle cx="584.23" cy="593.90" r="1.8"/><circle cx="591.30" cy="598.40" r="1.8"/><circle cx="598.37" cy="598.40" r="1.8"/><circle cx="605.44" cy="597.20" r="1.8"/><circle cx="612.51" cy="601.10" r="1.8"/><circle cx="619.58" cy="594.80" r="1.8"/><circle cx="626.65" cy="593.20" r="1.8"/><circle cx="633.72" cy="589.00" r="1.8"/><circle cx="640.79" cy="597.80" r="1.8"/><circle cx="647.86" cy="593.20" r="1.8"/><circle cx="654.93" cy="591.40" r="1.8"/><circle cx="662.00" cy="600.50" r="1.8"/><circle cx="669.07" cy="594.60" r="1.8"/><circle cx="676.14" cy="601.50" r="1.8"/><circle cx="683.21" cy="594.80" r="1.8"/><circle cx="690.28" cy="600.90" r="1.8"/><circle cx="697.35" cy="597.20" r="1.8"/><circle cx="704.42" cy="603.00" r="1.8"/><circle cx="711.49" cy="602.50" r="1.8"/><circle cx="718.56" cy="596.90" r="1.8"/></g><g fill="#ff0000"><circle cx="82.26" cy="617.00" r="1.8"/><circle cx="89.33" cy="623.90" r="1.8"/><circle cx="96.40" cy="613.30" r="1.8"/><circle cx="103.47" cy="615.10" r="1.8"/><circle cx="110.54" cy="608.40" r="1.8"/><circle cx="117.61" cy="608.20" r="1.8"/><circle cx="124.68" cy="606.60" r="1.8"/><circle cx="131.75" cy="605.40" r="1.8"/><circle cx="138.82" cy="606.30" r="1.8"/><circle cx="145.89" cy="603.60" r="1.8"/><circle cx="152.96" cy="607.00" r="1.8"/><circle cx="160.03" cy="601.50" r="1.8"/><circle cx="167.10" cy="608.40" r="1.8"/><circle cx="174.17" cy="601.50" r="1.8"/><circle cx="181.24" cy="601.50" r="1.8"/><circle cx="188.31" cy="605.60" r="1.8"/><circle cx="195.38" cy="606.60" r="1.8"/><circle cx="202.45" cy="603.20" r="1.8"/><circle cx="209.52" cy="605.40" r="1.8"/><circle cx="216.59" cy="603.90" r="1.8"/><circle cx="223.66" cy="607.50" r="1.8"/><circle cx="230.73" cy="600.00" r="1.8"/><circle cx="237.80" cy="590.80" r="1.8"/><circle cx="244.87" cy="596.90" r="1.8"/><circle cx="251.94" cy="599.00" r="1.8"/><circle cx="259.01" cy="602.70" r="1.8"/><circle cx="266.08" cy="594.70" r="1.8"/><circle cx="273.15" cy="597.90" r="1.8"/><circle cx="280.22" cy="597.30" r="1.8"/><circle cx="287.29" cy="599.90" r="1.8"/><circle cx="294.36" cy="603.00" r="1.8"/><circle cx="301.43" cy="603.60" r="1.8"/><circle cx="308.50" cy="600.80" r="1.8"/><circle cx="315.57" cy="600.20" r="1.8"/><circle cx="322.64" cy="601.50" r="1.8"/><circle cx="329.71" cy="602.70" r="1.8"/><circle cx="336.78" cy="600.30" r="1.8"/><circle cx="343.85" cy="603.90" r="1.8"/><circle cx="350.92" cy="603.20" r="1.8"/><circle cx="357.99" cy="603.90" r="1.8"/><circle cx="365.06" cy="604.40" r="1.8"/><circle cx="372.13" cy="600.90" r="1.8"/><circle cx="379.20" cy="601.50" r="1.8"/><circle cx="386.27" cy="602.40" r="1.8"/><circle cx="393.34" cy="596.30" r="1.8"/><circle cx="400.41" cy="603.20" r="1.8"/><circle cx="407.48" cy="598.70" r="1.8"/><circle cx="414.55" cy="600.50" r="1.8"/><circle cx="421.62" cy="597.80" r="1.8"/><circle cx="428.69" cy="600.30" r="1.8"/><circle cx="435.76" cy="598.80" r="1.8"/><circle cx="442.83" cy="600.90" r="1.8"/><circle cx="449.90" cy="595.60" r="1.8"/><circle cx="456.97" cy="596.90" r="1.8"/><circle cx="464.04" cy="597.60" r="1.8"/><circle cx="471.11" cy="597.60" r="1.8"/><circle cx="478.18" cy="603.10" r="1.8"/><circle cx="485.25" cy="605.40" r="1.8"/><circle cx="492.32" cy="598.80" r="1.8"/><circle cx="499.39" cy="598.20" r="1.8"/><circle cx="506.46" cy="593.80" r="1.8"/><circle cx="513.53" cy="598.20" r="1.8"/><circle cx="520.60" cy="599.40" r="1.8"/></g><line x1="131.3" y1="470" x2="131.3" y2="735" stroke="#28d228" stroke-width="2.2"/><rect x="82.1" y="470" width="643.1999999999999" height="265" fill="none" stroke="#000" stroke-width="2"/><line x1="82.1" y1="800.00" x2="725.3" y2="800.00" stroke="#8c8c8c" stroke-width="1.1"/><line x1="82.1" y1="800.00" x2="86.1" y2="800.00" stroke="#111" stroke-width="1.2"/><line x1="721.3" y1="800.00" x2="725.3" y2="800.00" stroke="#111" stroke-width="1.2"/><line x1="82.1" y1="825.50" x2="725.3" y2="825.50" stroke="#8c8c8c" stroke-width="1.1"/><line x1="82.1" y1="825.50" x2="86.1" y2="825.50" stroke="#111" stroke-width="1.2"/><line x1="721.3" y1="825.50" x2="725.3" y2="825.50" stroke="#111" stroke-width="1.2"/><line x1="82.1" y1="852.00" x2="725.3" y2="852.00" stroke="#8c8c8c" stroke-width="1.1"/><line x1="82.1" y1="852.00" x2="86.1" y2="852.00" stroke="#111" stroke-width="1.2"/><line x1="721.3" y1="852.00" x2="725.3" y2="852.00" stroke="#111" stroke-width="1.2"/><line x1="82.1" y1="878.50" x2="725.3" y2="878.50" stroke="#8c8c8c" stroke-width="1.1"/><line x1="82.1" y1="878.50" x2="86.1" y2="878.50" stroke="#111" stroke-width="1.2"/><line x1="721.3" y1="878.50" x2="725.3" y2="878.50" stroke="#111" stroke-width="1.2"/><line x1="82.1" y1="905.50" x2="725.3" y2="905.50" stroke="#8c8c8c" stroke-width="1.1"/><line x1="82.1" y1="905.50" x2="86.1" y2="905.50" stroke="#111" stroke-width="1.2"/><line x1="721.3" y1="905.50" x2="725.3" y2="905.50" stroke="#111" stroke-width="1.2"/><line x1="82.1" y1="931.50" x2="725.3" y2="931.50" stroke="#8c8c8c" stroke-width="1.1"/><line x1="82.1" y1="931.50" x2="86.1" y2="931.50" stroke="#111" stroke-width="1.2"/><line x1="721.3" y1="931.50" x2="725.3" y2="931.50" stroke="#111" stroke-width="1.2"/><line x1="82.1" y1="958.50" x2="725.3" y2="958.50" stroke="#8c8c8c" stroke-width="1.1"/><line x1="82.1" y1="958.50" x2="86.1" y2="958.50" stroke="#111" stroke-width="1.2"/><line x1="721.3" y1="958.50" x2="725.3" y2="958.50" stroke="#111" stroke-width="1.2"/><line x1="82.1" y1="985.50" x2="725.3" y2="985.50" stroke="#8c8c8c" stroke-width="1.1"/><line x1="82.1" y1="985.50" x2="86.1" y2="985.50" stroke="#111" stroke-width="1.2"/><line x1="721.3" y1="985.50" x2="725.3" y2="985.50" stroke="#111" stroke-width="1.2"/><line x1="82.1" y1="1011.50" x2="725.3" y2="1011.50" stroke="#8c8c8c" stroke-width="1.1"/><line x1="82.1" y1="1011.50" x2="86.1" y2="1011.50" stroke="#111" stroke-width="1.2"/><line x1="721.3" y1="1011.50" x2="725.3" y2="1011.50" stroke="#111" stroke-width="1.2"/><text x="78.0" y="777.90" text-anchor="end" font-size="10.8" fill="#2a2a2a" stroke="#2a2a2a" stroke-width="0.18">240</text><text x="78.0" y="804.40" text-anchor="end" font-size="10.8" fill="#2a2a2a" stroke="#2a2a2a" stroke-width="0.18">200</text><text x="78.0" y="830.90" text-anchor="end" font-size="10.8" fill="#2a2a2a" stroke="#2a2a2a" stroke-width="0.18">160</text><text x="78.0" y="857.40" text-anchor="end" font-size="10.8" fill="#2a2a2a" stroke="#2a2a2a" stroke-width="0.18">120</text><text x="78.0" y="883.90" text-anchor="end" font-size="10.8" fill="#2a2a2a" stroke="#2a2a2a" stroke-width="0.18">80</text><text x="78.0" y="910.40" text-anchor="end" font-size="10.8" fill="#2a2a2a" stroke="#2a2a2a" stroke-width="0.18">40</text><text x="78.0" y="936.90" text-anchor="end" font-size="10.8" fill="#2a2a2a" stroke="#2a2a2a" stroke-width="0.18">0</text><text x="78.0" y="963.40" text-anchor="end" font-size="10.8" fill="#2a2a2a" stroke="#2a2a2a" stroke-width="0.18">−40</text><text x="78.0" y="989.90" text-anchor="end" font-size="10.8" fill="#2a2a2a" stroke="#2a2a2a" stroke-width="0.18">−80</text><text x="78.0" y="1016.40" text-anchor="end" font-size="10.8" fill="#2a2a2a" stroke="#2a2a2a" stroke-width="0.18">−120</text><text x="78.0" y="1042.90" text-anchor="end" font-size="10.8" fill="#2a2a2a" stroke="#2a2a2a" stroke-width="0.18">−160</text><line x1="89.17" y1="773" x2="89.17" y2="775.4" stroke="#111" stroke-width="1.25"/><line x1="89.17" y1="1038" x2="89.17" y2="1035.6" stroke="#111" stroke-width="1.25"/><line x1="96.24" y1="773" x2="96.24" y2="775.4" stroke="#111" stroke-width="1.25"/><line x1="96.24" y1="1038" x2="96.24" y2="1035.6" stroke="#111" stroke-width="1.25"/><line x1="103.32" y1="773" x2="103.32" y2="775.4" stroke="#111" stroke-width="1.25"/><line x1="103.32" y1="1038" x2="103.32" y2="1035.6" stroke="#111" stroke-width="1.25"/><line x1="110.39" y1="773" x2="110.39" y2="775.4" stroke="#111" stroke-width="1.25"/><line x1="110.39" y1="1038" x2="110.39" y2="1035.6" stroke="#111" stroke-width="1.25"/><line x1="117.46" y1="773" x2="117.46" y2="775.4" stroke="#111" stroke-width="1.25"/><line x1="117.46" y1="1038" x2="117.46" y2="1035.6" stroke="#111" stroke-width="1.25"/><line x1="124.53" y1="773" x2="124.53" y2="775.4" stroke="#111" stroke-width="1.25"/><line x1="124.53" y1="1038" x2="124.53" y2="1035.6" stroke="#111" stroke-width="1.25"/><line x1="131.60" y1="773" x2="131.60" y2="775.4" stroke="#111" stroke-width="1.25"/><line x1="131.60" y1="1038" x2="131.60" y2="1035.6" stroke="#111" stroke-width="1.25"/><line x1="138.68" y1="773" x2="138.68" y2="775.4" stroke="#111" stroke-width="1.25"/><line x1="138.68" y1="1038" x2="138.68" y2="1035.6" stroke="#111" stroke-width="1.25"/><line x1="145.75" y1="773" x2="145.75" y2="775.4" stroke="#111" stroke-width="1.25"/><line x1="145.75" y1="1038" x2="145.75" y2="1035.6" stroke="#111" stroke-width="1.25"/><line x1="152.82" y1="773" x2="152.82" y2="775.4" stroke="#111" stroke-width="1.25"/><line x1="152.82" y1="1038" x2="152.82" y2="1035.6" stroke="#111" stroke-width="1.25"/><line x1="159.89" y1="773" x2="159.89" y2="775.4" stroke="#111" stroke-width="1.25"/><line x1="159.89" y1="1038" x2="159.89" y2="1035.6" stroke="#111" stroke-width="1.25"/><line x1="166.97" y1="773" x2="166.97" y2="775.4" stroke="#111" stroke-width="1.25"/><line x1="166.97" y1="1038" x2="166.97" y2="1035.6" stroke="#111" stroke-width="1.25"/><line x1="174.04" y1="773" x2="174.04" y2="775.4" stroke="#111" stroke-width="1.25"/><line x1="174.04" y1="1038" x2="174.04" y2="1035.6" stroke="#111" stroke-width="1.25"/><line x1="181.11" y1="773" x2="181.11" y2="775.4" stroke="#111" stroke-width="1.25"/><line x1="181.11" y1="1038" x2="181.11" y2="1035.6" stroke="#111" stroke-width="1.25"/><line x1="188.18" y1="773" x2="188.18" y2="775.4" stroke="#111" stroke-width="1.25"/><line x1="188.18" y1="1038" x2="188.18" y2="1035.6" stroke="#111" stroke-width="1.25"/><line x1="195.25" y1="773" x2="195.25" y2="775.4" stroke="#111" stroke-width="1.25"/><line x1="195.25" y1="1038" x2="195.25" y2="1035.6" stroke="#111" stroke-width="1.25"/><line x1="202.33" y1="773" x2="202.33" y2="775.4" stroke="#111" stroke-width="1.25"/><line x1="202.33" y1="1038" x2="202.33" y2="1035.6" stroke="#111" stroke-width="1.25"/><line x1="209.40" y1="773" x2="209.40" y2="775.4" stroke="#111" stroke-width="1.25"/><line x1="209.40" y1="1038" x2="209.40" y2="1035.6" stroke="#111" stroke-width="1.25"/><line x1="216.47" y1="773" x2="216.47" y2="775.4" stroke="#111" stroke-width="1.25"/><line x1="216.47" y1="1038" x2="216.47" y2="1035.6" stroke="#111" stroke-width="1.25"/><line x1="223.54" y1="773" x2="223.54" y2="775.4" stroke="#111" stroke-width="1.25"/><line x1="223.54" y1="1038" x2="223.54" y2="1035.6" stroke="#111" stroke-width="1.25"/><line x1="230.61" y1="773" x2="230.61" y2="775.4" stroke="#111" stroke-width="1.25"/><line x1="230.61" y1="1038" x2="230.61" y2="1035.6" stroke="#111" stroke-width="1.25"/><line x1="237.69" y1="773" x2="237.69" y2="775.4" stroke="#111" stroke-width="1.25"/><line x1="237.69" y1="1038" x2="237.69" y2="1035.6" stroke="#111" stroke-width="1.25"/><line x1="244.76" y1="773" x2="244.76" y2="775.4" stroke="#111" stroke-width="1.25"/><line x1="244.76" y1="1038" x2="244.76" y2="1035.6" stroke="#111" stroke-width="1.25"/><line x1="251.83" y1="773" x2="251.83" y2="775.4" stroke="#111" stroke-width="1.25"/><line x1="251.83" y1="1038" x2="251.83" y2="1035.6" stroke="#111" stroke-width="1.25"/><line x1="258.90" y1="773" x2="258.90" y2="775.4" stroke="#111" stroke-width="1.25"/><line x1="258.90" y1="1038" x2="258.90" y2="1035.6" stroke="#111" stroke-width="1.25"/><line x1="265.98" y1="773" x2="265.98" y2="775.4" stroke="#111" stroke-width="1.25"/><line x1="265.98" y1="1038" x2="265.98" y2="1035.6" stroke="#111" stroke-width="1.25"/><line x1="273.05" y1="773" x2="273.05" y2="775.4" stroke="#111" stroke-width="1.25"/><line x1="273.05" y1="1038" x2="273.05" y2="1035.6" stroke="#111" stroke-width="1.25"/><line x1="280.12" y1="773" x2="280.12" y2="775.4" stroke="#111" stroke-width="1.25"/><line x1="280.12" y1="1038" x2="280.12" y2="1035.6" stroke="#111" stroke-width="1.25"/><line x1="287.19" y1="773" x2="287.19" y2="775.4" stroke="#111" stroke-width="1.25"/><line x1="287.19" y1="1038" x2="287.19" y2="1035.6" stroke="#111" stroke-width="1.25"/><line x1="294.26" y1="773" x2="294.26" y2="775.4" stroke="#111" stroke-width="1.25"/><line x1="294.26" y1="1038" x2="294.26" y2="1035.6" stroke="#111" stroke-width="1.25"/><line x1="301.34" y1="773" x2="301.34" y2="775.4" stroke="#111" stroke-width="1.25"/><line x1="301.34" y1="1038" x2="301.34" y2="1035.6" stroke="#111" stroke-width="1.25"/><line x1="308.41" y1="773" x2="308.41" y2="775.4" stroke="#111" stroke-width="1.25"/><line x1="308.41" y1="1038" x2="308.41" y2="1035.6" stroke="#111" stroke-width="1.25"/><line x1="315.48" y1="773" x2="315.48" y2="775.4" stroke="#111" stroke-width="1.25"/><line x1="315.48" y1="1038" x2="315.48" y2="1035.6" stroke="#111" stroke-width="1.25"/><line x1="322.55" y1="773" x2="322.55" y2="775.4" stroke="#111" stroke-width="1.25"/><line x1="322.55" y1="1038" x2="322.55" y2="1035.6" stroke="#111" stroke-width="1.25"/><line x1="329.62" y1="773" x2="329.62" y2="775.4" stroke="#111" stroke-width="1.25"/><line x1="329.62" y1="1038" x2="329.62" y2="1035.6" stroke="#111" stroke-width="1.25"/><line x1="336.70" y1="773" x2="336.70" y2="775.4" stroke="#111" stroke-width="1.25"/><line x1="336.70" y1="1038" x2="336.70" y2="1035.6" stroke="#111" stroke-width="1.25"/><line x1="343.77" y1="773" x2="343.77" y2="775.4" stroke="#111" stroke-width="1.25"/><line x1="343.77" y1="1038" x2="343.77" y2="1035.6" stroke="#111" stroke-width="1.25"/><line x1="350.84" y1="773" x2="350.84" y2="775.4" stroke="#111" stroke-width="1.25"/><line x1="350.84" y1="1038" x2="350.84" y2="1035.6" stroke="#111" stroke-width="1.25"/><line x1="357.91" y1="773" x2="357.91" y2="775.4" stroke="#111" stroke-width="1.25"/><line x1="357.91" y1="1038" x2="357.91" y2="1035.6" stroke="#111" stroke-width="1.25"/><line x1="364.99" y1="773" x2="364.99" y2="775.4" stroke="#111" stroke-width="1.25"/><line x1="364.99" y1="1038" x2="364.99" y2="1035.6" stroke="#111" stroke-width="1.25"/><line x1="372.06" y1="773" x2="372.06" y2="775.4" stroke="#111" stroke-width="1.25"/><line x1="372.06" y1="1038" x2="372.06" y2="1035.6" stroke="#111" stroke-width="1.25"/><line x1="379.13" y1="773" x2="379.13" y2="775.4" stroke="#111" stroke-width="1.25"/><line x1="379.13" y1="1038" x2="379.13" y2="1035.6" stroke="#111" stroke-width="1.25"/><line x1="386.20" y1="773" x2="386.20" y2="775.4" stroke="#111" stroke-width="1.25"/><line x1="386.20" y1="1038" x2="386.20" y2="1035.6" stroke="#111" stroke-width="1.25"/><line x1="393.27" y1="773" x2="393.27" y2="775.4" stroke="#111" stroke-width="1.25"/><line x1="393.27" y1="1038" x2="393.27" y2="1035.6" stroke="#111" stroke-width="1.25"/><line x1="400.35" y1="773" x2="400.35" y2="775.4" stroke="#111" stroke-width="1.25"/><line x1="400.35" y1="1038" x2="400.35" y2="1035.6" stroke="#111" stroke-width="1.25"/><line x1="407.42" y1="773" x2="407.42" y2="775.4" stroke="#111" stroke-width="1.25"/><line x1="407.42" y1="1038" x2="407.42" y2="1035.6" stroke="#111" stroke-width="1.25"/><line x1="414.49" y1="773" x2="414.49" y2="775.4" stroke="#111" stroke-width="1.25"/><line x1="414.49" y1="1038" x2="414.49" y2="1035.6" stroke="#111" stroke-width="1.25"/><line x1="421.56" y1="773" x2="421.56" y2="775.4" stroke="#111" stroke-width="1.25"/><line x1="421.56" y1="1038" x2="421.56" y2="1035.6" stroke="#111" stroke-width="1.25"/><line x1="428.63" y1="773" x2="428.63" y2="775.4" stroke="#111" stroke-width="1.25"/><line x1="428.63" y1="1038" x2="428.63" y2="1035.6" stroke="#111" stroke-width="1.25"/><line x1="435.71" y1="773" x2="435.71" y2="775.4" stroke="#111" stroke-width="1.25"/><line x1="435.71" y1="1038" x2="435.71" y2="1035.6" stroke="#111" stroke-width="1.25"/><line x1="442.78" y1="773" x2="442.78" y2="775.4" stroke="#111" stroke-width="1.25"/><line x1="442.78" y1="1038" x2="442.78" y2="1035.6" stroke="#111" stroke-width="1.25"/><line x1="449.85" y1="773" x2="449.85" y2="775.4" stroke="#111" stroke-width="1.25"/><line x1="449.85" y1="1038" x2="449.85" y2="1035.6" stroke="#111" stroke-width="1.25"/><line x1="456.92" y1="773" x2="456.92" y2="775.4" stroke="#111" stroke-width="1.25"/><line x1="456.92" y1="1038" x2="456.92" y2="1035.6" stroke="#111" stroke-width="1.25"/><line x1="464.00" y1="773" x2="464.00" y2="775.4" stroke="#111" stroke-width="1.25"/><line x1="464.00" y1="1038" x2="464.00" y2="1035.6" stroke="#111" stroke-width="1.25"/><line x1="471.07" y1="773" x2="471.07" y2="775.4" stroke="#111" stroke-width="1.25"/><line x1="471.07" y1="1038" x2="471.07" y2="1035.6" stroke="#111" stroke-width="1.25"/><line x1="478.14" y1="773" x2="478.14" y2="775.4" stroke="#111" stroke-width="1.25"/><line x1="478.14" y1="1038" x2="478.14" y2="1035.6" stroke="#111" stroke-width="1.25"/><line x1="485.21" y1="773" x2="485.21" y2="775.4" stroke="#111" stroke-width="1.25"/><line x1="485.21" y1="1038" x2="485.21" y2="1035.6" stroke="#111" stroke-width="1.25"/><line x1="492.28" y1="773" x2="492.28" y2="775.4" stroke="#111" stroke-width="1.25"/><line x1="492.28" y1="1038" x2="492.28" y2="1035.6" stroke="#111" stroke-width="1.25"/><line x1="499.36" y1="773" x2="499.36" y2="775.4" stroke="#111" stroke-width="1.25"/><line x1="499.36" y1="1038" x2="499.36" y2="1035.6" stroke="#111" stroke-width="1.25"/><line x1="506.43" y1="773" x2="506.43" y2="775.4" stroke="#111" stroke-width="1.25"/><line x1="506.43" y1="1038" x2="506.43" y2="1035.6" stroke="#111" stroke-width="1.25"/><line x1="513.50" y1="773" x2="513.50" y2="775.4" stroke="#111" stroke-width="1.25"/><line x1="513.50" y1="1038" x2="513.50" y2="1035.6" stroke="#111" stroke-width="1.25"/><line x1="520.57" y1="773" x2="520.57" y2="775.4" stroke="#111" stroke-width="1.25"/><line x1="520.57" y1="1038" x2="520.57" y2="1035.6" stroke="#111" stroke-width="1.25"/><line x1="527.64" y1="773" x2="527.64" y2="775.4" stroke="#111" stroke-width="1.25"/><line x1="527.64" y1="1038" x2="527.64" y2="1035.6" stroke="#111" stroke-width="1.25"/><line x1="534.72" y1="773" x2="534.72" y2="775.4" stroke="#111" stroke-width="1.25"/><line x1="534.72" y1="1038" x2="534.72" y2="1035.6" stroke="#111" stroke-width="1.25"/><line x1="541.79" y1="773" x2="541.79" y2="775.4" stroke="#111" stroke-width="1.25"/><line x1="541.79" y1="1038" x2="541.79" y2="1035.6" stroke="#111" stroke-width="1.25"/><line x1="548.86" y1="773" x2="548.86" y2="775.4" stroke="#111" stroke-width="1.25"/><line x1="548.86" y1="1038" x2="548.86" y2="1035.6" stroke="#111" stroke-width="1.25"/><line x1="555.93" y1="773" x2="555.93" y2="775.4" stroke="#111" stroke-width="1.25"/><line x1="555.93" y1="1038" x2="555.93" y2="1035.6" stroke="#111" stroke-width="1.25"/><line x1="563.00" y1="773" x2="563.00" y2="775.4" stroke="#111" stroke-width="1.25"/><line x1="563.00" y1="1038" x2="563.00" y2="1035.6" stroke="#111" stroke-width="1.25"/><line x1="570.08" y1="773" x2="570.08" y2="775.4" stroke="#111" stroke-width="1.25"/><line x1="570.08" y1="1038" x2="570.08" y2="1035.6" stroke="#111" stroke-width="1.25"/><line x1="577.15" y1="773" x2="577.15" y2="775.4" stroke="#111" stroke-width="1.25"/><line x1="577.15" y1="1038" x2="577.15" y2="1035.6" stroke="#111" stroke-width="1.25"/><line x1="584.22" y1="773" x2="584.22" y2="775.4" stroke="#111" stroke-width="1.25"/><line x1="584.22" y1="1038" x2="584.22" y2="1035.6" stroke="#111" stroke-width="1.25"/><line x1="591.29" y1="773" x2="591.29" y2="775.4" stroke="#111" stroke-width="1.25"/><line x1="591.29" y1="1038" x2="591.29" y2="1035.6" stroke="#111" stroke-width="1.25"/><line x1="598.37" y1="773" x2="598.37" y2="775.4" stroke="#111" stroke-width="1.25"/><line x1="598.37" y1="1038" x2="598.37" y2="1035.6" stroke="#111" stroke-width="1.25"/><line x1="605.44" y1="773" x2="605.44" y2="775.4" stroke="#111" stroke-width="1.25"/><line x1="605.44" y1="1038" x2="605.44" y2="1035.6" stroke="#111" stroke-width="1.25"/><line x1="612.51" y1="773" x2="612.51" y2="775.4" stroke="#111" stroke-width="1.25"/><line x1="612.51" y1="1038" x2="612.51" y2="1035.6" stroke="#111" stroke-width="1.25"/><line x1="619.58" y1="773" x2="619.58" y2="775.4" stroke="#111" stroke-width="1.25"/><line x1="619.58" y1="1038" x2="619.58" y2="1035.6" stroke="#111" stroke-width="1.25"/><line x1="626.65" y1="773" x2="626.65" y2="775.4" stroke="#111" stroke-width="1.25"/><line x1="626.65" y1="1038" x2="626.65" y2="1035.6" stroke="#111" stroke-width="1.25"/><line x1="633.73" y1="773" x2="633.73" y2="775.4" stroke="#111" stroke-width="1.25"/><line x1="633.73" y1="1038" x2="633.73" y2="1035.6" stroke="#111" stroke-width="1.25"/><line x1="640.80" y1="773" x2="640.80" y2="775.4" stroke="#111" stroke-width="1.25"/><line x1="640.80" y1="1038" x2="640.80" y2="1035.6" stroke="#111" stroke-width="1.25"/><line x1="647.87" y1="773" x2="647.87" y2="775.4" stroke="#111" stroke-width="1.25"/><line x1="647.87" y1="1038" x2="647.87" y2="1035.6" stroke="#111" stroke-width="1.25"/><line x1="654.94" y1="773" x2="654.94" y2="775.4" stroke="#111" stroke-width="1.25"/><line x1="654.94" y1="1038" x2="654.94" y2="1035.6" stroke="#111" stroke-width="1.25"/><line x1="662.01" y1="773" x2="662.01" y2="775.4" stroke="#111" stroke-width="1.25"/><line x1="662.01" y1="1038" x2="662.01" y2="1035.6" stroke="#111" stroke-width="1.25"/><line x1="669.09" y1="773" x2="669.09" y2="775.4" stroke="#111" stroke-width="1.25"/><line x1="669.09" y1="1038" x2="669.09" y2="1035.6" stroke="#111" stroke-width="1.25"/><line x1="676.16" y1="773" x2="676.16" y2="775.4" stroke="#111" stroke-width="1.25"/><line x1="676.16" y1="1038" x2="676.16" y2="1035.6" stroke="#111" stroke-width="1.25"/><line x1="683.23" y1="773" x2="683.23" y2="775.4" stroke="#111" stroke-width="1.25"/><line x1="683.23" y1="1038" x2="683.23" y2="1035.6" stroke="#111" stroke-width="1.25"/><line x1="690.30" y1="773" x2="690.30" y2="775.4" stroke="#111" stroke-width="1.25"/><line x1="690.30" y1="1038" x2="690.30" y2="1035.6" stroke="#111" stroke-width="1.25"/><line x1="697.38" y1="773" x2="697.38" y2="775.4" stroke="#111" stroke-width="1.25"/><line x1="697.38" y1="1038" x2="697.38" y2="1035.6" stroke="#111" stroke-width="1.25"/><line x1="704.45" y1="773" x2="704.45" y2="775.4" stroke="#111" stroke-width="1.25"/><line x1="704.45" y1="1038" x2="704.45" y2="1035.6" stroke="#111" stroke-width="1.25"/><line x1="711.52" y1="773" x2="711.52" y2="775.4" stroke="#111" stroke-width="1.25"/><line x1="711.52" y1="1038" x2="711.52" y2="1035.6" stroke="#111" stroke-width="1.25"/><line x1="718.59" y1="773" x2="718.59" y2="775.4" stroke="#111" stroke-width="1.25"/><line x1="718.59" y1="1038" x2="718.59" y2="1035.6" stroke="#111" stroke-width="1.25"/><line x1="216.3" y1="773" x2="216.3" y2="785.5" stroke="#555" stroke-width="1.3"/><line x1="216.3" y1="1038" x2="216.3" y2="1025.5" stroke="#555" stroke-width="1.3"/><line x1="435.4" y1="773" x2="435.4" y2="785.5" stroke="#555" stroke-width="1.3"/><line x1="435.4" y1="1038" x2="435.4" y2="1025.5" stroke="#555" stroke-width="1.3"/><line x1="647.7" y1="773" x2="647.7" y2="785.5" stroke="#555" stroke-width="1.3"/><line x1="647.7" y1="1038" x2="647.7" y2="1025.5" stroke="#555" stroke-width="1.3"/><text x="148.9" y="1056.4" text-anchor="middle" font-size="12" fill="#222">Septiembre 21</text><text x="325.0" y="1056.4" text-anchor="middle" font-size="12" fill="#222">Octubre 21</text><text x="541.3" y="1056.4" text-anchor="middle" font-size="12" fill="#222">Noviembre 21</text><text x="686.2" y="1056.4" text-anchor="middle" font-size="12" fill="#222">Diciembre 21</text><text transform="translate(43.2,905.5) rotate(-90)" text-anchor="middle" font-size="18" fill="#111">u [mm]</text><text x="403.6" y="1075" text-anchor="middle" font-size="18.4" fill="#111">Fecha</text><path d="M82.26 931.40V940.70M80.26 931.40H84.26M80.26 940.70H84.26M89.33 934.70V947.80M87.33 934.70H91.33M87.33 947.80H91.33M96.40 939.80V949.50M94.40 939.80H98.40M94.40 949.50H98.40M103.47 916.50V924.80M101.47 916.50H105.47M101.47 924.80H105.47M110.54 892.90V908.80M108.54 892.90H112.54M108.54 908.80H112.54M117.61 928.50V944.40M115.61 928.50H119.61M115.61 944.40H119.61M124.68 925.70V935.00M122.68 925.70H126.68M122.68 935.00H126.68M131.75 917.60V927.90M129.75 917.60H133.75M129.75 927.90H133.75M138.82 905.50V914.80M136.82 905.50H140.82M136.82 914.80H140.82M145.89 914.70V924.00M143.89 914.70H147.89M143.89 924.00H147.89M152.96 921.10V930.40M150.96 921.10H154.96M150.96 930.40H154.96M160.03 935.80V946.10M158.03 935.80H162.03M158.03 946.10H162.03M167.10 918.10V927.40M165.10 918.10H169.10M165.10 927.40H169.10M174.17 923.90V933.20M172.17 923.90H176.17M172.17 933.20H176.17M181.24 923.80V933.10M179.24 923.80H183.24M179.24 933.10H183.24M188.31 910.80V920.10M186.31 910.80H190.31M186.31 920.10H190.31M195.38 918.90V928.20M193.38 918.90H197.38M193.38 928.20H197.38M202.45 943.50V953.80M200.45 943.50H204.45M200.45 953.80H204.45M209.52 926.90V936.20M207.52 926.90H211.52M207.52 936.20H211.52M216.59 921.70V931.00M214.59 921.70H218.59M214.59 931.00H218.59M223.66 914.20V923.50M221.66 914.20H225.66M221.66 923.50H225.66M230.73 916.00V925.30M228.73 916.00H232.73M228.73 925.30H232.73M237.80 933.40V947.70M235.80 933.40H239.80M235.80 947.70H239.80M244.87 926.60V937.40M242.87 926.60H246.87M242.87 937.40H246.87M251.94 922.30V931.60M249.94 922.30H253.94M249.94 931.60H253.94M259.01 920.90V930.20M257.01 920.90H261.01M257.01 930.20H261.01M266.08 939.10V948.40M264.08 939.10H268.08M264.08 948.40H268.08M273.15 927.20V936.50M271.15 927.20H275.15M271.15 936.50H275.15M280.22 939.60V948.90M278.22 939.60H282.22M278.22 948.90H282.22M287.29 939.60V948.90M285.29 939.60H289.29M285.29 948.90H289.29M294.36 920.30V929.60M292.36 920.30H296.36M292.36 929.60H296.36M301.43 933.90V943.20M299.43 933.90H303.43M299.43 943.20H303.43M308.50 918.40V927.70M306.50 918.40H310.50M306.50 927.70H310.50M315.57 931.10V940.40M313.57 931.10H317.57M313.57 940.40H317.57M322.64 925.00V934.30M320.64 925.00H324.64M320.64 934.30H324.64M329.71 928.40V937.70M327.71 928.40H331.71M327.71 937.70H331.71M336.78 931.10V940.40M334.78 931.10H338.78M334.78 940.40H338.78M343.85 933.30V945.30M341.85 933.30H345.85M341.85 945.30H345.85M350.92 925.60V934.90M348.92 925.60H352.92M348.92 934.90H352.92M357.99 926.30V935.60M355.99 926.30H359.99M355.99 935.60H359.99M365.06 923.50V932.80M363.06 923.50H367.06M363.06 932.80H367.06M372.13 940.60V949.90M370.13 940.60H374.13M370.13 949.90H374.13M379.20 920.40V939.70M377.20 920.40H381.20M377.20 939.70H381.20M386.27 936.10V948.40M384.27 936.10H388.27M384.27 948.40H388.27M393.34 930.50V942.90M391.34 930.50H395.34M391.34 942.90H395.34M400.41 938.10V951.40M398.41 938.10H402.41M398.41 951.40H402.41M407.48 931.20V946.90M405.48 931.20H409.48M405.48 946.90H409.48M414.55 932.40V945.10M412.55 932.40H416.55M412.55 945.10H416.55M421.62 897.80V926.30M419.62 897.80H423.62M419.62 926.30H423.62M428.69 937.20V950.80M426.69 937.20H430.69M426.69 950.80H430.69M435.76 930.50V946.90M433.76 930.50H437.76M433.76 946.90H437.76M442.83 924.10V939.50M440.83 924.10H444.83M440.83 939.50H444.83M449.90 927.20V937.40M447.90 927.20H451.90M447.90 937.40H451.90M456.97 923.80V937.20M454.97 923.80H458.97M454.97 937.20H458.97M464.04 927.80V939.60M462.04 927.80H466.04M462.04 939.60H466.04M471.11 941.50V954.80M469.11 941.50H473.11M469.11 954.80H473.11M478.18 936.70V949.60M476.18 936.70H480.18M476.18 949.60H480.18M485.25 932.70V942.90M483.25 932.70H487.25M483.25 942.90H487.25M492.32 937.90V951.80M490.32 937.90H494.32M490.32 951.80H494.32M499.39 933.50V947.70M497.39 933.50H501.39M497.39 947.70H501.39M506.46 935.90V950.80M504.46 935.90H508.46M504.46 950.80H508.46M513.53 928.00V938.60M511.53 928.00H515.53M511.53 938.60H515.53M520.60 924.10V935.30M518.60 924.10H522.60M518.60 935.30H522.60M527.67 945.40V954.40M525.67 945.40H529.67M525.67 954.40H529.67M534.74 940.00V949.00M532.74 940.00H536.74M532.74 949.00H536.74M541.81 932.40V941.40M539.81 932.40H543.81M539.81 941.40H543.81M548.88 946.40V955.40M546.88 946.40H550.88M546.88 955.40H550.88M555.95 948.80V957.80M553.95 948.80H557.95M553.95 957.80H557.95M563.02 954.60V963.60M561.02 954.60H565.02M561.02 963.60H565.02M570.09 941.80V950.80M568.09 941.80H572.09M568.09 950.80H572.09M577.16 932.10V941.10M575.16 932.10H579.16M575.16 941.10H579.16M584.23 950.90V959.90M582.23 950.90H586.23M582.23 959.90H586.23M591.30 951.50V960.50M589.30 951.50H593.30M589.30 960.50H593.30M598.37 940.90V949.90M596.37 940.90H600.37M596.37 949.90H600.37M605.44 937.00V949.00M603.44 937.00H607.44M603.44 949.00H607.44M612.51 948.60V960.60M610.51 948.60H614.51M610.51 960.60H614.51M619.58 928.10V940.10M617.58 928.10H621.58M617.58 940.10H621.58M626.65 924.10V933.10M624.65 924.10H628.65M624.65 933.10H628.65M633.72 940.00V949.00M631.72 940.00H635.72M631.72 949.00H635.72M640.79 929.20V940.20M638.79 929.20H642.79M638.79 940.20H642.79M647.86 952.30V963.30M645.86 952.30H649.86M645.86 963.30H649.86M654.93 934.10V945.10M652.93 934.10H656.93M652.93 945.10H656.93M662.00 940.70V952.70M660.00 940.70H664.00M660.00 952.70H664.00M669.07 942.70V957.70M667.07 942.70H671.07M667.07 957.70H671.07M676.14 933.50V942.50M674.14 933.50H678.14M674.14 942.50H678.14M683.21 953.70V965.70M681.21 953.70H685.21M681.21 965.70H685.21M690.28 936.80V944.80M688.28 936.80H692.28M688.28 944.80H692.28M697.35 943.00V952.00M695.35 943.00H699.35M695.35 952.00H699.35M704.42 939.40V954.40M702.42 939.40H706.42M702.42 954.40H706.42M711.49 947.50V956.50M709.49 947.50H713.49M709.49 956.50H713.49M718.56 951.80V960.80M716.56 951.80H720.56M716.56 960.80H720.56" stroke="#4a4a4a" stroke-width="0.95" fill="none"/><g fill="#0000e6"><circle cx="82.26" cy="936.20" r="1.8"/><circle cx="89.33" cy="941.40" r="1.8"/><circle cx="96.40" cy="944.80" r="1.8"/><circle cx="103.47" cy="920.80" r="1.8"/><circle cx="110.54" cy="901.00" r="1.8"/><circle cx="117.61" cy="934.50" r="1.8"/><circle cx="124.68" cy="930.50" r="1.8"/><circle cx="131.75" cy="922.90" r="1.8"/><circle cx="138.82" cy="910.30" r="1.8"/><circle cx="145.89" cy="919.50" r="1.8"/><circle cx="152.96" cy="925.90" r="1.8"/><circle cx="160.03" cy="941.10" r="1.8"/><circle cx="167.10" cy="922.90" r="1.8"/><circle cx="174.17" cy="928.70" r="1.8"/><circle cx="181.24" cy="928.60" r="1.8"/><circle cx="188.31" cy="915.60" r="1.8"/><circle cx="195.38" cy="923.70" r="1.8"/><circle cx="202.45" cy="948.80" r="1.8"/><circle cx="209.52" cy="931.70" r="1.8"/><circle cx="216.59" cy="926.50" r="1.8"/><circle cx="223.66" cy="919.00" r="1.8"/><circle cx="230.73" cy="920.80" r="1.8"/><circle cx="237.80" cy="940.70" r="1.8"/><circle cx="244.87" cy="931.10" r="1.8"/><circle cx="251.94" cy="927.10" r="1.8"/><circle cx="259.01" cy="925.70" r="1.8"/><circle cx="266.08" cy="943.90" r="1.8"/><circle cx="273.15" cy="932.00" r="1.8"/><circle cx="280.22" cy="944.40" r="1.8"/><circle cx="287.29" cy="944.40" r="1.8"/><circle cx="294.36" cy="925.10" r="1.8"/><circle cx="301.43" cy="938.70" r="1.8"/><circle cx="308.50" cy="923.20" r="1.8"/><circle cx="315.57" cy="935.90" r="1.8"/><circle cx="322.64" cy="929.80" r="1.8"/><circle cx="329.71" cy="933.20" r="1.8"/><circle cx="336.78" cy="935.90" r="1.8"/><circle cx="343.85" cy="937.80" r="1.8"/><circle cx="350.92" cy="930.40" r="1.8"/><circle cx="357.99" cy="931.10" r="1.8"/><circle cx="365.06" cy="928.30" r="1.8"/><circle cx="372.13" cy="945.40" r="1.8"/><circle cx="379.20" cy="932.70" r="1.8"/><circle cx="386.27" cy="943.90" r="1.8"/><circle cx="393.34" cy="938.40" r="1.8"/><circle cx="400.41" cy="946.90" r="1.8"/><circle cx="407.48" cy="942.40" r="1.8"/><circle cx="414.55" cy="940.60" r="1.8"/><circle cx="421.62" cy="915.30" r="1.8"/><circle cx="428.69" cy="946.30" r="1.8"/><circle cx="435.76" cy="942.40" r="1.8"/><circle cx="442.83" cy="935.00" r="1.8"/><circle cx="449.90" cy="932.90" r="1.8"/><circle cx="456.97" cy="932.70" r="1.8"/><circle cx="464.04" cy="935.10" r="1.8"/><circle cx="471.11" cy="950.30" r="1.8"/><circle cx="478.18" cy="945.10" r="1.8"/><circle cx="485.25" cy="937.20" r="1.8"/><circle cx="492.32" cy="947.30" r="1.8"/><circle cx="499.39" cy="943.20" r="1.8"/><circle cx="506.46" cy="946.30" r="1.8"/><circle cx="513.53" cy="934.10" r="1.8"/><circle cx="520.60" cy="930.80" r="1.8"/><circle cx="527.67" cy="949.90" r="1.8"/><circle cx="534.74" cy="944.50" r="1.8"/><circle cx="541.81" cy="936.90" r="1.8"/><circle cx="548.88" cy="950.90" r="1.8"/><circle cx="555.95" cy="953.30" r="1.8"/><circle cx="563.02" cy="959.10" r="1.8"/><circle cx="570.09" cy="946.30" r="1.8"/><circle cx="577.16" cy="936.60" r="1.8"/><circle cx="584.23" cy="955.40" r="1.8"/><circle cx="591.30" cy="956.00" r="1.8"/><circle cx="598.37" cy="945.40" r="1.8"/><circle cx="605.44" cy="943.00" r="1.8"/><circle cx="612.51" cy="954.60" r="1.8"/><circle cx="619.58" cy="934.10" r="1.8"/><circle cx="626.65" cy="928.60" r="1.8"/><circle cx="633.72" cy="944.50" r="1.8"/><circle cx="640.79" cy="934.70" r="1.8"/><circle cx="647.86" cy="957.80" r="1.8"/><circle cx="654.93" cy="939.60" r="1.8"/><circle cx="662.00" cy="946.70" r="1.8"/><circle cx="669.07" cy="950.20" r="1.8"/><circle cx="676.14" cy="938.00" r="1.8"/><circle cx="683.21" cy="959.70" r="1.8"/><circle cx="690.28" cy="940.80" r="1.8"/><circle cx="697.35" cy="947.50" r="1.8"/><circle cx="704.42" cy="946.90" r="1.8"/><circle cx="711.49" cy="952.00" r="1.8"/><circle cx="718.56" cy="956.30" r="1.8"/></g><g fill="#ff0000"><circle cx="82.26" cy="935.90" r="1.8"/><circle cx="89.33" cy="941.10" r="1.8"/><circle cx="96.40" cy="944.50" r="1.8"/><circle cx="103.47" cy="920.50" r="1.8"/><circle cx="110.54" cy="900.70" r="1.8"/><circle cx="117.61" cy="938.40" r="1.8"/><circle cx="124.68" cy="930.20" r="1.8"/><circle cx="131.75" cy="922.60" r="1.8"/><circle cx="138.82" cy="910.00" r="1.8"/><circle cx="145.89" cy="919.20" r="1.8"/><circle cx="152.96" cy="925.60" r="1.8"/><circle cx="160.03" cy="940.80" r="1.8"/><circle cx="167.10" cy="922.60" r="1.8"/><circle cx="174.17" cy="928.40" r="1.8"/><circle cx="181.24" cy="928.30" r="1.8"/><circle cx="188.31" cy="915.30" r="1.8"/><circle cx="195.38" cy="923.40" r="1.8"/><circle cx="202.45" cy="948.50" r="1.8"/><circle cx="209.52" cy="931.40" r="1.8"/><circle cx="216.59" cy="926.20" r="1.8"/><circle cx="223.66" cy="918.70" r="1.8"/><circle cx="230.73" cy="920.50" r="1.8"/><circle cx="237.80" cy="940.40" r="1.8"/><circle cx="244.87" cy="932.90" r="1.8"/><circle cx="251.94" cy="926.80" r="1.8"/><circle cx="259.01" cy="925.40" r="1.8"/><circle cx="266.08" cy="943.60" r="1.8"/><circle cx="273.15" cy="931.70" r="1.8"/><circle cx="280.22" cy="944.10" r="1.8"/><circle cx="287.29" cy="944.10" r="1.8"/><circle cx="294.36" cy="924.80" r="1.8"/><circle cx="301.43" cy="938.40" r="1.8"/><circle cx="308.50" cy="922.90" r="1.8"/><circle cx="315.57" cy="935.60" r="1.8"/><circle cx="322.64" cy="929.50" r="1.8"/><circle cx="329.71" cy="932.90" r="1.8"/><circle cx="336.78" cy="935.60" r="1.8"/><circle cx="343.85" cy="940.80" r="1.8"/><circle cx="350.92" cy="930.10" r="1.8"/><circle cx="357.99" cy="930.80" r="1.8"/><circle cx="365.06" cy="928.00" r="1.8"/><circle cx="372.13" cy="945.10" r="1.8"/><circle cx="379.20" cy="927.40" r="1.8"/><circle cx="386.27" cy="940.60" r="1.8"/><circle cx="393.34" cy="935.00" r="1.8"/><circle cx="400.41" cy="942.60" r="1.8"/><circle cx="407.48" cy="935.70" r="1.8"/><circle cx="414.55" cy="936.90" r="1.8"/><circle cx="421.62" cy="908.80" r="1.8"/><circle cx="428.69" cy="941.70" r="1.8"/><circle cx="435.76" cy="935.00" r="1.8"/><circle cx="442.83" cy="928.60" r="1.8"/><circle cx="449.90" cy="931.70" r="1.8"/><circle cx="456.97" cy="928.30" r="1.8"/><circle cx="464.04" cy="932.30" r="1.8"/><circle cx="471.11" cy="946.00" r="1.8"/><circle cx="478.18" cy="941.20" r="1.8"/><circle cx="485.25" cy="938.40" r="1.8"/><circle cx="492.32" cy="942.40" r="1.8"/><circle cx="499.39" cy="938.00" r="1.8"/><circle cx="506.46" cy="940.40" r="1.8"/><circle cx="513.53" cy="932.50" r="1.8"/><circle cx="520.60" cy="928.60" r="1.8"/></g><line x1="131.3" y1="773" x2="131.3" y2="1038" stroke="#28d228" stroke-width="2.2"/><rect x="82.1" y="773" width="643.1999999999999" height="265" fill="none" stroke="#000" stroke-width="2"/><g transform="translate(743,0)"><rect x="6.6" y="8.3" width="8.5" height="44.3" fill="#27499c"/><rect x="15.1" y="8.3" width="8.6" height="44.3" fill="#b3121f"/><rect x="15.1" y="19.4" width="8.6" height="22.7" fill="#f6b800"/><path transform="translate(11.4,22.2) scale(2.3)" d="M0,-1 L0.29,-0.31 L0.95,-0.31 L0.42,0.12 L0.59,0.81 L0,0.4 L-0.59,0.81 L-0.42,0.12 L-0.95,-0.31 L-0.29,-0.31 Z" fill="#f5d010"/><path transform="translate(11.4,31.2) scale(2.3)" d="M0,-1 L0.29,-0.31 L0.95,-0.31 L0.42,0.12 L0.59,0.81 L0,0.4 L-0.59,0.81 L-0.42,0.12 L-0.95,-0.31 L-0.29,-0.31 Z" fill="#f5d010"/><path transform="translate(11.4,40.7) scale(2.3)" d="M0,-1 L0.29,-0.31 L0.95,-0.31 L0.42,0.12 L0.59,0.81 L0,0.4 L-0.59,0.81 L-0.42,0.12 L-0.95,-0.31 L-0.29,-0.31 Z" fill="#f5d010"/><rect x="23.7" y="8.3" width="168.2" height="44.3" fill="#ffda00"/><line x1="102.6" y1="8.3" x2="102.6" y2="52.6" stroke="#f0cc00" stroke-width="0.6"/><rect x="32.8" y="25" width="2.6" height="18" fill="#cfd3e6"/><rect x="32.599999999999994" y="23.6" width="3" height="2.6" fill="#8a3a20"/><rect x="31.699999999999996" y="42.4" width="4.8" height="2.4" fill="#5a72b0"/><rect x="32.3" y="41.2" width="3.6" height="1.4" fill="#b08a20"/><rect x="56.2" y="25" width="2.6" height="18" fill="#cfd3e6"/><rect x="56.0" y="23.6" width="3" height="2.6" fill="#8a3a20"/><rect x="55.1" y="42.4" width="4.8" height="2.4" fill="#5a72b0"/><rect x="55.7" y="41.2" width="3.6" height="1.4" fill="#b08a20"/><path d="M31.5 32.6 Q34 30.5 38.5 32 M31.8 36.8 Q34 34 36.5 36.5" stroke="#e0202a" stroke-width="1.2" fill="none"/><path d="M60.5 32.6 Q58 30.5 53.5 32 M60.2 36.8 Q58 34 55.5 36.5" stroke="#e0202a" stroke-width="1.2" fill="none"/><path d="M37.4 22.8 Q37 17.2 41 16.6 Q45.8 14.6 50.8 16.6 Q54.8 17.2 54.4 22.8 Z" fill="#c9a21a"/><rect x="37.6" y="19.4" width="16.6" height="3.2" rx="1.2" fill="#e01a2a"/><rect x="38.4" y="22.4" width="15" height="2.4" fill="#b8901a"/><rect x="45.5" y="14.4" width="0.9" height="2.6" fill="#b8901a"/><path d="M38.1 25.4 H53.8 V38 Q53.8 44.7 46 44.7 Q38.1 44.7 38.1 38 Z" fill="#c2521c"/><rect x="38.1" y="25.4" width="7.9" height="9.4" fill="#dc1a2c"/><rect x="46" y="25.4" width="7.8" height="9.4" fill="#dcd6e8"/><path d="M47.5 27.5 L51.5 28.5 L50 32 L48 31 Z" fill="#e070b0"/><path d="M46 34.8 H53.8 V38 Q53.8 44.7 46 44.7 Z" fill="#e0302a"/><rect x="40.6" y="27.8" width="2.8" height="4.4" fill="#d8a020"/><ellipse cx="46" cy="34.5" rx="2" ry="2.4" fill="#3a5aa8"/><g font-family='"Liberation Sans", sans-serif' font-size="5.5" fill="#1e1a00" stroke="#1e1a00" stroke-width="0.12"><text x="66.7" y="29.3" textLength="28.6" lengthAdjust="spacingAndGlyphs">GOBIERNO</text><text x="66.7" y="35.1" textLength="28.4" lengthAdjust="spacingAndGlyphs">DE ESPAÑA</text><text x="111.2" y="29.3" textLength="28.2" lengthAdjust="spacingAndGlyphs">MINISTERIO</text><text x="111.2" y="35.1" textLength="72.4" lengthAdjust="spacingAndGlyphs">DE TRANSPORTES, MOVILIDAD</text><text x="111.2" y="40.8" textLength="48" lengthAdjust="spacingAndGlyphs">Y AGENDA URBANA</text></g><rect x="191.9" y="8.4" width="74" height="43.8" fill="#ffffff" stroke="#ececec" stroke-width="0.8"/><rect x="191.9" y="8.4" width="74" height="5.4" fill="#e6e6e6"/><g font-family='"Liberation Sans", sans-serif' font-size="3.9" fill="#333"><text x="195.8" y="29.2" textLength="21" lengthAdjust="spacingAndGlyphs">INSTITUTO</text><text x="195.8" y="33.8" textLength="26" lengthAdjust="spacingAndGlyphs">GEOGRÁFICO</text><text x="195.8" y="38.9" textLength="21" lengthAdjust="spacingAndGlyphs">NACIONAL</text></g><path d="M230.2 28 L233 26.2 L236 25.2 L238.6 24.6 L240 26 L243.4 24.9 L246.6 25.4 L242.6 28 L246 27.4 L249 27 L245.2 30 L250.5 31 L246 34 L243 37 L239.5 40 L235.5 42 L232.2 41.2 L230.2 38.2 L231 35 L229.6 32 Z" fill="#e8177d"/><path d="M230 29 L231 33 L230.2 38 L232 41" stroke="#5566bb" stroke-width="0.9" fill="none" opacity="0.8"/><text x="247.4" y="41.4" font-size="6" font-style="italic" fill="#3b4fa8" font-family='"Liberation Sans", sans-serif' textLength="11" lengthAdjust="spacingAndGlyphs">ign</text></g><g transform="translate(743,0)" font-family='"Liberation Sans", sans-serif' font-size="16" fill="#111"><text x="82.6" y="80.1">Estación:</text><text x="268.6" y="80.1" text-anchor="end">LP03</text><text x="82.6" y="101.1">Proyecto:</text><text x="268.6" y="101.1" text-anchor="end">VOL</text><text x="82.6" y="122.2">Marco de referencia:</text><text x="268.6" y="122.2" text-anchor="end">ITRF</text><text x="82.6" y="143.3">Actualizado:</text><text x="268.6" y="143.3" text-anchor="end">12−12−2021</text><rect x="511.2" y="67.3" width="3.6" height="13" fill="#7b3a9a"/><text x="519.4" y="80.3">Cambio de antena y receptor</text><rect x="511.2" y="88.3" width="3.6" height="13" fill="#ff4a14"/><text x="519.4" y="101.3">Cambio de antena</text><rect x="511.2" y="109.4" width="3.6" height="13" fill="#3b8ef0"/><text x="519.4" y="122.4">Cambio de receptor</text><rect x="511.2" y="130.4" width="3.6" height="13" fill="#19c519"/><text x="519.4" y="143.4">Otros cambios</text></g><line x1="825.1" y1="200.12" x2="1468.3" y2="200.12" stroke="#8c8c8c" stroke-width="1.1"/><line x1="825.1" y1="200.12" x2="829.1" y2="200.12" stroke="#111" stroke-width="1.2"/><line x1="1464.3" y1="200.12" x2="1468.3" y2="200.12" stroke="#111" stroke-width="1.2"/><line x1="825.1" y1="233.25" x2="1468.3" y2="233.25" stroke="#8c8c8c" stroke-width="1.1"/><line x1="825.1" y1="233.25" x2="829.1" y2="233.25" stroke="#111" stroke-width="1.2"/><line x1="1464.3" y1="233.25" x2="1468.3" y2="233.25" stroke="#111" stroke-width="1.2"/><line x1="825.1" y1="266.38" x2="1468.3" y2="266.38" stroke="#8c8c8c" stroke-width="1.1"/><line x1="825.1" y1="266.38" x2="829.1" y2="266.38" stroke="#111" stroke-width="1.2"/><line x1="1464.3" y1="266.38" x2="1468.3" y2="266.38" stroke="#111" stroke-width="1.2"/><line x1="825.1" y1="299.50" x2="1468.3" y2="299.50" stroke="#8c8c8c" stroke-width="1.1"/><line x1="825.1" y1="299.50" x2="829.1" y2="299.50" stroke="#111" stroke-width="1.2"/><line x1="1464.3" y1="299.50" x2="1468.3" y2="299.50" stroke="#111" stroke-width="1.2"/><line x1="825.1" y1="332.62" x2="1468.3" y2="332.62" stroke="#8c8c8c" stroke-width="1.1"/><line x1="825.1" y1="332.62" x2="829.1" y2="332.62" stroke="#111" stroke-width="1.2"/><line x1="1464.3" y1="332.62" x2="1468.3" y2="332.62" stroke="#111" stroke-width="1.2"/><line x1="825.1" y1="365.75" x2="1468.3" y2="365.75" stroke="#8c8c8c" stroke-width="1.1"/><line x1="825.1" y1="365.75" x2="829.1" y2="365.75" stroke="#111" stroke-width="1.2"/><line x1="1464.3" y1="365.75" x2="1468.3" y2="365.75" stroke="#111" stroke-width="1.2"/><line x1="825.1" y1="398.88" x2="1468.3" y2="398.88" stroke="#8c8c8c" stroke-width="1.1"/><line x1="825.1" y1="398.88" x2="829.1" y2="398.88" stroke="#111" stroke-width="1.2"/><line x1="1464.3" y1="398.88" x2="1468.3" y2="398.88" stroke="#111" stroke-width="1.2"/><text x="821.0" y="171.90" text-anchor="end" font-size="10.8" fill="#2a2a2a" stroke="#2a2a2a" stroke-width="0.18">160</text><text x="821.0" y="205.03" text-anchor="end" font-size="10.8" fill="#2a2a2a" stroke="#2a2a2a" stroke-width="0.18">120</text><text x="821.0" y="238.15" text-anchor="end" font-size="10.8" fill="#2a2a2a" stroke="#2a2a2a" stroke-width="0.18">80</text><text x="821.0" y="271.27" text-anchor="end" font-size="10.8" fill="#2a2a2a" stroke="#2a2a2a" stroke-width="0.18">40</text><text x="821.0" y="304.40" text-anchor="end" font-size="10.8" fill="#2a2a2a" stroke="#2a2a2a" stroke-width="0.18">0</text><text x="821.0" y="337.52" text-anchor="end" font-size="10.8" fill="#2a2a2a" stroke="#2a2a2a" stroke-width="0.18">−40</text><text x="821.0" y="370.65" text-anchor="end" font-size="10.8" fill="#2a2a2a" stroke="#2a2a2a" stroke-width="0.18">−80</text><text x="821.0" y="403.77" text-anchor="end" font-size="10.8" fill="#2a2a2a" stroke="#2a2a2a" stroke-width="0.18">−120</text><text x="821.0" y="436.90" text-anchor="end" font-size="10.8" fill="#2a2a2a" stroke="#2a2a2a" stroke-width="0.18">−160</text><line x1="832.17" y1="167" x2="832.17" y2="169.4" stroke="#111" stroke-width="1.25"/><line x1="832.17" y1="432" x2="832.17" y2="429.6" stroke="#111" stroke-width="1.25"/><line x1="839.24" y1="167" x2="839.24" y2="169.4" stroke="#111" stroke-width="1.25"/><line x1="839.24" y1="432" x2="839.24" y2="429.6" stroke="#111" stroke-width="1.25"/><line x1="846.32" y1="167" x2="846.32" y2="169.4" stroke="#111" stroke-width="1.25"/><line x1="846.32" y1="432" x2="846.32" y2="429.6" stroke="#111" stroke-width="1.25"/><line x1="853.39" y1="167" x2="853.39" y2="169.4" stroke="#111" stroke-width="1.25"/><line x1="853.39" y1="432" x2="853.39" y2="429.6" stroke="#111" stroke-width="1.25"/><line x1="860.46" y1="167" x2="860.46" y2="169.4" stroke="#111" stroke-width="1.25"/><line x1="860.46" y1="432" x2="860.46" y2="429.6" stroke="#111" stroke-width="1.25"/><line x1="867.53" y1="167" x2="867.53" y2="169.4" stroke="#111" stroke-width="1.25"/><line x1="867.53" y1="432" x2="867.53" y2="429.6" stroke="#111" stroke-width="1.25"/><line x1="874.60" y1="167" x2="874.60" y2="169.4" stroke="#111" stroke-width="1.25"/><line x1="874.60" y1="432" x2="874.60" y2="429.6" stroke="#111" stroke-width="1.25"/><line x1="881.68" y1="167" x2="881.68" y2="169.4" stroke="#111" stroke-width="1.25"/><line x1="881.68" y1="432" x2="881.68" y2="429.6" stroke="#111" stroke-width="1.25"/><line x1="888.75" y1="167" x2="888.75" y2="169.4" stroke="#111" stroke-width="1.25"/><line x1="888.75" y1="432" x2="888.75" y2="429.6" stroke="#111" stroke-width="1.25"/><line x1="895.82" y1="167" x2="895.82" y2="169.4" stroke="#111" stroke-width="1.25"/><line x1="895.82" y1="432" x2="895.82" y2="429.6" stroke="#111" stroke-width="1.25"/><line x1="902.89" y1="167" x2="902.89" y2="169.4" stroke="#111" stroke-width="1.25"/><line x1="902.89" y1="432" x2="902.89" y2="429.6" stroke="#111" stroke-width="1.25"/><line x1="909.97" y1="167" x2="909.97" y2="169.4" stroke="#111" stroke-width="1.25"/><line x1="909.97" y1="432" x2="909.97" y2="429.6" stroke="#111" stroke-width="1.25"/><line x1="917.04" y1="167" x2="917.04" y2="169.4" stroke="#111" stroke-width="1.25"/><line x1="917.04" y1="432" x2="917.04" y2="429.6" stroke="#111" stroke-width="1.25"/><line x1="924.11" y1="167" x2="924.11" y2="169.4" stroke="#111" stroke-width="1.25"/><line x1="924.11" y1="432" x2="924.11" y2="429.6" stroke="#111" stroke-width="1.25"/><line x1="931.18" y1="167" x2="931.18" y2="169.4" stroke="#111" stroke-width="1.25"/><line x1="931.18" y1="432" x2="931.18" y2="429.6" stroke="#111" stroke-width="1.25"/><line x1="938.25" y1="167" x2="938.25" y2="169.4" stroke="#111" stroke-width="1.25"/><line x1="938.25" y1="432" x2="938.25" y2="429.6" stroke="#111" stroke-width="1.25"/><line x1="945.33" y1="167" x2="945.33" y2="169.4" stroke="#111" stroke-width="1.25"/><line x1="945.33" y1="432" x2="945.33" y2="429.6" stroke="#111" stroke-width="1.25"/><line x1="952.40" y1="167" x2="952.40" y2="169.4" stroke="#111" stroke-width="1.25"/><line x1="952.40" y1="432" x2="952.40" y2="429.6" stroke="#111" stroke-width="1.25"/><line x1="959.47" y1="167" x2="959.47" y2="169.4" stroke="#111" stroke-width="1.25"/><line x1="959.47" y1="432" x2="959.47" y2="429.6" stroke="#111" stroke-width="1.25"/><line x1="966.54" y1="167" x2="966.54" y2="169.4" stroke="#111" stroke-width="1.25"/><line x1="966.54" y1="432" x2="966.54" y2="429.6" stroke="#111" stroke-width="1.25"/><line x1="973.61" y1="167" x2="973.61" y2="169.4" stroke="#111" stroke-width="1.25"/><line x1="973.61" y1="432" x2="973.61" y2="429.6" stroke="#111" stroke-width="1.25"/><line x1="980.69" y1="167" x2="980.69" y2="169.4" stroke="#111" stroke-width="1.25"/><line x1="980.69" y1="432" x2="980.69" y2="429.6" stroke="#111" stroke-width="1.25"/><line x1="987.76" y1="167" x2="987.76" y2="169.4" stroke="#111" stroke-width="1.25"/><line x1="987.76" y1="432" x2="987.76" y2="429.6" stroke="#111" stroke-width="1.25"/><line x1="994.83" y1="167" x2="994.83" y2="169.4" stroke="#111" stroke-width="1.25"/><line x1="994.83" y1="432" x2="994.83" y2="429.6" stroke="#111" stroke-width="1.25"/><line x1="1001.90" y1="167" x2="1001.90" y2="169.4" stroke="#111" stroke-width="1.25"/><line x1="1001.90" y1="432" x2="1001.90" y2="429.6" stroke="#111" stroke-width="1.25"/><line x1="1008.98" y1="167" x2="1008.98" y2="169.4" stroke="#111" stroke-width="1.25"/><line x1="1008.98" y1="432" x2="1008.98" y2="429.6" stroke="#111" stroke-width="1.25"/><line x1="1016.05" y1="167" x2="1016.05" y2="169.4" stroke="#111" stroke-width="1.25"/><line x1="1016.05" y1="432" x2="1016.05" y2="429.6" stroke="#111" stroke-width="1.25"/><line x1="1023.12" y1="167" x2="1023.12" y2="169.4" stroke="#111" stroke-width="1.25"/><line x1="1023.12" y1="432" x2="1023.12" y2="429.6" stroke="#111" stroke-width="1.25"/><line x1="1030.19" y1="167" x2="1030.19" y2="169.4" stroke="#111" stroke-width="1.25"/><line x1="1030.19" y1="432" x2="1030.19" y2="429.6" stroke="#111" stroke-width="1.25"/><line x1="1037.26" y1="167" x2="1037.26" y2="169.4" stroke="#111" stroke-width="1.25"/><line x1="1037.26" y1="432" x2="1037.26" y2="429.6" stroke="#111" stroke-width="1.25"/><line x1="1044.34" y1="167" x2="1044.34" y2="169.4" stroke="#111" stroke-width="1.25"/><line x1="1044.34" y1="432" x2="1044.34" y2="429.6" stroke="#111" stroke-width="1.25"/><line x1="1051.41" y1="167" x2="1051.41" y2="169.4" stroke="#111" stroke-width="1.25"/><line x1="1051.41" y1="432" x2="1051.41" y2="429.6" stroke="#111" stroke-width="1.25"/><line x1="1058.48" y1="167" x2="1058.48" y2="169.4" stroke="#111" stroke-width="1.25"/><line x1="1058.48" y1="432" x2="1058.48" y2="429.6" stroke="#111" stroke-width="1.25"/><line x1="1065.55" y1="167" x2="1065.55" y2="169.4" stroke="#111" stroke-width="1.25"/><line x1="1065.55" y1="432" x2="1065.55" y2="429.6" stroke="#111" stroke-width="1.25"/><line x1="1072.62" y1="167" x2="1072.62" y2="169.4" stroke="#111" stroke-width="1.25"/><line x1="1072.62" y1="432" x2="1072.62" y2="429.6" stroke="#111" stroke-width="1.25"/><line x1="1079.70" y1="167" x2="1079.70" y2="169.4" stroke="#111" stroke-width="1.25"/><line x1="1079.70" y1="432" x2="1079.70" y2="429.6" stroke="#111" stroke-width="1.25"/><line x1="1086.77" y1="167" x2="1086.77" y2="169.4" stroke="#111" stroke-width="1.25"/><line x1="1086.77" y1="432" x2="1086.77" y2="429.6" stroke="#111" stroke-width="1.25"/><line x1="1093.84" y1="167" x2="1093.84" y2="169.4" stroke="#111" stroke-width="1.25"/><line x1="1093.84" y1="432" x2="1093.84" y2="429.6" stroke="#111" stroke-width="1.25"/><line x1="1100.91" y1="167" x2="1100.91" y2="169.4" stroke="#111" stroke-width="1.25"/><line x1="1100.91" y1="432" x2="1100.91" y2="429.6" stroke="#111" stroke-width="1.25"/><line x1="1107.99" y1="167" x2="1107.99" y2="169.4" stroke="#111" stroke-width="1.25"/><line x1="1107.99" y1="432" x2="1107.99" y2="429.6" stroke="#111" stroke-width="1.25"/><line x1="1115.06" y1="167" x2="1115.06" y2="169.4" stroke="#111" stroke-width="1.25"/><line x1="1115.06" y1="432" x2="1115.06" y2="429.6" stroke="#111" stroke-width="1.25"/><line x1="1122.13" y1="167" x2="1122.13" y2="169.4" stroke="#111" stroke-width="1.25"/><line x1="1122.13" y1="432" x2="1122.13" y2="429.6" stroke="#111" stroke-width="1.25"/><line x1="1129.20" y1="167" x2="1129.20" y2="169.4" stroke="#111" stroke-width="1.25"/><line x1="1129.20" y1="432" x2="1129.20" y2="429.6" stroke="#111" stroke-width="1.25"/><line x1="1136.27" y1="167" x2="1136.27" y2="169.4" stroke="#111" stroke-width="1.25"/><line x1="1136.27" y1="432" x2="1136.27" y2="429.6" stroke="#111" stroke-width="1.25"/><line x1="1143.35" y1="167" x2="1143.35" y2="169.4" stroke="#111" stroke-width="1.25"/><line x1="1143.35" y1="432" x2="1143.35" y2="429.6" stroke="#111" stroke-width="1.25"/><line x1="1150.42" y1="167" x2="1150.42" y2="169.4" stroke="#111" stroke-width="1.25"/><line x1="1150.42" y1="432" x2="1150.42" y2="429.6" stroke="#111" stroke-width="1.25"/><line x1="1157.49" y1="167" x2="1157.49" y2="169.4" stroke="#111" stroke-width="1.25"/><line x1="1157.49" y1="432" x2="1157.49" y2="429.6" stroke="#111" stroke-width="1.25"/><line x1="1164.56" y1="167" x2="1164.56" y2="169.4" stroke="#111" stroke-width="1.25"/><line x1="1164.56" y1="432" x2="1164.56" y2="429.6" stroke="#111" stroke-width="1.25"/><line x1="1171.63" y1="167" x2="1171.63" y2="169.4" stroke="#111" stroke-width="1.25"/><line x1="1171.63" y1="432" x2="1171.63" y2="429.6" stroke="#111" stroke-width="1.25"/><line x1="1178.71" y1="167" x2="1178.71" y2="169.4" stroke="#111" stroke-width="1.25"/><line x1="1178.71" y1="432" x2="1178.71" y2="429.6" stroke="#111" stroke-width="1.25"/><line x1="1185.78" y1="167" x2="1185.78" y2="169.4" stroke="#111" stroke-width="1.25"/><line x1="1185.78" y1="432" x2="1185.78" y2="429.6" stroke="#111" stroke-width="1.25"/><line x1="1192.85" y1="167" x2="1192.85" y2="169.4" stroke="#111" stroke-width="1.25"/><line x1="1192.85" y1="432" x2="1192.85" y2="429.6" stroke="#111" stroke-width="1.25"/><line x1="1199.92" y1="167" x2="1199.92" y2="169.4" stroke="#111" stroke-width="1.25"/><line x1="1199.92" y1="432" x2="1199.92" y2="429.6" stroke="#111" stroke-width="1.25"/><line x1="1207.00" y1="167" x2="1207.00" y2="169.4" stroke="#111" stroke-width="1.25"/><line x1="1207.00" y1="432" x2="1207.00" y2="429.6" stroke="#111" stroke-width="1.25"/><line x1="1214.07" y1="167" x2="1214.07" y2="169.4" stroke="#111" stroke-width="1.25"/><line x1="1214.07" y1="432" x2="1214.07" y2="429.6" stroke="#111" stroke-width="1.25"/><line x1="1221.14" y1="167" x2="1221.14" y2="169.4" stroke="#111" stroke-width="1.25"/><line x1="1221.14" y1="432" x2="1221.14" y2="429.6" stroke="#111" stroke-width="1.25"/><line x1="1228.21" y1="167" x2="1228.21" y2="169.4" stroke="#111" stroke-width="1.25"/><line x1="1228.21" y1="432" x2="1228.21" y2="429.6" stroke="#111" stroke-width="1.25"/><line x1="1235.28" y1="167" x2="1235.28" y2="169.4" stroke="#111" stroke-width="1.25"/><line x1="1235.28" y1="432" x2="1235.28" y2="429.6" stroke="#111" stroke-width="1.25"/><line x1="1242.36" y1="167" x2="1242.36" y2="169.4" stroke="#111" stroke-width="1.25"/><line x1="1242.36" y1="432" x2="1242.36" y2="429.6" stroke="#111" stroke-width="1.25"/><line x1="1249.43" y1="167" x2="1249.43" y2="169.4" stroke="#111" stroke-width="1.25"/><line x1="1249.43" y1="432" x2="1249.43" y2="429.6" stroke="#111" stroke-width="1.25"/><line x1="1256.50" y1="167" x2="1256.50" y2="169.4" stroke="#111" stroke-width="1.25"/><line x1="1256.50" y1="432" x2="1256.50" y2="429.6" stroke="#111" stroke-width="1.25"/><line x1="1263.57" y1="167" x2="1263.57" y2="169.4" stroke="#111" stroke-width="1.25"/><line x1="1263.57" y1="432" x2="1263.57" y2="429.6" stroke="#111" stroke-width="1.25"/><line x1="1270.64" y1="167" x2="1270.64" y2="169.4" stroke="#111" stroke-width="1.25"/><line x1="1270.64" y1="432" x2="1270.64" y2="429.6" stroke="#111" stroke-width="1.25"/><line x1="1277.72" y1="167" x2="1277.72" y2="169.4" stroke="#111" stroke-width="1.25"/><line x1="1277.72" y1="432" x2="1277.72" y2="429.6" stroke="#111" stroke-width="1.25"/><line x1="1284.79" y1="167" x2="1284.79" y2="169.4" stroke="#111" stroke-width="1.25"/><line x1="1284.79" y1="432" x2="1284.79" y2="429.6" stroke="#111" stroke-width="1.25"/><line x1="1291.86" y1="167" x2="1291.86" y2="169.4" stroke="#111" stroke-width="1.25"/><line x1="1291.86" y1="432" x2="1291.86" y2="429.6" stroke="#111" stroke-width="1.25"/><line x1="1298.93" y1="167" x2="1298.93" y2="169.4" stroke="#111" stroke-width="1.25"/><line x1="1298.93" y1="432" x2="1298.93" y2="429.6" stroke="#111" stroke-width="1.25"/><line x1="1306.00" y1="167" x2="1306.00" y2="169.4" stroke="#111" stroke-width="1.25"/><line x1="1306.00" y1="432" x2="1306.00" y2="429.6" stroke="#111" stroke-width="1.25"/><line x1="1313.08" y1="167" x2="1313.08" y2="169.4" stroke="#111" stroke-width="1.25"/><line x1="1313.08" y1="432" x2="1313.08" y2="429.6" stroke="#111" stroke-width="1.25"/><line x1="1320.15" y1="167" x2="1320.15" y2="169.4" stroke="#111" stroke-width="1.25"/><line x1="1320.15" y1="432" x2="1320.15" y2="429.6" stroke="#111" stroke-width="1.25"/><line x1="1327.22" y1="167" x2="1327.22" y2="169.4" stroke="#111" stroke-width="1.25"/><line x1="1327.22" y1="432" x2="1327.22" y2="429.6" stroke="#111" stroke-width="1.25"/><line x1="1334.29" y1="167" x2="1334.29" y2="169.4" stroke="#111" stroke-width="1.25"/><line x1="1334.29" y1="432" x2="1334.29" y2="429.6" stroke="#111" stroke-width="1.25"/><line x1="1341.37" y1="167" x2="1341.37" y2="169.4" stroke="#111" stroke-width="1.25"/><line x1="1341.37" y1="432" x2="1341.37" y2="429.6" stroke="#111" stroke-width="1.25"/><line x1="1348.44" y1="167" x2="1348.44" y2="169.4" stroke="#111" stroke-width="1.25"/><line x1="1348.44" y1="432" x2="1348.44" y2="429.6" stroke="#111" stroke-width="1.25"/><line x1="1355.51" y1="167" x2="1355.51" y2="169.4" stroke="#111" stroke-width="1.25"/><line x1="1355.51" y1="432" x2="1355.51" y2="429.6" stroke="#111" stroke-width="1.25"/><line x1="1362.58" y1="167" x2="1362.58" y2="169.4" stroke="#111" stroke-width="1.25"/><line x1="1362.58" y1="432" x2="1362.58" y2="429.6" stroke="#111" stroke-width="1.25"/><line x1="1369.65" y1="167" x2="1369.65" y2="169.4" stroke="#111" stroke-width="1.25"/><line x1="1369.65" y1="432" x2="1369.65" y2="429.6" stroke="#111" stroke-width="1.25"/><line x1="1376.73" y1="167" x2="1376.73" y2="169.4" stroke="#111" stroke-width="1.25"/><line x1="1376.73" y1="432" x2="1376.73" y2="429.6" stroke="#111" stroke-width="1.25"/><line x1="1383.80" y1="167" x2="1383.80" y2="169.4" stroke="#111" stroke-width="1.25"/><line x1="1383.80" y1="432" x2="1383.80" y2="429.6" stroke="#111" stroke-width="1.25"/><line x1="1390.87" y1="167" x2="1390.87" y2="169.4" stroke="#111" stroke-width="1.25"/><line x1="1390.87" y1="432" x2="1390.87" y2="429.6" stroke="#111" stroke-width="1.25"/><line x1="1397.94" y1="167" x2="1397.94" y2="169.4" stroke="#111" stroke-width="1.25"/><line x1="1397.94" y1="432" x2="1397.94" y2="429.6" stroke="#111" stroke-width="1.25"/><line x1="1405.01" y1="167" x2="1405.01" y2="169.4" stroke="#111" stroke-width="1.25"/><line x1="1405.01" y1="432" x2="1405.01" y2="429.6" stroke="#111" stroke-width="1.25"/><line x1="1412.09" y1="167" x2="1412.09" y2="169.4" stroke="#111" stroke-width="1.25"/><line x1="1412.09" y1="432" x2="1412.09" y2="429.6" stroke="#111" stroke-width="1.25"/><line x1="1419.16" y1="167" x2="1419.16" y2="169.4" stroke="#111" stroke-width="1.25"/><line x1="1419.16" y1="432" x2="1419.16" y2="429.6" stroke="#111" stroke-width="1.25"/><line x1="1426.23" y1="167" x2="1426.23" y2="169.4" stroke="#111" stroke-width="1.25"/><line x1="1426.23" y1="432" x2="1426.23" y2="429.6" stroke="#111" stroke-width="1.25"/><line x1="1433.30" y1="167" x2="1433.30" y2="169.4" stroke="#111" stroke-width="1.25"/><line x1="1433.30" y1="432" x2="1433.30" y2="429.6" stroke="#111" stroke-width="1.25"/><line x1="1440.38" y1="167" x2="1440.38" y2="169.4" stroke="#111" stroke-width="1.25"/><line x1="1440.38" y1="432" x2="1440.38" y2="429.6" stroke="#111" stroke-width="1.25"/><line x1="1447.45" y1="167" x2="1447.45" y2="169.4" stroke="#111" stroke-width="1.25"/><line x1="1447.45" y1="432" x2="1447.45" y2="429.6" stroke="#111" stroke-width="1.25"/><line x1="1454.52" y1="167" x2="1454.52" y2="169.4" stroke="#111" stroke-width="1.25"/><line x1="1454.52" y1="432" x2="1454.52" y2="429.6" stroke="#111" stroke-width="1.25"/><line x1="1461.59" y1="167" x2="1461.59" y2="169.4" stroke="#111" stroke-width="1.25"/><line x1="1461.59" y1="432" x2="1461.59" y2="429.6" stroke="#111" stroke-width="1.25"/><line x1="959.3" y1="167" x2="959.3" y2="179.5" stroke="#555" stroke-width="1.3"/><line x1="959.3" y1="432" x2="959.3" y2="419.5" stroke="#555" stroke-width="1.3"/><line x1="1178.4" y1="167" x2="1178.4" y2="179.5" stroke="#555" stroke-width="1.3"/><line x1="1178.4" y1="432" x2="1178.4" y2="419.5" stroke="#555" stroke-width="1.3"/><line x1="1390.7" y1="167" x2="1390.7" y2="179.5" stroke="#555" stroke-width="1.3"/><line x1="1390.7" y1="432" x2="1390.7" y2="419.5" stroke="#555" stroke-width="1.3"/><text x="891.9" y="450.4" text-anchor="middle" font-size="12" fill="#222">Septiembre 21</text><text x="1068.0" y="450.4" text-anchor="middle" font-size="12" fill="#222">Octubre 21</text><text x="1284.3" y="450.4" text-anchor="middle" font-size="12" fill="#222">Noviembre 21</text><text x="1429.2" y="450.4" text-anchor="middle" font-size="12" fill="#222">Diciembre 21</text><text transform="translate(786.2,299.5) rotate(-90)" text-anchor="middle" font-size="18" fill="#111">n [mm]</text><circle cx="848.8" cy="186.8" r="3" fill="#ff0000" stroke="#8a0000" stroke-width="0.4"/><text x="856.4" y="190.6" font-size="10.6" fill="#333">Coordenadas finales</text><circle cx="848.8" cy="199.5" r="3" fill="#0000ee" stroke="#00006a" stroke-width="0.4"/><text x="856.4" y="202.7" font-size="10.6" fill="#333">Coordenadas rapidas</text><path d="M825.26 202.50V206.80M823.26 202.50H827.26M823.26 206.80H827.26M832.33 201.40V205.70M830.33 201.40H834.33M830.33 205.70H834.33M839.40 199.70V204.00M837.40 199.70H841.40M837.40 204.00H841.40M846.47 198.80V203.10M844.47 198.80H848.47M844.47 203.10H848.47M853.54 201.80V206.10M851.54 201.80H855.54M851.54 206.10H855.54M860.61 199.50V203.80M858.61 199.50H862.61M858.61 203.80H862.61M867.68 201.40V205.70M865.68 201.40H869.68M865.68 205.70H869.68M874.75 269.50V273.80M872.75 269.50H876.75M872.75 273.80H876.75M881.82 299.90V304.20M879.82 299.90H883.82M879.82 304.20H883.82M888.89 304.40V308.70M886.89 304.40H890.89M886.89 308.70H890.89M895.96 310.20V314.50M893.96 310.20H897.96M893.96 314.50H897.96M903.03 309.10V313.40M901.03 309.10H905.03M901.03 313.40H905.03M910.10 311.20V315.50M908.10 311.20H912.10M908.10 315.50H912.10M917.17 305.40V309.70M915.17 305.40H919.17M915.17 309.70H919.17M924.24 304.40V308.70M922.24 304.40H926.24M922.24 308.70H926.24M931.31 303.30V307.60M929.31 303.30H933.31M929.31 307.60H933.31M938.38 309.50V313.80M936.38 309.50H940.38M936.38 313.80H940.38M945.45 309.50V313.80M943.45 309.50H947.45M943.45 313.80H947.45M952.52 307.10V311.40M950.52 307.10H954.52M950.52 311.40H954.52M959.59 310.20V314.50M957.59 310.20H961.59M957.59 314.50H961.59M966.66 306.10V310.40M964.66 306.10H968.66M964.66 310.40H968.66M973.73 311.30V315.60M971.73 311.30H975.73M971.73 315.60H975.73M980.80 310.50V314.80M978.80 310.50H982.80M978.80 314.80H982.80M987.87 305.40V309.70M985.87 305.40H989.87M985.87 309.70H989.87M994.94 307.30V311.60M992.94 307.30H996.94M992.94 311.60H996.94M1002.01 308.20V312.50M1000.01 308.20H1004.01M1000.01 312.50H1004.01M1009.08 306.50V310.80M1007.08 306.50H1011.08M1007.08 310.80H1011.08M1016.15 308.50V312.80M1014.15 308.50H1018.15M1014.15 312.80H1018.15M1023.22 309.40V313.70M1021.22 309.40H1025.22M1021.22 313.70H1025.22M1030.29 306.70V311.00M1028.29 306.70H1032.29M1028.29 311.00H1032.29M1037.36 310.00V314.30M1035.36 310.00H1039.36M1035.36 314.30H1039.36M1044.43 329.60V333.90M1042.43 329.60H1046.43M1042.43 333.90H1046.43M1051.50 316.20V320.50M1049.50 316.20H1053.50M1049.50 320.50H1053.50M1058.57 307.70V312.00M1056.57 307.70H1060.57M1056.57 312.00H1060.57M1065.64 303.70V308.00M1063.64 303.70H1067.64M1063.64 308.00H1067.64M1072.71 303.90V308.20M1070.71 303.90H1074.71M1070.71 308.20H1074.71M1079.78 304.50V308.80M1077.78 304.50H1081.78M1077.78 308.80H1081.78M1086.85 302.70V307.00M1084.85 302.70H1088.85M1084.85 307.00H1088.85M1093.92 302.80V307.10M1091.92 302.80H1095.92M1091.92 307.10H1095.92M1100.99 302.50V306.80M1098.99 302.50H1102.99M1098.99 306.80H1102.99M1108.06 304.50V308.80M1106.06 304.50H1110.06M1106.06 308.80H1110.06M1115.13 301.90V306.20M1113.13 301.90H1117.13M1113.13 306.20H1117.13M1122.20 304.50V308.80M1120.20 304.50H1124.20M1120.20 308.80H1124.20M1129.27 324.10V328.40M1127.27 324.10H1131.27M1127.27 328.40H1131.27M1136.34 312.20V316.50M1134.34 312.20H1138.34M1134.34 316.50H1138.34M1143.41 309.50V313.80M1141.41 309.50H1145.41M1141.41 313.80H1145.41M1150.48 310.70V315.00M1148.48 310.70H1152.48M1148.48 315.00H1152.48M1157.55 311.30V315.60M1155.55 311.30H1159.55M1155.55 315.60H1159.55M1164.62 317.70V322.00M1162.62 317.70H1166.62M1162.62 322.00H1166.62M1171.69 314.50V318.80M1169.69 314.50H1173.69M1169.69 318.80H1173.69M1178.76 316.10V320.40M1176.76 316.10H1180.76M1176.76 320.40H1180.76M1185.83 310.90V315.20M1183.83 310.90H1187.83M1183.83 315.20H1187.83M1192.90 315.50V319.80M1190.90 315.50H1194.90M1190.90 319.80H1194.90M1199.97 315.90V320.20M1197.97 315.90H1201.97M1197.97 320.20H1201.97M1207.04 319.10V323.40M1205.04 319.10H1209.04M1205.04 323.40H1209.04M1214.11 315.90V320.20M1212.11 315.90H1216.11M1212.11 320.20H1216.11M1221.18 314.00V318.30M1219.18 314.00H1223.18M1219.18 318.30H1223.18M1228.25 319.10V323.40M1226.25 319.10H1230.25M1226.25 323.40H1230.25M1235.32 321.30V325.60M1233.32 321.30H1237.32M1233.32 325.60H1237.32M1242.39 317.10V321.40M1240.39 317.10H1244.39M1240.39 321.40H1244.39M1249.46 320.00V324.30M1247.46 320.00H1251.46M1247.46 324.30H1251.46M1256.53 319.10V323.40M1254.53 319.10H1258.53M1254.53 323.40H1258.53M1263.60 322.20V326.50M1261.60 322.20H1265.60M1261.60 326.50H1265.60M1270.67 320.10V324.10M1268.67 320.10H1272.67M1268.67 324.10H1272.67M1277.74 320.40V324.40M1275.74 320.40H1279.74M1275.74 324.40H1279.74M1284.81 320.70V324.70M1282.81 320.70H1286.81M1282.81 324.70H1286.81M1291.88 321.00V325.00M1289.88 321.00H1293.88M1289.88 325.00H1293.88M1298.95 327.40V331.40M1296.95 327.40H1300.95M1296.95 331.40H1300.95M1306.02 328.50V332.50M1304.02 328.50H1308.02M1304.02 332.50H1308.02M1313.09 322.60V326.60M1311.09 322.60H1315.09M1311.09 326.60H1315.09M1320.16 325.60V329.60M1318.16 325.60H1322.16M1318.16 329.60H1322.16M1327.23 321.80V325.80M1325.23 321.80H1329.23M1325.23 325.80H1329.23M1334.30 322.80V326.80M1332.30 322.80H1336.30M1332.30 326.80H1336.30M1341.37 323.80V327.80M1339.37 323.80H1343.37M1339.37 327.80H1343.37M1348.44 321.20V325.20M1346.44 321.20H1350.44M1346.44 325.20H1350.44M1355.51 319.30V323.30M1353.51 319.30H1357.51M1353.51 323.30H1357.51M1362.58 321.60V325.60M1360.58 321.60H1364.58M1360.58 325.60H1364.58M1369.65 315.90V319.90M1367.65 315.90H1371.65M1367.65 319.90H1371.65M1376.72 307.90V311.90M1374.72 307.90H1378.72M1374.72 311.90H1378.72M1383.79 320.70V324.70M1381.79 320.70H1385.79M1381.79 324.70H1385.79M1390.86 326.10V330.10M1388.86 326.10H1392.86M1388.86 330.10H1392.86M1397.93 318.40V322.40M1395.93 318.40H1399.93M1395.93 322.40H1399.93M1405.00 316.20V320.20M1403.00 316.20H1407.00M1403.00 320.20H1407.00M1412.07 322.30V326.30M1410.07 322.30H1414.07M1410.07 326.30H1414.07M1419.14 317.10V321.10M1417.14 317.10H1421.14M1417.14 321.10H1421.14M1426.21 316.20V320.20M1424.21 316.20H1428.21M1424.21 320.20H1428.21M1433.28 323.10V327.10M1431.28 323.10H1435.28M1431.28 327.10H1435.28M1440.35 321.60V325.60M1438.35 321.60H1442.35M1438.35 325.60H1442.35M1447.42 313.30V317.30M1445.42 313.30H1449.42M1445.42 317.30H1449.42M1454.49 312.70V316.70M1452.49 312.70H1456.49M1452.49 316.70H1456.49M1461.56 323.10V327.10M1459.56 323.10H1463.56M1459.56 327.10H1463.56" stroke="#333" stroke-width="0.95" fill="none"/><g fill="#0000e6"><circle cx="825.26" cy="204.80" r="1.75"/><circle cx="832.33" cy="203.70" r="1.75"/><circle cx="839.40" cy="202.00" r="1.75"/><circle cx="846.47" cy="201.10" r="1.75"/><circle cx="853.54" cy="204.10" r="1.75"/><circle cx="860.61" cy="201.80" r="1.75"/><circle cx="867.68" cy="203.70" r="1.75"/><circle cx="874.75" cy="271.80" r="1.75"/><circle cx="881.82" cy="302.20" r="1.75"/><circle cx="888.89" cy="306.70" r="1.75"/><circle cx="895.96" cy="312.50" r="1.75"/><circle cx="903.03" cy="311.40" r="1.75"/><circle cx="910.10" cy="313.50" r="1.75"/><circle cx="917.17" cy="307.70" r="1.75"/><circle cx="924.24" cy="306.70" r="1.75"/><circle cx="931.31" cy="305.60" r="1.75"/><circle cx="938.38" cy="311.80" r="1.75"/><circle cx="945.45" cy="311.80" r="1.75"/><circle cx="952.52" cy="309.40" r="1.75"/><circle cx="959.59" cy="312.50" r="1.75"/><circle cx="966.66" cy="308.40" r="1.75"/><circle cx="973.73" cy="313.60" r="1.75"/><circle cx="980.80" cy="312.80" r="1.75"/><circle cx="987.87" cy="307.70" r="1.75"/><circle cx="994.94" cy="309.60" r="1.75"/><circle cx="1002.01" cy="310.50" r="1.75"/><circle cx="1009.08" cy="308.80" r="1.75"/><circle cx="1016.15" cy="310.80" r="1.75"/><circle cx="1023.22" cy="311.70" r="1.75"/><circle cx="1030.29" cy="309.00" r="1.75"/><circle cx="1037.36" cy="312.30" r="1.75"/><circle cx="1044.43" cy="331.90" r="1.75"/><circle cx="1051.50" cy="318.50" r="1.75"/><circle cx="1058.57" cy="310.00" r="1.75"/><circle cx="1065.64" cy="306.00" r="1.75"/><circle cx="1072.71" cy="306.20" r="1.75"/><circle cx="1079.78" cy="306.80" r="1.75"/><circle cx="1086.85" cy="305.00" r="1.75"/><circle cx="1093.92" cy="305.10" r="1.75"/><circle cx="1100.99" cy="304.80" r="1.75"/><circle cx="1108.06" cy="306.80" r="1.75"/><circle cx="1115.13" cy="304.20" r="1.75"/><circle cx="1122.20" cy="306.80" r="1.75"/><circle cx="1129.27" cy="326.40" r="1.75"/><circle cx="1136.34" cy="314.50" r="1.75"/><circle cx="1143.41" cy="311.80" r="1.75"/><circle cx="1150.48" cy="313.00" r="1.75"/><circle cx="1157.55" cy="313.60" r="1.75"/><circle cx="1164.62" cy="320.00" r="1.75"/><circle cx="1171.69" cy="316.80" r="1.75"/><circle cx="1178.76" cy="318.40" r="1.75"/><circle cx="1185.83" cy="313.20" r="1.75"/><circle cx="1192.90" cy="317.80" r="1.75"/><circle cx="1199.97" cy="318.20" r="1.75"/><circle cx="1207.04" cy="321.40" r="1.75"/><circle cx="1214.11" cy="318.20" r="1.75"/><circle cx="1221.18" cy="316.30" r="1.75"/><circle cx="1228.25" cy="321.40" r="1.75"/><circle cx="1235.32" cy="323.60" r="1.75"/><circle cx="1242.39" cy="319.40" r="1.75"/><circle cx="1249.46" cy="322.30" r="1.75"/><circle cx="1256.53" cy="321.40" r="1.75"/><circle cx="1263.60" cy="324.50" r="1.75"/><circle cx="1270.67" cy="322.10" r="1.75"/><circle cx="1277.74" cy="322.40" r="1.75"/><circle cx="1284.81" cy="322.70" r="1.75"/><circle cx="1291.88" cy="323.00" r="1.75"/><circle cx="1298.95" cy="329.40" r="1.75"/><circle cx="1306.02" cy="330.50" r="1.75"/><circle cx="1313.09" cy="324.60" r="1.75"/><circle cx="1320.16" cy="327.60" r="1.75"/><circle cx="1327.23" cy="323.80" r="1.75"/><circle cx="1334.30" cy="324.80" r="1.75"/><circle cx="1341.37" cy="325.80" r="1.75"/><circle cx="1348.44" cy="323.20" r="1.75"/><circle cx="1355.51" cy="321.30" r="1.75"/><circle cx="1362.58" cy="323.60" r="1.75"/><circle cx="1369.65" cy="317.90" r="1.75"/><circle cx="1376.72" cy="309.90" r="1.75"/><circle cx="1383.79" cy="322.70" r="1.75"/><circle cx="1390.86" cy="328.10" r="1.75"/><circle cx="1397.93" cy="320.40" r="1.75"/><circle cx="1405.00" cy="318.20" r="1.75"/><circle cx="1412.07" cy="324.30" r="1.75"/><circle cx="1419.14" cy="319.10" r="1.75"/><circle cx="1426.21" cy="318.20" r="1.75"/><circle cx="1433.28" cy="325.10" r="1.75"/><circle cx="1440.35" cy="323.60" r="1.75"/><circle cx="1447.42" cy="315.30" r="1.75"/><circle cx="1454.49" cy="314.70" r="1.75"/><circle cx="1461.56" cy="325.10" r="1.75"/></g><g fill="#ff0000"><circle cx="825.26" cy="204.50" r="1.75"/><circle cx="832.33" cy="203.40" r="1.75"/><circle cx="839.40" cy="201.70" r="1.75"/><circle cx="846.47" cy="200.80" r="1.75"/><circle cx="853.54" cy="203.80" r="1.75"/><circle cx="860.61" cy="201.50" r="1.75"/><circle cx="867.68" cy="203.40" r="1.75"/><circle cx="874.75" cy="271.50" r="1.75"/><circle cx="881.82" cy="301.90" r="1.75"/><circle cx="888.89" cy="306.40" r="1.75"/><circle cx="895.96" cy="312.20" r="1.75"/><circle cx="903.03" cy="311.10" r="1.75"/><circle cx="910.10" cy="313.20" r="1.75"/><circle cx="917.17" cy="307.40" r="1.75"/><circle cx="924.24" cy="306.40" r="1.75"/><circle cx="931.31" cy="305.30" r="1.75"/><circle cx="938.38" cy="311.50" r="1.75"/><circle cx="945.45" cy="311.50" r="1.75"/><circle cx="952.52" cy="309.10" r="1.75"/><circle cx="959.59" cy="312.20" r="1.75"/><circle cx="966.66" cy="308.10" r="1.75"/><circle cx="973.73" cy="313.30" r="1.75"/><circle cx="980.80" cy="312.50" r="1.75"/><circle cx="987.87" cy="307.40" r="1.75"/><circle cx="994.94" cy="309.30" r="1.75"/><circle cx="1002.01" cy="310.20" r="1.75"/><circle cx="1009.08" cy="308.50" r="1.75"/><circle cx="1016.15" cy="310.50" r="1.75"/><circle cx="1023.22" cy="311.40" r="1.75"/><circle cx="1030.29" cy="308.70" r="1.75"/><circle cx="1037.36" cy="312.00" r="1.75"/><circle cx="1044.43" cy="331.60" r="1.75"/><circle cx="1051.50" cy="318.20" r="1.75"/><circle cx="1058.57" cy="309.70" r="1.75"/><circle cx="1065.64" cy="305.70" r="1.75"/><circle cx="1072.71" cy="305.90" r="1.75"/><circle cx="1079.78" cy="306.50" r="1.75"/><circle cx="1086.85" cy="304.70" r="1.75"/><circle cx="1093.92" cy="304.80" r="1.75"/><circle cx="1100.99" cy="304.50" r="1.75"/><circle cx="1108.06" cy="306.50" r="1.75"/><circle cx="1115.13" cy="303.90" r="1.75"/><circle cx="1122.20" cy="306.50" r="1.75"/><circle cx="1129.27" cy="326.10" r="1.75"/><circle cx="1136.34" cy="314.20" r="1.75"/><circle cx="1143.41" cy="311.50" r="1.75"/><circle cx="1150.48" cy="312.70" r="1.75"/><circle cx="1157.55" cy="313.30" r="1.75"/><circle cx="1164.62" cy="319.70" r="1.75"/><circle cx="1171.69" cy="316.50" r="1.75"/><circle cx="1178.76" cy="318.10" r="1.75"/><circle cx="1185.83" cy="312.90" r="1.75"/><circle cx="1192.90" cy="317.50" r="1.75"/><circle cx="1199.97" cy="317.90" r="1.75"/><circle cx="1207.04" cy="321.10" r="1.75"/><circle cx="1214.11" cy="317.90" r="1.75"/><circle cx="1221.18" cy="316.00" r="1.75"/><circle cx="1228.25" cy="321.10" r="1.75"/><circle cx="1235.32" cy="323.30" r="1.75"/><circle cx="1242.39" cy="319.10" r="1.75"/><circle cx="1249.46" cy="322.00" r="1.75"/><circle cx="1256.53" cy="321.10" r="1.75"/><circle cx="1263.60" cy="324.20" r="1.75"/></g><line x1="874.3" y1="167" x2="874.3" y2="432" stroke="#28d228" stroke-width="2.2"/><rect x="825.1" y="167" width="643.1999999999999" height="265" fill="none" stroke="#000" stroke-width="2"/><line x1="825.1" y1="503.12" x2="1468.3" y2="503.12" stroke="#8c8c8c" stroke-width="1.1"/><line x1="825.1" y1="503.12" x2="829.1" y2="503.12" stroke="#111" stroke-width="1.2"/><line x1="1464.3" y1="503.12" x2="1468.3" y2="503.12" stroke="#111" stroke-width="1.2"/><line x1="825.1" y1="536.25" x2="1468.3" y2="536.25" stroke="#8c8c8c" stroke-width="1.1"/><line x1="825.1" y1="536.25" x2="829.1" y2="536.25" stroke="#111" stroke-width="1.2"/><line x1="1464.3" y1="536.25" x2="1468.3" y2="536.25" stroke="#111" stroke-width="1.2"/><line x1="825.1" y1="569.38" x2="1468.3" y2="569.38" stroke="#8c8c8c" stroke-width="1.1"/><line x1="825.1" y1="569.38" x2="829.1" y2="569.38" stroke="#111" stroke-width="1.2"/><line x1="1464.3" y1="569.38" x2="1468.3" y2="569.38" stroke="#111" stroke-width="1.2"/><line x1="825.1" y1="602.50" x2="1468.3" y2="602.50" stroke="#8c8c8c" stroke-width="1.1"/><line x1="825.1" y1="602.50" x2="829.1" y2="602.50" stroke="#111" stroke-width="1.2"/><line x1="1464.3" y1="602.50" x2="1468.3" y2="602.50" stroke="#111" stroke-width="1.2"/><line x1="825.1" y1="635.62" x2="1468.3" y2="635.62" stroke="#8c8c8c" stroke-width="1.1"/><line x1="825.1" y1="635.62" x2="829.1" y2="635.62" stroke="#111" stroke-width="1.2"/><line x1="1464.3" y1="635.62" x2="1468.3" y2="635.62" stroke="#111" stroke-width="1.2"/><line x1="825.1" y1="668.75" x2="1468.3" y2="668.75" stroke="#8c8c8c" stroke-width="1.1"/><line x1="825.1" y1="668.75" x2="829.1" y2="668.75" stroke="#111" stroke-width="1.2"/><line x1="1464.3" y1="668.75" x2="1468.3" y2="668.75" stroke="#111" stroke-width="1.2"/><line x1="825.1" y1="701.88" x2="1468.3" y2="701.88" stroke="#8c8c8c" stroke-width="1.1"/><line x1="825.1" y1="701.88" x2="829.1" y2="701.88" stroke="#111" stroke-width="1.2"/><line x1="1464.3" y1="701.88" x2="1468.3" y2="701.88" stroke="#111" stroke-width="1.2"/><text x="821.0" y="474.90" text-anchor="end" font-size="10.8" fill="#2a2a2a" stroke="#2a2a2a" stroke-width="0.18">160</text><text x="821.0" y="508.02" text-anchor="end" font-size="10.8" fill="#2a2a2a" stroke="#2a2a2a" stroke-width="0.18">120</text><text x="821.0" y="541.15" text-anchor="end" font-size="10.8" fill="#2a2a2a" stroke="#2a2a2a" stroke-width="0.18">80</text><text x="821.0" y="574.27" text-anchor="end" font-size="10.8" fill="#2a2a2a" stroke="#2a2a2a" stroke-width="0.18">40</text><text x="821.0" y="607.40" text-anchor="end" font-size="10.8" fill="#2a2a2a" stroke="#2a2a2a" stroke-width="0.18">0</text><text x="821.0" y="640.52" text-anchor="end" font-size="10.8" fill="#2a2a2a" stroke="#2a2a2a" stroke-width="0.18">−40</text><text x="821.0" y="673.65" text-anchor="end" font-size="10.8" fill="#2a2a2a" stroke="#2a2a2a" stroke-width="0.18">−80</text><text x="821.0" y="706.77" text-anchor="end" font-size="10.8" fill="#2a2a2a" stroke="#2a2a2a" stroke-width="0.18">−120</text><text x="821.0" y="739.90" text-anchor="end" font-size="10.8" fill="#2a2a2a" stroke="#2a2a2a" stroke-width="0.18">−160</text><line x1="832.17" y1="470" x2="832.17" y2="472.4" stroke="#111" stroke-width="1.25"/><line x1="832.17" y1="735" x2="832.17" y2="732.6" stroke="#111" stroke-width="1.25"/><line x1="839.24" y1="470" x2="839.24" y2="472.4" stroke="#111" stroke-width="1.25"/><line x1="839.24" y1="735" x2="839.24" y2="732.6" stroke="#111" stroke-width="1.25"/><line x1="846.32" y1="470" x2="846.32" y2="472.4" stroke="#111" stroke-width="1.25"/><line x1="846.32" y1="735" x2="846.32" y2="732.6" stroke="#111" stroke-width="1.25"/><line x1="853.39" y1="470" x2="853.39" y2="472.4" stroke="#111" stroke-width="1.25"/><line x1="853.39" y1="735" x2="853.39" y2="732.6" stroke="#111" stroke-width="1.25"/><line x1="860.46" y1="470" x2="860.46" y2="472.4" stroke="#111" stroke-width="1.25"/><line x1="860.46" y1="735" x2="860.46" y2="732.6" stroke="#111" stroke-width="1.25"/><line x1="867.53" y1="470" x2="867.53" y2="472.4" stroke="#111" stroke-width="1.25"/><line x1="867.53" y1="735" x2="867.53" y2="732.6" stroke="#111" stroke-width="1.25"/><line x1="874.60" y1="470" x2="874.60" y2="472.4" stroke="#111" stroke-width="1.25"/><line x1="874.60" y1="735" x2="874.60" y2="732.6" stroke="#111" stroke-width="1.25"/><line x1="881.68" y1="470" x2="881.68" y2="472.4" stroke="#111" stroke-width="1.25"/><line x1="881.68" y1="735" x2="881.68" y2="732.6" stroke="#111" stroke-width="1.25"/><line x1="888.75" y1="470" x2="888.75" y2="472.4" stroke="#111" stroke-width="1.25"/><line x1="888.75" y1="735" x2="888.75" y2="732.6" stroke="#111" stroke-width="1.25"/><line x1="895.82" y1="470" x2="895.82" y2="472.4" stroke="#111" stroke-width="1.25"/><line x1="895.82" y1="735" x2="895.82" y2="732.6" stroke="#111" stroke-width="1.25"/><line x1="902.89" y1="470" x2="902.89" y2="472.4" stroke="#111" stroke-width="1.25"/><line x1="902.89" y1="735" x2="902.89" y2="732.6" stroke="#111" stroke-width="1.25"/><line x1="909.97" y1="470" x2="909.97" y2="472.4" stroke="#111" stroke-width="1.25"/><line x1="909.97" y1="735" x2="909.97" y2="732.6" stroke="#111" stroke-width="1.25"/><line x1="917.04" y1="470" x2="917.04" y2="472.4" stroke="#111" stroke-width="1.25"/><line x1="917.04" y1="735" x2="917.04" y2="732.6" stroke="#111" stroke-width="1.25"/><line x1="924.11" y1="470" x2="924.11" y2="472.4" stroke="#111" stroke-width="1.25"/><line x1="924.11" y1="735" x2="924.11" y2="732.6" stroke="#111" stroke-width="1.25"/><line x1="931.18" y1="470" x2="931.18" y2="472.4" stroke="#111" stroke-width="1.25"/><line x1="931.18" y1="735" x2="931.18" y2="732.6" stroke="#111" stroke-width="1.25"/><line x1="938.25" y1="470" x2="938.25" y2="472.4" stroke="#111" stroke-width="1.25"/><line x1="938.25" y1="735" x2="938.25" y2="732.6" stroke="#111" stroke-width="1.25"/><line x1="945.33" y1="470" x2="945.33" y2="472.4" stroke="#111" stroke-width="1.25"/><line x1="945.33" y1="735" x2="945.33" y2="732.6" stroke="#111" stroke-width="1.25"/><line x1="952.40" y1="470" x2="952.40" y2="472.4" stroke="#111" stroke-width="1.25"/><line x1="952.40" y1="735" x2="952.40" y2="732.6" stroke="#111" stroke-width="1.25"/><line x1="959.47" y1="470" x2="959.47" y2="472.4" stroke="#111" stroke-width="1.25"/><line x1="959.47" y1="735" x2="959.47" y2="732.6" stroke="#111" stroke-width="1.25"/><line x1="966.54" y1="470" x2="966.54" y2="472.4" stroke="#111" stroke-width="1.25"/><line x1="966.54" y1="735" x2="966.54" y2="732.6" stroke="#111" stroke-width="1.25"/><line x1="973.61" y1="470" x2="973.61" y2="472.4" stroke="#111" stroke-width="1.25"/><line x1="973.61" y1="735" x2="973.61" y2="732.6" stroke="#111" stroke-width="1.25"/><line x1="980.69" y1="470" x2="980.69" y2="472.4" stroke="#111" stroke-width="1.25"/><line x1="980.69" y1="735" x2="980.69" y2="732.6" stroke="#111" stroke-width="1.25"/><line x1="987.76" y1="470" x2="987.76" y2="472.4" stroke="#111" stroke-width="1.25"/><line x1="987.76" y1="735" x2="987.76" y2="732.6" stroke="#111" stroke-width="1.25"/><line x1="994.83" y1="470" x2="994.83" y2="472.4" stroke="#111" stroke-width="1.25"/><line x1="994.83" y1="735" x2="994.83" y2="732.6" stroke="#111" stroke-width="1.25"/><line x1="1001.90" y1="470" x2="1001.90" y2="472.4" stroke="#111" stroke-width="1.25"/><line x1="1001.90" y1="735" x2="1001.90" y2="732.6" stroke="#111" stroke-width="1.25"/><line x1="1008.98" y1="470" x2="1008.98" y2="472.4" stroke="#111" stroke-width="1.25"/><line x1="1008.98" y1="735" x2="1008.98" y2="732.6" stroke="#111" stroke-width="1.25"/><line x1="1016.05" y1="470" x2="1016.05" y2="472.4" stroke="#111" stroke-width="1.25"/><line x1="1016.05" y1="735" x2="1016.05" y2="732.6" stroke="#111" stroke-width="1.25"/><line x1="1023.12" y1="470" x2="1023.12" y2="472.4" stroke="#111" stroke-width="1.25"/><line x1="1023.12" y1="735" x2="1023.12" y2="732.6" stroke="#111" stroke-width="1.25"/><line x1="1030.19" y1="470" x2="1030.19" y2="472.4" stroke="#111" stroke-width="1.25"/><line x1="1030.19" y1="735" x2="1030.19" y2="732.6" stroke="#111" stroke-width="1.25"/><line x1="1037.26" y1="470" x2="1037.26" y2="472.4" stroke="#111" stroke-width="1.25"/><line x1="1037.26" y1="735" x2="1037.26" y2="732.6" stroke="#111" stroke-width="1.25"/><line x1="1044.34" y1="470" x2="1044.34" y2="472.4" stroke="#111" stroke-width="1.25"/><line x1="1044.34" y1="735" x2="1044.34" y2="732.6" stroke="#111" stroke-width="1.25"/><line x1="1051.41" y1="470" x2="1051.41" y2="472.4" stroke="#111" stroke-width="1.25"/><line x1="1051.41" y1="735" x2="1051.41" y2="732.6" stroke="#111" stroke-width="1.25"/><line x1="1058.48" y1="470" x2="1058.48" y2="472.4" stroke="#111" stroke-width="1.25"/><line x1="1058.48" y1="735" x2="1058.48" y2="732.6" stroke="#111" stroke-width="1.25"/><line x1="1065.55" y1="470" x2="1065.55" y2="472.4" stroke="#111" stroke-width="1.25"/><line x1="1065.55" y1="735" x2="1065.55" y2="732.6" stroke="#111" stroke-width="1.25"/><line x1="1072.62" y1="470" x2="1072.62" y2="472.4" stroke="#111" stroke-width="1.25"/><line x1="1072.62" y1="735" x2="1072.62" y2="732.6" stroke="#111" stroke-width="1.25"/><line x1="1079.70" y1="470" x2="1079.70" y2="472.4" stroke="#111" stroke-width="1.25"/><line x1="1079.70" y1="735" x2="1079.70" y2="732.6" stroke="#111" stroke-width="1.25"/><line x1="1086.77" y1="470" x2="1086.77" y2="472.4" stroke="#111" stroke-width="1.25"/><line x1="1086.77" y1="735" x2="1086.77" y2="732.6" stroke="#111" stroke-width="1.25"/><line x1="1093.84" y1="470" x2="1093.84" y2="472.4" stroke="#111" stroke-width="1.25"/><line x1="1093.84" y1="735" x2="1093.84" y2="732.6" stroke="#111" stroke-width="1.25"/><line x1="1100.91" y1="470" x2="1100.91" y2="472.4" stroke="#111" stroke-width="1.25"/><line x1="1100.91" y1="735" x2="1100.91" y2="732.6" stroke="#111" stroke-width="1.25"/><line x1="1107.99" y1="470" x2="1107.99" y2="472.4" stroke="#111" stroke-width="1.25"/><line x1="1107.99" y1="735" x2="1107.99" y2="732.6" stroke="#111" stroke-width="1.25"/><line x1="1115.06" y1="470" x2="1115.06" y2="472.4" stroke="#111" stroke-width="1.25"/><line x1="1115.06" y1="735" x2="1115.06" y2="732.6" stroke="#111" stroke-width="1.25"/><line x1="1122.13" y1="470" x2="1122.13" y2="472.4" stroke="#111" stroke-width="1.25"/><line x1="1122.13" y1="735" x2="1122.13" y2="732.6" stroke="#111" stroke-width="1.25"/><line x1="1129.20" y1="470" x2="1129.20" y2="472.4" stroke="#111" stroke-width="1.25"/><line x1="1129.20" y1="735" x2="1129.20" y2="732.6" stroke="#111" stroke-width="1.25"/><line x1="1136.27" y1="470" x2="1136.27" y2="472.4" stroke="#111" stroke-width="1.25"/><line x1="1136.27" y1="735" x2="1136.27" y2="732.6" stroke="#111" stroke-width="1.25"/><line x1="1143.35" y1="470" x2="1143.35" y2="472.4" stroke="#111" stroke-width="1.25"/><line x1="1143.35" y1="735" x2="1143.35" y2="732.6" stroke="#111" stroke-width="1.25"/><line x1="1150.42" y1="470" x2="1150.42" y2="472.4" stroke="#111" stroke-width="1.25"/><line x1="1150.42" y1="735" x2="1150.42" y2="732.6" stroke="#111" stroke-width="1.25"/><line x1="1157.49" y1="470" x2="1157.49" y2="472.4" stroke="#111" stroke-width="1.25"/><line x1="1157.49" y1="735" x2="1157.49" y2="732.6" stroke="#111" stroke-width="1.25"/><line x1="1164.56" y1="470" x2="1164.56" y2="472.4" stroke="#111" stroke-width="1.25"/><line x1="1164.56" y1="735" x2="1164.56" y2="732.6" stroke="#111" stroke-width="1.25"/><line x1="1171.63" y1="470" x2="1171.63" y2="472.4" stroke="#111" stroke-width="1.25"/><line x1="1171.63" y1="735" x2="1171.63" y2="732.6" stroke="#111" stroke-width="1.25"/><line x1="1178.71" y1="470" x2="1178.71" y2="472.4" stroke="#111" stroke-width="1.25"/><line x1="1178.71" y1="735" x2="1178.71" y2="732.6" stroke="#111" stroke-width="1.25"/><line x1="1185.78" y1="470" x2="1185.78" y2="472.4" stroke="#111" stroke-width="1.25"/><line x1="1185.78" y1="735" x2="1185.78" y2="732.6" stroke="#111" stroke-width="1.25"/><line x1="1192.85" y1="470" x2="1192.85" y2="472.4" stroke="#111" stroke-width="1.25"/><line x1="1192.85" y1="735" x2="1192.85" y2="732.6" stroke="#111" stroke-width="1.25"/><line x1="1199.92" y1="470" x2="1199.92" y2="472.4" stroke="#111" stroke-width="1.25"/><line x1="1199.92" y1="735" x2="1199.92" y2="732.6" stroke="#111" stroke-width="1.25"/><line x1="1207.00" y1="470" x2="1207.00" y2="472.4" stroke="#111" stroke-width="1.25"/><line x1="1207.00" y1="735" x2="1207.00" y2="732.6" stroke="#111" stroke-width="1.25"/><line x1="1214.07" y1="470" x2="1214.07" y2="472.4" stroke="#111" stroke-width="1.25"/><line x1="1214.07" y1="735" x2="1214.07" y2="732.6" stroke="#111" stroke-width="1.25"/><line x1="1221.14" y1="470" x2="1221.14" y2="472.4" stroke="#111" stroke-width="1.25"/><line x1="1221.14" y1="735" x2="1221.14" y2="732.6" stroke="#111" stroke-width="1.25"/><line x1="1228.21" y1="470" x2="1228.21" y2="472.4" stroke="#111" stroke-width="1.25"/><line x1="1228.21" y1="735" x2="1228.21" y2="732.6" stroke="#111" stroke-width="1.25"/><line x1="1235.28" y1="470" x2="1235.28" y2="472.4" stroke="#111" stroke-width="1.25"/><line x1="1235.28" y1="735" x2="1235.28" y2="732.6" stroke="#111" stroke-width="1.25"/><line x1="1242.36" y1="470" x2="1242.36" y2="472.4" stroke="#111" stroke-width="1.25"/><line x1="1242.36" y1="735" x2="1242.36" y2="732.6" stroke="#111" stroke-width="1.25"/><line x1="1249.43" y1="470" x2="1249.43" y2="472.4" stroke="#111" stroke-width="1.25"/><line x1="1249.43" y1="735" x2="1249.43" y2="732.6" stroke="#111" stroke-width="1.25"/><line x1="1256.50" y1="470" x2="1256.50" y2="472.4" stroke="#111" stroke-width="1.25"/><line x1="1256.50" y1="735" x2="1256.50" y2="732.6" stroke="#111" stroke-width="1.25"/><line x1="1263.57" y1="470" x2="1263.57" y2="472.4" stroke="#111" stroke-width="1.25"/><line x1="1263.57" y1="735" x2="1263.57" y2="732.6" stroke="#111" stroke-width="1.25"/><line x1="1270.64" y1="470" x2="1270.64" y2="472.4" stroke="#111" stroke-width="1.25"/><line x1="1270.64" y1="735" x2="1270.64" y2="732.6" stroke="#111" stroke-width="1.25"/><line x1="1277.72" y1="470" x2="1277.72" y2="472.4" stroke="#111" stroke-width="1.25"/><line x1="1277.72" y1="735" x2="1277.72" y2="732.6" stroke="#111" stroke-width="1.25"/><line x1="1284.79" y1="470" x2="1284.79" y2="472.4" stroke="#111" stroke-width="1.25"/><line x1="1284.79" y1="735" x2="1284.79" y2="732.6" stroke="#111" stroke-width="1.25"/><line x1="1291.86" y1="470" x2="1291.86" y2="472.4" stroke="#111" stroke-width="1.25"/><line x1="1291.86" y1="735" x2="1291.86" y2="732.6" stroke="#111" stroke-width="1.25"/><line x1="1298.93" y1="470" x2="1298.93" y2="472.4" stroke="#111" stroke-width="1.25"/><line x1="1298.93" y1="735" x2="1298.93" y2="732.6" stroke="#111" stroke-width="1.25"/><line x1="1306.00" y1="470" x2="1306.00" y2="472.4" stroke="#111" stroke-width="1.25"/><line x1="1306.00" y1="735" x2="1306.00" y2="732.6" stroke="#111" stroke-width="1.25"/><line x1="1313.08" y1="470" x2="1313.08" y2="472.4" stroke="#111" stroke-width="1.25"/><line x1="1313.08" y1="735" x2="1313.08" y2="732.6" stroke="#111" stroke-width="1.25"/><line x1="1320.15" y1="470" x2="1320.15" y2="472.4" stroke="#111" stroke-width="1.25"/><line x1="1320.15" y1="735" x2="1320.15" y2="732.6" stroke="#111" stroke-width="1.25"/><line x1="1327.22" y1="470" x2="1327.22" y2="472.4" stroke="#111" stroke-width="1.25"/><line x1="1327.22" y1="735" x2="1327.22" y2="732.6" stroke="#111" stroke-width="1.25"/><line x1="1334.29" y1="470" x2="1334.29" y2="472.4" stroke="#111" stroke-width="1.25"/><line x1="1334.29" y1="735" x2="1334.29" y2="732.6" stroke="#111" stroke-width="1.25"/><line x1="1341.37" y1="470" x2="1341.37" y2="472.4" stroke="#111" stroke-width="1.25"/><line x1="1341.37" y1="735" x2="1341.37" y2="732.6" stroke="#111" stroke-width="1.25"/><line x1="1348.44" y1="470" x2="1348.44" y2="472.4" stroke="#111" stroke-width="1.25"/><line x1="1348.44" y1="735" x2="1348.44" y2="732.6" stroke="#111" stroke-width="1.25"/><line x1="1355.51" y1="470" x2="1355.51" y2="472.4" stroke="#111" stroke-width="1.25"/><line x1="1355.51" y1="735" x2="1355.51" y2="732.6" stroke="#111" stroke-width="1.25"/><line x1="1362.58" y1="470" x2="1362.58" y2="472.4" stroke="#111" stroke-width="1.25"/><line x1="1362.58" y1="735" x2="1362.58" y2="732.6" stroke="#111" stroke-width="1.25"/><line x1="1369.65" y1="470" x2="1369.65" y2="472.4" stroke="#111" stroke-width="1.25"/><line x1="1369.65" y1="735" x2="1369.65" y2="732.6" stroke="#111" stroke-width="1.25"/><line x1="1376.73" y1="470" x2="1376.73" y2="472.4" stroke="#111" stroke-width="1.25"/><line x1="1376.73" y1="735" x2="1376.73" y2="732.6" stroke="#111" stroke-width="1.25"/><line x1="1383.80" y1="470" x2="1383.80" y2="472.4" stroke="#111" stroke-width="1.25"/><line x1="1383.80" y1="735" x2="1383.80" y2="732.6" stroke="#111" stroke-width="1.25"/><line x1="1390.87" y1="470" x2="1390.87" y2="472.4" stroke="#111" stroke-width="1.25"/><line x1="1390.87" y1="735" x2="1390.87" y2="732.6" stroke="#111" stroke-width="1.25"/><line x1="1397.94" y1="470" x2="1397.94" y2="472.4" stroke="#111" stroke-width="1.25"/><line x1="1397.94" y1="735" x2="1397.94" y2="732.6" stroke="#111" stroke-width="1.25"/><line x1="1405.01" y1="470" x2="1405.01" y2="472.4" stroke="#111" stroke-width="1.25"/><line x1="1405.01" y1="735" x2="1405.01" y2="732.6" stroke="#111" stroke-width="1.25"/><line x1="1412.09" y1="470" x2="1412.09" y2="472.4" stroke="#111" stroke-width="1.25"/><line x1="1412.09" y1="735" x2="1412.09" y2="732.6" stroke="#111" stroke-width="1.25"/><line x1="1419.16" y1="470" x2="1419.16" y2="472.4" stroke="#111" stroke-width="1.25"/><line x1="1419.16" y1="735" x2="1419.16" y2="732.6" stroke="#111" stroke-width="1.25"/><line x1="1426.23" y1="470" x2="1426.23" y2="472.4" stroke="#111" stroke-width="1.25"/><line x1="1426.23" y1="735" x2="1426.23" y2="732.6" stroke="#111" stroke-width="1.25"/><line x1="1433.30" y1="470" x2="1433.30" y2="472.4" stroke="#111" stroke-width="1.25"/><line x1="1433.30" y1="735" x2="1433.30" y2="732.6" stroke="#111" stroke-width="1.25"/><line x1="1440.38" y1="470" x2="1440.38" y2="472.4" stroke="#111" stroke-width="1.25"/><line x1="1440.38" y1="735" x2="1440.38" y2="732.6" stroke="#111" stroke-width="1.25"/><line x1="1447.45" y1="470" x2="1447.45" y2="472.4" stroke="#111" stroke-width="1.25"/><line x1="1447.45" y1="735" x2="1447.45" y2="732.6" stroke="#111" stroke-width="1.25"/><line x1="1454.52" y1="470" x2="1454.52" y2="472.4" stroke="#111" stroke-width="1.25"/><line x1="1454.52" y1="735" x2="1454.52" y2="732.6" stroke="#111" stroke-width="1.25"/><line x1="1461.59" y1="470" x2="1461.59" y2="472.4" stroke="#111" stroke-width="1.25"/><line x1="1461.59" y1="735" x2="1461.59" y2="732.6" stroke="#111" stroke-width="1.25"/><line x1="959.3" y1="470" x2="959.3" y2="482.5" stroke="#555" stroke-width="1.3"/><line x1="959.3" y1="735" x2="959.3" y2="722.5" stroke="#555" stroke-width="1.3"/><line x1="1178.4" y1="470" x2="1178.4" y2="482.5" stroke="#555" stroke-width="1.3"/><line x1="1178.4" y1="735" x2="1178.4" y2="722.5" stroke="#555" stroke-width="1.3"/><line x1="1390.7" y1="470" x2="1390.7" y2="482.5" stroke="#555" stroke-width="1.3"/><line x1="1390.7" y1="735" x2="1390.7" y2="722.5" stroke="#555" stroke-width="1.3"/><text x="891.9" y="753.4" text-anchor="middle" font-size="12" fill="#222">Septiembre 21</text><text x="1068.0" y="753.4" text-anchor="middle" font-size="12" fill="#222">Octubre 21</text><text x="1284.3" y="753.4" text-anchor="middle" font-size="12" fill="#222">Noviembre 21</text><text x="1429.2" y="753.4" text-anchor="middle" font-size="12" fill="#222">Diciembre 21</text><text transform="translate(786.2,602.5) rotate(-90)" text-anchor="middle" font-size="18" fill="#111">e [mm]</text><path d="M825.26 601.20V605.90M823.26 601.20H827.26M823.26 605.90H827.26M832.33 600.60V605.30M830.33 600.60H834.33M830.33 605.30H834.33M839.40 595.50V600.20M837.40 595.50H841.40M837.40 600.20H841.40M846.47 590.10V594.80M844.47 590.10H848.47M844.47 594.80H848.47M853.54 588.50V593.20M851.54 588.50H855.54M851.54 593.20H855.54M860.61 582.80V587.50M858.61 582.80H862.61M858.61 587.50H862.61M867.68 588.10V592.80M865.68 588.10H869.68M865.68 592.80H869.68M874.75 597.60V602.30M872.75 597.60H876.75M872.75 602.30H876.75M881.82 610.70V615.40M879.82 610.70H883.82M879.82 615.40H883.82M888.89 600.40V605.10M886.89 600.40H890.89M886.89 605.10H890.89M895.96 603.30V608.00M893.96 603.30H897.96M893.96 608.00H897.96M903.03 610.40V615.10M901.03 610.40H905.03M901.03 615.10H905.03M910.10 615.80V620.50M908.10 615.80H912.10M908.10 620.50H912.10M917.17 605.90V610.60M915.17 605.90H919.17M915.17 610.60H919.17M924.24 603.10V607.80M922.24 603.10H926.24M922.24 607.80H926.24M931.31 603.70V608.40M929.31 603.70H933.31M929.31 608.40H933.31M938.38 612.60V617.30M936.38 612.60H940.38M936.38 617.30H940.38M945.45 578.50V583.20M943.45 578.50H947.45M943.45 583.20H947.45M952.52 599.40V604.10M950.52 599.40H954.52M950.52 604.10H954.52M959.59 604.50V609.20M957.59 604.50H961.59M957.59 609.20H961.59M966.66 606.70V611.40M964.66 606.70H968.66M964.66 611.40H968.66M973.73 606.70V611.40M971.73 606.70H975.73M971.73 611.40H975.73M980.80 602.20V606.90M978.80 602.20H982.80M978.80 606.90H982.80M987.87 602.20V606.90M985.87 602.20H989.87M985.87 606.90H989.87M994.94 604.00V608.70M992.94 604.00H996.94M992.94 608.70H996.94M1002.01 602.70V607.40M1000.01 602.70H1004.01M1000.01 607.40H1004.01M1009.08 602.50V607.20M1007.08 602.50H1011.08M1007.08 607.20H1011.08M1016.15 604.70V609.40M1014.15 604.70H1018.15M1014.15 609.40H1018.15M1023.22 604.70V609.40M1021.22 604.70H1025.22M1021.22 609.40H1025.22M1030.29 608.90V613.60M1028.29 608.90H1032.29M1028.29 613.60H1032.29M1037.36 603.10V607.80M1035.36 603.10H1039.36M1035.36 607.80H1039.36M1044.43 610.00V614.70M1042.43 610.00H1046.43M1042.43 614.70H1046.43M1051.50 610.00V614.70M1049.50 610.00H1053.50M1049.50 614.70H1053.50M1058.57 596.10V600.80M1056.57 596.10H1060.57M1056.57 600.80H1060.57M1065.64 598.80V603.50M1063.64 598.80H1067.64M1063.64 603.50H1067.64M1072.71 599.10V603.80M1070.71 599.10H1074.71M1070.71 603.80H1074.71M1079.78 597.60V602.30M1077.78 597.60H1081.78M1077.78 602.30H1081.78M1086.85 598.60V603.30M1084.85 598.60H1088.85M1084.85 603.30H1088.85M1093.92 598.80V603.50M1091.92 598.80H1095.92M1091.92 603.50H1095.92M1100.99 595.20V599.90M1098.99 595.20H1102.99M1098.99 599.90H1102.99M1108.06 598.20V602.90M1106.06 598.20H1110.06M1106.06 602.90H1110.06M1115.13 593.10V597.80M1113.13 593.10H1117.13M1113.13 597.80H1117.13M1122.20 590.90V595.60M1120.20 590.90H1124.20M1120.20 595.60H1124.20M1129.27 599.40V604.10M1127.27 599.40H1131.27M1127.27 604.10H1131.27M1136.34 587.50V592.20M1134.34 587.50H1138.34M1134.34 592.20H1138.34M1143.41 586.70V591.40M1141.41 586.70H1145.41M1141.41 591.40H1145.41M1150.48 583.60V588.30M1148.48 583.60H1152.48M1148.48 588.30H1152.48M1157.55 593.30V598.00M1155.55 593.30H1159.55M1155.55 598.00H1159.55M1164.62 594.10V598.80M1162.62 594.10H1166.62M1162.62 598.80H1166.62M1171.69 594.10V598.80M1169.69 594.10H1173.69M1169.69 598.80H1173.69M1178.76 590.80V595.50M1176.76 590.80H1180.76M1176.76 595.50H1180.76M1185.83 593.70V598.40M1183.83 593.70H1187.83M1183.83 598.40H1187.83M1192.90 598.30V603.00M1190.90 598.30H1194.90M1190.90 603.00H1194.90M1199.97 595.70V600.40M1197.97 595.70H1201.97M1197.97 600.40H1201.97M1207.04 604.20V608.90M1205.04 604.20H1209.04M1205.04 608.90H1209.04M1214.11 608.90V613.60M1212.11 608.90H1216.11M1212.11 613.60H1216.11M1221.18 605.00V609.70M1219.18 605.00H1223.18M1219.18 609.70H1223.18M1228.25 611.70V616.40M1226.25 611.70H1230.25M1226.25 616.40H1230.25M1235.32 609.50V614.20M1233.32 609.50H1237.32M1233.32 614.20H1237.32M1242.39 613.50V618.20M1240.39 613.50H1244.39M1240.39 618.20H1244.39M1249.46 609.50V614.20M1247.46 609.50H1251.46M1247.46 614.20H1251.46M1256.53 604.80V609.50M1254.53 604.80H1258.53M1254.53 609.50H1258.53M1263.60 605.40V610.10M1261.60 605.40H1265.60M1261.60 610.10H1265.60M1270.67 611.10V615.50M1268.67 611.10H1272.67M1268.67 615.50H1272.67M1277.74 608.90V613.30M1275.74 608.90H1279.74M1275.74 613.30H1279.74M1284.81 610.50V614.90M1282.81 610.50H1286.81M1282.81 614.90H1286.81M1291.88 607.70V612.10M1289.88 607.70H1293.88M1289.88 612.10H1293.88M1298.95 610.50V614.90M1296.95 610.50H1300.95M1296.95 614.90H1300.95M1306.02 619.30V623.70M1304.02 619.30H1308.02M1304.02 623.70H1308.02M1313.09 614.50V618.90M1311.09 614.50H1315.09M1311.09 618.90H1315.09M1320.16 611.50V615.90M1318.16 611.50H1322.16M1318.16 615.90H1322.16M1327.23 616.20V620.60M1325.23 616.20H1329.23M1325.23 620.60H1329.23M1334.30 611.70V616.10M1332.30 611.70H1336.30M1332.30 616.10H1336.30M1341.37 611.60V616.00M1339.37 611.60H1343.37M1339.37 616.00H1343.37M1348.44 612.10V616.50M1346.44 612.10H1350.44M1346.44 616.50H1350.44M1355.51 598.20V602.60M1353.51 598.20H1357.51M1353.51 602.60H1357.51M1362.58 605.40V609.80M1360.58 605.40H1364.58M1360.58 609.80H1364.58M1369.65 602.10V606.50M1367.65 602.10H1371.65M1367.65 606.50H1371.65M1376.72 591.40V595.80M1374.72 591.40H1378.72M1374.72 595.80H1378.72M1383.79 608.30V612.70M1381.79 608.30H1385.79M1381.79 612.70H1385.79M1390.86 603.50V607.90M1388.86 603.50H1392.86M1388.86 607.90H1392.86M1397.93 600.90V605.30M1395.93 600.90H1399.93M1395.93 605.30H1399.93M1405.00 595.30V599.70M1403.00 595.30H1407.00M1403.00 599.70H1407.00M1412.07 595.80V600.20M1410.07 595.80H1414.07M1410.07 600.20H1414.07M1419.14 591.10V595.50M1417.14 591.10H1421.14M1417.14 595.50H1421.14M1426.21 600.40V604.80M1424.21 600.40H1428.21M1424.21 604.80H1428.21M1433.28 610.90V615.30M1431.28 610.90H1435.28M1431.28 615.30H1435.28M1440.35 606.70V611.10M1438.35 606.70H1442.35M1438.35 611.10H1442.35M1447.42 604.80V609.20M1445.42 604.80H1449.42M1445.42 609.20H1449.42M1454.49 607.80V612.20M1452.49 607.80H1456.49M1452.49 612.20H1456.49M1461.56 607.80V612.20M1459.56 607.80H1463.56M1459.56 612.20H1463.56" stroke="#333" stroke-width="0.95" fill="none"/><g fill="#0000e6"><circle cx="825.26" cy="603.70" r="1.75"/><circle cx="832.33" cy="603.10" r="1.75"/><circle cx="839.40" cy="598.00" r="1.75"/><circle cx="846.47" cy="592.60" r="1.75"/><circle cx="853.54" cy="591.00" r="1.75"/><circle cx="860.61" cy="585.30" r="1.75"/><circle cx="867.68" cy="590.60" r="1.75"/><circle cx="874.75" cy="600.10" r="1.75"/><circle cx="881.82" cy="613.20" r="1.75"/><circle cx="888.89" cy="602.90" r="1.75"/><circle cx="895.96" cy="605.80" r="1.75"/><circle cx="903.03" cy="612.90" r="1.75"/><circle cx="910.10" cy="618.30" r="1.75"/><circle cx="917.17" cy="608.40" r="1.75"/><circle cx="924.24" cy="605.60" r="1.75"/><circle cx="931.31" cy="606.20" r="1.75"/><circle cx="938.38" cy="615.10" r="1.75"/><circle cx="945.45" cy="581.00" r="1.75"/><circle cx="952.52" cy="601.90" r="1.75"/><circle cx="959.59" cy="607.00" r="1.75"/><circle cx="966.66" cy="609.20" r="1.75"/><circle cx="973.73" cy="609.20" r="1.75"/><circle cx="980.80" cy="604.70" r="1.75"/><circle cx="987.87" cy="604.70" r="1.75"/><circle cx="994.94" cy="606.50" r="1.75"/><circle cx="1002.01" cy="605.20" r="1.75"/><circle cx="1009.08" cy="605.00" r="1.75"/><circle cx="1016.15" cy="607.20" r="1.75"/><circle cx="1023.22" cy="607.20" r="1.75"/><circle cx="1030.29" cy="611.40" r="1.75"/><circle cx="1037.36" cy="605.60" r="1.75"/><circle cx="1044.43" cy="612.50" r="1.75"/><circle cx="1051.50" cy="612.50" r="1.75"/><circle cx="1058.57" cy="598.60" r="1.75"/><circle cx="1065.64" cy="601.30" r="1.75"/><circle cx="1072.71" cy="601.60" r="1.75"/><circle cx="1079.78" cy="600.10" r="1.75"/><circle cx="1086.85" cy="601.10" r="1.75"/><circle cx="1093.92" cy="601.30" r="1.75"/><circle cx="1100.99" cy="597.70" r="1.75"/><circle cx="1108.06" cy="600.70" r="1.75"/><circle cx="1115.13" cy="595.60" r="1.75"/><circle cx="1122.20" cy="593.40" r="1.75"/><circle cx="1129.27" cy="601.90" r="1.75"/><circle cx="1136.34" cy="590.00" r="1.75"/><circle cx="1143.41" cy="589.20" r="1.75"/><circle cx="1150.48" cy="586.10" r="1.75"/><circle cx="1157.55" cy="595.80" r="1.75"/><circle cx="1164.62" cy="596.60" r="1.75"/><circle cx="1171.69" cy="596.60" r="1.75"/><circle cx="1178.76" cy="593.30" r="1.75"/><circle cx="1185.83" cy="596.20" r="1.75"/><circle cx="1192.90" cy="600.80" r="1.75"/><circle cx="1199.97" cy="598.20" r="1.75"/><circle cx="1207.04" cy="606.70" r="1.75"/><circle cx="1214.11" cy="611.40" r="1.75"/><circle cx="1221.18" cy="607.50" r="1.75"/><circle cx="1228.25" cy="614.20" r="1.75"/><circle cx="1235.32" cy="612.00" r="1.75"/><circle cx="1242.39" cy="616.00" r="1.75"/><circle cx="1249.46" cy="612.00" r="1.75"/><circle cx="1256.53" cy="607.30" r="1.75"/><circle cx="1263.60" cy="607.90" r="1.75"/><circle cx="1270.67" cy="613.30" r="1.75"/><circle cx="1277.74" cy="611.10" r="1.75"/><circle cx="1284.81" cy="612.70" r="1.75"/><circle cx="1291.88" cy="609.90" r="1.75"/><circle cx="1298.95" cy="612.70" r="1.75"/><circle cx="1306.02" cy="621.50" r="1.75"/><circle cx="1313.09" cy="616.70" r="1.75"/><circle cx="1320.16" cy="613.70" r="1.75"/><circle cx="1327.23" cy="618.40" r="1.75"/><circle cx="1334.30" cy="613.90" r="1.75"/><circle cx="1341.37" cy="613.80" r="1.75"/><circle cx="1348.44" cy="614.30" r="1.75"/><circle cx="1355.51" cy="600.40" r="1.75"/><circle cx="1362.58" cy="607.60" r="1.75"/><circle cx="1369.65" cy="604.30" r="1.75"/><circle cx="1376.72" cy="593.60" r="1.75"/><circle cx="1383.79" cy="610.50" r="1.75"/><circle cx="1390.86" cy="605.70" r="1.75"/><circle cx="1397.93" cy="603.10" r="1.75"/><circle cx="1405.00" cy="597.50" r="1.75"/><circle cx="1412.07" cy="598.00" r="1.75"/><circle cx="1419.14" cy="593.30" r="1.75"/><circle cx="1426.21" cy="602.60" r="1.75"/><circle cx="1433.28" cy="613.10" r="1.75"/><circle cx="1440.35" cy="608.90" r="1.75"/><circle cx="1447.42" cy="607.00" r="1.75"/><circle cx="1454.49" cy="610.00" r="1.75"/><circle cx="1461.56" cy="610.00" r="1.75"/></g><g fill="#ff0000"><circle cx="825.26" cy="603.40" r="1.75"/><circle cx="832.33" cy="602.80" r="1.75"/><circle cx="839.40" cy="597.70" r="1.75"/><circle cx="846.47" cy="592.30" r="1.75"/><circle cx="853.54" cy="590.70" r="1.75"/><circle cx="860.61" cy="585.00" r="1.75"/><circle cx="867.68" cy="590.30" r="1.75"/><circle cx="874.75" cy="599.80" r="1.75"/><circle cx="881.82" cy="612.90" r="1.75"/><circle cx="888.89" cy="602.60" r="1.75"/><circle cx="895.96" cy="605.50" r="1.75"/><circle cx="903.03" cy="612.60" r="1.75"/><circle cx="910.10" cy="618.00" r="1.75"/><circle cx="917.17" cy="608.10" r="1.75"/><circle cx="924.24" cy="605.30" r="1.75"/><circle cx="931.31" cy="605.90" r="1.75"/><circle cx="938.38" cy="614.80" r="1.75"/><circle cx="945.45" cy="580.70" r="1.75"/><circle cx="952.52" cy="601.60" r="1.75"/><circle cx="959.59" cy="606.70" r="1.75"/><circle cx="966.66" cy="608.90" r="1.75"/><circle cx="973.73" cy="608.90" r="1.75"/><circle cx="980.80" cy="604.40" r="1.75"/><circle cx="987.87" cy="604.40" r="1.75"/><circle cx="994.94" cy="606.20" r="1.75"/><circle cx="1002.01" cy="604.90" r="1.75"/><circle cx="1009.08" cy="604.70" r="1.75"/><circle cx="1016.15" cy="606.90" r="1.75"/><circle cx="1023.22" cy="606.90" r="1.75"/><circle cx="1030.29" cy="611.10" r="1.75"/><circle cx="1037.36" cy="605.30" r="1.75"/><circle cx="1044.43" cy="612.20" r="1.75"/><circle cx="1051.50" cy="612.20" r="1.75"/><circle cx="1058.57" cy="598.30" r="1.75"/><circle cx="1065.64" cy="601.00" r="1.75"/><circle cx="1072.71" cy="601.30" r="1.75"/><circle cx="1079.78" cy="599.80" r="1.75"/><circle cx="1086.85" cy="600.80" r="1.75"/><circle cx="1093.92" cy="601.00" r="1.75"/><circle cx="1100.99" cy="597.40" r="1.75"/><circle cx="1108.06" cy="600.40" r="1.75"/><circle cx="1115.13" cy="595.30" r="1.75"/><circle cx="1122.20" cy="593.10" r="1.75"/><circle cx="1129.27" cy="601.60" r="1.75"/><circle cx="1136.34" cy="589.70" r="1.75"/><circle cx="1143.41" cy="588.90" r="1.75"/><circle cx="1150.48" cy="585.80" r="1.75"/><circle cx="1157.55" cy="595.50" r="1.75"/><circle cx="1164.62" cy="596.30" r="1.75"/><circle cx="1171.69" cy="596.30" r="1.75"/><circle cx="1178.76" cy="593.00" r="1.75"/><circle cx="1185.83" cy="595.90" r="1.75"/><circle cx="1192.90" cy="600.50" r="1.75"/><circle cx="1199.97" cy="597.90" r="1.75"/><circle cx="1207.04" cy="606.40" r="1.75"/><circle cx="1214.11" cy="611.10" r="1.75"/><circle cx="1221.18" cy="607.20" r="1.75"/><circle cx="1228.25" cy="613.90" r="1.75"/><circle cx="1235.32" cy="611.70" r="1.75"/><circle cx="1242.39" cy="615.70" r="1.75"/><circle cx="1249.46" cy="611.70" r="1.75"/><circle cx="1256.53" cy="607.00" r="1.75"/><circle cx="1263.60" cy="607.60" r="1.75"/></g><line x1="874.3" y1="470" x2="874.3" y2="735" stroke="#28d228" stroke-width="2.2"/><rect x="825.1" y="470" width="643.1999999999999" height="265" fill="none" stroke="#000" stroke-width="2"/><line x1="825.1" y1="800.00" x2="1468.3" y2="800.00" stroke="#8c8c8c" stroke-width="1.1"/><line x1="825.1" y1="800.00" x2="829.1" y2="800.00" stroke="#111" stroke-width="1.2"/><line x1="1464.3" y1="800.00" x2="1468.3" y2="800.00" stroke="#111" stroke-width="1.2"/><line x1="825.1" y1="825.50" x2="1468.3" y2="825.50" stroke="#8c8c8c" stroke-width="1.1"/><line x1="825.1" y1="825.50" x2="829.1" y2="825.50" stroke="#111" stroke-width="1.2"/><line x1="1464.3" y1="825.50" x2="1468.3" y2="825.50" stroke="#111" stroke-width="1.2"/><line x1="825.1" y1="852.00" x2="1468.3" y2="852.00" stroke="#8c8c8c" stroke-width="1.1"/><line x1="825.1" y1="852.00" x2="829.1" y2="852.00" stroke="#111" stroke-width="1.2"/><line x1="1464.3" y1="852.00" x2="1468.3" y2="852.00" stroke="#111" stroke-width="1.2"/><line x1="825.1" y1="878.50" x2="1468.3" y2="878.50" stroke="#8c8c8c" stroke-width="1.1"/><line x1="825.1" y1="878.50" x2="829.1" y2="878.50" stroke="#111" stroke-width="1.2"/><line x1="1464.3" y1="878.50" x2="1468.3" y2="878.50" stroke="#111" stroke-width="1.2"/><line x1="825.1" y1="905.50" x2="1468.3" y2="905.50" stroke="#8c8c8c" stroke-width="1.1"/><line x1="825.1" y1="905.50" x2="829.1" y2="905.50" stroke="#111" stroke-width="1.2"/><line x1="1464.3" y1="905.50" x2="1468.3" y2="905.50" stroke="#111" stroke-width="1.2"/><line x1="825.1" y1="931.50" x2="1468.3" y2="931.50" stroke="#8c8c8c" stroke-width="1.1"/><line x1="825.1" y1="931.50" x2="829.1" y2="931.50" stroke="#111" stroke-width="1.2"/><line x1="1464.3" y1="931.50" x2="1468.3" y2="931.50" stroke="#111" stroke-width="1.2"/><line x1="825.1" y1="958.50" x2="1468.3" y2="958.50" stroke="#8c8c8c" stroke-width="1.1"/><line x1="825.1" y1="958.50" x2="829.1" y2="958.50" stroke="#111" stroke-width="1.2"/><line x1="1464.3" y1="958.50" x2="1468.3" y2="958.50" stroke="#111" stroke-width="1.2"/><line x1="825.1" y1="985.50" x2="1468.3" y2="985.50" stroke="#8c8c8c" stroke-width="1.1"/><line x1="825.1" y1="985.50" x2="829.1" y2="985.50" stroke="#111" stroke-width="1.2"/><line x1="1464.3" y1="985.50" x2="1468.3" y2="985.50" stroke="#111" stroke-width="1.2"/><line x1="825.1" y1="1011.50" x2="1468.3" y2="1011.50" stroke="#8c8c8c" stroke-width="1.1"/><line x1="825.1" y1="1011.50" x2="829.1" y2="1011.50" stroke="#111" stroke-width="1.2"/><line x1="1464.3" y1="1011.50" x2="1468.3" y2="1011.50" stroke="#111" stroke-width="1.2"/><text x="821.0" y="777.90" text-anchor="end" font-size="10.8" fill="#2a2a2a" stroke="#2a2a2a" stroke-width="0.18">240</text><text x="821.0" y="804.40" text-anchor="end" font-size="10.8" fill="#2a2a2a" stroke="#2a2a2a" stroke-width="0.18">200</text><text x="821.0" y="830.90" text-anchor="end" font-size="10.8" fill="#2a2a2a" stroke="#2a2a2a" stroke-width="0.18">160</text><text x="821.0" y="857.40" text-anchor="end" font-size="10.8" fill="#2a2a2a" stroke="#2a2a2a" stroke-width="0.18">120</text><text x="821.0" y="883.90" text-anchor="end" font-size="10.8" fill="#2a2a2a" stroke="#2a2a2a" stroke-width="0.18">80</text><text x="821.0" y="910.40" text-anchor="end" font-size="10.8" fill="#2a2a2a" stroke="#2a2a2a" stroke-width="0.18">40</text><text x="821.0" y="936.90" text-anchor="end" font-size="10.8" fill="#2a2a2a" stroke="#2a2a2a" stroke-width="0.18">0</text><text x="821.0" y="963.40" text-anchor="end" font-size="10.8" fill="#2a2a2a" stroke="#2a2a2a" stroke-width="0.18">−40</text><text x="821.0" y="989.90" text-anchor="end" font-size="10.8" fill="#2a2a2a" stroke="#2a2a2a" stroke-width="0.18">−80</text><text x="821.0" y="1016.40" text-anchor="end" font-size="10.8" fill="#2a2a2a" stroke="#2a2a2a" stroke-width="0.18">−120</text><text x="821.0" y="1042.90" text-anchor="end" font-size="10.8" fill="#2a2a2a" stroke="#2a2a2a" stroke-width="0.18">−160</text><line x1="832.17" y1="773" x2="832.17" y2="775.4" stroke="#111" stroke-width="1.25"/><line x1="832.17" y1="1038" x2="832.17" y2="1035.6" stroke="#111" stroke-width="1.25"/><line x1="839.24" y1="773" x2="839.24" y2="775.4" stroke="#111" stroke-width="1.25"/><line x1="839.24" y1="1038" x2="839.24" y2="1035.6" stroke="#111" stroke-width="1.25"/><line x1="846.32" y1="773" x2="846.32" y2="775.4" stroke="#111" stroke-width="1.25"/><line x1="846.32" y1="1038" x2="846.32" y2="1035.6" stroke="#111" stroke-width="1.25"/><line x1="853.39" y1="773" x2="853.39" y2="775.4" stroke="#111" stroke-width="1.25"/><line x1="853.39" y1="1038" x2="853.39" y2="1035.6" stroke="#111" stroke-width="1.25"/><line x1="860.46" y1="773" x2="860.46" y2="775.4" stroke="#111" stroke-width="1.25"/><line x1="860.46" y1="1038" x2="860.46" y2="1035.6" stroke="#111" stroke-width="1.25"/><line x1="867.53" y1="773" x2="867.53" y2="775.4" stroke="#111" stroke-width="1.25"/><line x1="867.53" y1="1038" x2="867.53" y2="1035.6" stroke="#111" stroke-width="1.25"/><line x1="874.60" y1="773" x2="874.60" y2="775.4" stroke="#111" stroke-width="1.25"/><line x1="874.60" y1="1038" x2="874.60" y2="1035.6" stroke="#111" stroke-width="1.25"/><line x1="881.68" y1="773" x2="881.68" y2="775.4" stroke="#111" stroke-width="1.25"/><line x1="881.68" y1="1038" x2="881.68" y2="1035.6" stroke="#111" stroke-width="1.25"/><line x1="888.75" y1="773" x2="888.75" y2="775.4" stroke="#111" stroke-width="1.25"/><line x1="888.75" y1="1038" x2="888.75" y2="1035.6" stroke="#111" stroke-width="1.25"/><line x1="895.82" y1="773" x2="895.82" y2="775.4" stroke="#111" stroke-width="1.25"/><line x1="895.82" y1="1038" x2="895.82" y2="1035.6" stroke="#111" stroke-width="1.25"/><line x1="902.89" y1="773" x2="902.89" y2="775.4" stroke="#111" stroke-width="1.25"/><line x1="902.89" y1="1038" x2="902.89" y2="1035.6" stroke="#111" stroke-width="1.25"/><line x1="909.97" y1="773" x2="909.97" y2="775.4" stroke="#111" stroke-width="1.25"/><line x1="909.97" y1="1038" x2="909.97" y2="1035.6" stroke="#111" stroke-width="1.25"/><line x1="917.04" y1="773" x2="917.04" y2="775.4" stroke="#111" stroke-width="1.25"/><line x1="917.04" y1="1038" x2="917.04" y2="1035.6" stroke="#111" stroke-width="1.25"/><line x1="924.11" y1="773" x2="924.11" y2="775.4" stroke="#111" stroke-width="1.25"/><line x1="924.11" y1="1038" x2="924.11" y2="1035.6" stroke="#111" stroke-width="1.25"/><line x1="931.18" y1="773" x2="931.18" y2="775.4" stroke="#111" stroke-width="1.25"/><line x1="931.18" y1="1038" x2="931.18" y2="1035.6" stroke="#111" stroke-width="1.25"/><line x1="938.25" y1="773" x2="938.25" y2="775.4" stroke="#111" stroke-width="1.25"/><line x1="938.25" y1="1038" x2="938.25" y2="1035.6" stroke="#111" stroke-width="1.25"/><line x1="945.33" y1="773" x2="945.33" y2="775.4" stroke="#111" stroke-width="1.25"/><line x1="945.33" y1="1038" x2="945.33" y2="1035.6" stroke="#111" stroke-width="1.25"/><line x1="952.40" y1="773" x2="952.40" y2="775.4" stroke="#111" stroke-width="1.25"/><line x1="952.40" y1="1038" x2="952.40" y2="1035.6" stroke="#111" stroke-width="1.25"/><line x1="959.47" y1="773" x2="959.47" y2="775.4" stroke="#111" stroke-width="1.25"/><line x1="959.47" y1="1038" x2="959.47" y2="1035.6" stroke="#111" stroke-width="1.25"/><line x1="966.54" y1="773" x2="966.54" y2="775.4" stroke="#111" stroke-width="1.25"/><line x1="966.54" y1="1038" x2="966.54" y2="1035.6" stroke="#111" stroke-width="1.25"/><line x1="973.61" y1="773" x2="973.61" y2="775.4" stroke="#111" stroke-width="1.25"/><line x1="973.61" y1="1038" x2="973.61" y2="1035.6" stroke="#111" stroke-width="1.25"/><line x1="980.69" y1="773" x2="980.69" y2="775.4" stroke="#111" stroke-width="1.25"/><line x1="980.69" y1="1038" x2="980.69" y2="1035.6" stroke="#111" stroke-width="1.25"/><line x1="987.76" y1="773" x2="987.76" y2="775.4" stroke="#111" stroke-width="1.25"/><line x1="987.76" y1="1038" x2="987.76" y2="1035.6" stroke="#111" stroke-width="1.25"/><line x1="994.83" y1="773" x2="994.83" y2="775.4" stroke="#111" stroke-width="1.25"/><line x1="994.83" y1="1038" x2="994.83" y2="1035.6" stroke="#111" stroke-width="1.25"/><line x1="1001.90" y1="773" x2="1001.90" y2="775.4" stroke="#111" stroke-width="1.25"/><line x1="1001.90" y1="1038" x2="1001.90" y2="1035.6" stroke="#111" stroke-width="1.25"/><line x1="1008.98" y1="773" x2="1008.98" y2="775.4" stroke="#111" stroke-width="1.25"/><line x1="1008.98" y1="1038" x2="1008.98" y2="1035.6" stroke="#111" stroke-width="1.25"/><line x1="1016.05" y1="773" x2="1016.05" y2="775.4" stroke="#111" stroke-width="1.25"/><line x1="1016.05" y1="1038" x2="1016.05" y2="1035.6" stroke="#111" stroke-width="1.25"/><line x1="1023.12" y1="773" x2="1023.12" y2="775.4" stroke="#111" stroke-width="1.25"/><line x1="1023.12" y1="1038" x2="1023.12" y2="1035.6" stroke="#111" stroke-width="1.25"/><line x1="1030.19" y1="773" x2="1030.19" y2="775.4" stroke="#111" stroke-width="1.25"/><line x1="1030.19" y1="1038" x2="1030.19" y2="1035.6" stroke="#111" stroke-width="1.25"/><line x1="1037.26" y1="773" x2="1037.26" y2="775.4" stroke="#111" stroke-width="1.25"/><line x1="1037.26" y1="1038" x2="1037.26" y2="1035.6" stroke="#111" stroke-width="1.25"/><line x1="1044.34" y1="773" x2="1044.34" y2="775.4" stroke="#111" stroke-width="1.25"/><line x1="1044.34" y1="1038" x2="1044.34" y2="1035.6" stroke="#111" stroke-width="1.25"/><line x1="1051.41" y1="773" x2="1051.41" y2="775.4" stroke="#111" stroke-width="1.25"/><line x1="1051.41" y1="1038" x2="1051.41" y2="1035.6" stroke="#111" stroke-width="1.25"/><line x1="1058.48" y1="773" x2="1058.48" y2="775.4" stroke="#111" stroke-width="1.25"/><line x1="1058.48" y1="1038" x2="1058.48" y2="1035.6" stroke="#111" stroke-width="1.25"/><line x1="1065.55" y1="773" x2="1065.55" y2="775.4" stroke="#111" stroke-width="1.25"/><line x1="1065.55" y1="1038" x2="1065.55" y2="1035.6" stroke="#111" stroke-width="1.25"/><line x1="1072.62" y1="773" x2="1072.62" y2="775.4" stroke="#111" stroke-width="1.25"/><line x1="1072.62" y1="1038" x2="1072.62" y2="1035.6" stroke="#111" stroke-width="1.25"/><line x1="1079.70" y1="773" x2="1079.70" y2="775.4" stroke="#111" stroke-width="1.25"/><line x1="1079.70" y1="1038" x2="1079.70" y2="1035.6" stroke="#111" stroke-width="1.25"/><line x1="1086.77" y1="773" x2="1086.77" y2="775.4" stroke="#111" stroke-width="1.25"/><line x1="1086.77" y1="1038" x2="1086.77" y2="1035.6" stroke="#111" stroke-width="1.25"/><line x1="1093.84" y1="773" x2="1093.84" y2="775.4" stroke="#111" stroke-width="1.25"/><line x1="1093.84" y1="1038" x2="1093.84" y2="1035.6" stroke="#111" stroke-width="1.25"/><line x1="1100.91" y1="773" x2="1100.91" y2="775.4" stroke="#111" stroke-width="1.25"/><line x1="1100.91" y1="1038" x2="1100.91" y2="1035.6" stroke="#111" stroke-width="1.25"/><line x1="1107.99" y1="773" x2="1107.99" y2="775.4" stroke="#111" stroke-width="1.25"/><line x1="1107.99" y1="1038" x2="1107.99" y2="1035.6" stroke="#111" stroke-width="1.25"/><line x1="1115.06" y1="773" x2="1115.06" y2="775.4" stroke="#111" stroke-width="1.25"/><line x1="1115.06" y1="1038" x2="1115.06" y2="1035.6" stroke="#111" stroke-width="1.25"/><line x1="1122.13" y1="773" x2="1122.13" y2="775.4" stroke="#111" stroke-width="1.25"/><line x1="1122.13" y1="1038" x2="1122.13" y2="1035.6" stroke="#111" stroke-width="1.25"/><line x1="1129.20" y1="773" x2="1129.20" y2="775.4" stroke="#111" stroke-width="1.25"/><line x1="1129.20" y1="1038" x2="1129.20" y2="1035.6" stroke="#111" stroke-width="1.25"/><line x1="1136.27" y1="773" x2="1136.27" y2="775.4" stroke="#111" stroke-width="1.25"/><line x1="1136.27" y1="1038" x2="1136.27" y2="1035.6" stroke="#111" stroke-width="1.25"/><line x1="1143.35" y1="773" x2="1143.35" y2="775.4" stroke="#111" stroke-width="1.25"/><line x1="1143.35" y1="1038" x2="1143.35" y2="1035.6" stroke="#111" stroke-width="1.25"/><line x1="1150.42" y1="773" x2="1150.42" y2="775.4" stroke="#111" stroke-width="1.25"/><line x1="1150.42" y1="1038" x2="1150.42" y2="1035.6" stroke="#111" stroke-width="1.25"/><line x1="1157.49" y1="773" x2="1157.49" y2="775.4" stroke="#111" stroke-width="1.25"/><line x1="1157.49" y1="1038" x2="1157.49" y2="1035.6" stroke="#111" stroke-width="1.25"/><line x1="1164.56" y1="773" x2="1164.56" y2="775.4" stroke="#111" stroke-width="1.25"/><line x1="1164.56" y1="1038" x2="1164.56" y2="1035.6" stroke="#111" stroke-width="1.25"/><line x1="1171.63" y1="773" x2="1171.63" y2="775.4" stroke="#111" stroke-width="1.25"/><line x1="1171.63" y1="1038" x2="1171.63" y2="1035.6" stroke="#111" stroke-width="1.25"/><line x1="1178.71" y1="773" x2="1178.71" y2="775.4" stroke="#111" stroke-width="1.25"/><line x1="1178.71" y1="1038" x2="1178.71" y2="1035.6" stroke="#111" stroke-width="1.25"/><line x1="1185.78" y1="773" x2="1185.78" y2="775.4" stroke="#111" stroke-width="1.25"/><line x1="1185.78" y1="1038" x2="1185.78" y2="1035.6" stroke="#111" stroke-width="1.25"/><line x1="1192.85" y1="773" x2="1192.85" y2="775.4" stroke="#111" stroke-width="1.25"/><line x1="1192.85" y1="1038" x2="1192.85" y2="1035.6" stroke="#111" stroke-width="1.25"/><line x1="1199.92" y1="773" x2="1199.92" y2="775.4" stroke="#111" stroke-width="1.25"/><line x1="1199.92" y1="1038" x2="1199.92" y2="1035.6" stroke="#111" stroke-width="1.25"/><line x1="1207.00" y1="773" x2="1207.00" y2="775.4" stroke="#111" stroke-width="1.25"/><line x1="1207.00" y1="1038" x2="1207.00" y2="1035.6" stroke="#111" stroke-width="1.25"/><line x1="1214.07" y1="773" x2="1214.07" y2="775.4" stroke="#111" stroke-width="1.25"/><line x1="1214.07" y1="1038" x2="1214.07" y2="1035.6" stroke="#111" stroke-width="1.25"/><line x1="1221.14" y1="773" x2="1221.14" y2="775.4" stroke="#111" stroke-width="1.25"/><line x1="1221.14" y1="1038" x2="1221.14" y2="1035.6" stroke="#111" stroke-width="1.25"/><line x1="1228.21" y1="773" x2="1228.21" y2="775.4" stroke="#111" stroke-width="1.25"/><line x1="1228.21" y1="1038" x2="1228.21" y2="1035.6" stroke="#111" stroke-width="1.25"/><line x1="1235.28" y1="773" x2="1235.28" y2="775.4" stroke="#111" stroke-width="1.25"/><line x1="1235.28" y1="1038" x2="1235.28" y2="1035.6" stroke="#111" stroke-width="1.25"/><line x1="1242.36" y1="773" x2="1242.36" y2="775.4" stroke="#111" stroke-width="1.25"/><line x1="1242.36" y1="1038" x2="1242.36" y2="1035.6" stroke="#111" stroke-width="1.25"/><line x1="1249.43" y1="773" x2="1249.43" y2="775.4" stroke="#111" stroke-width="1.25"/><line x1="1249.43" y1="1038" x2="1249.43" y2="1035.6" stroke="#111" stroke-width="1.25"/><line x1="1256.50" y1="773" x2="1256.50" y2="775.4" stroke="#111" stroke-width="1.25"/><line x1="1256.50" y1="1038" x2="1256.50" y2="1035.6" stroke="#111" stroke-width="1.25"/><line x1="1263.57" y1="773" x2="1263.57" y2="775.4" stroke="#111" stroke-width="1.25"/><line x1="1263.57" y1="1038" x2="1263.57" y2="1035.6" stroke="#111" stroke-width="1.25"/><line x1="1270.64" y1="773" x2="1270.64" y2="775.4" stroke="#111" stroke-width="1.25"/><line x1="1270.64" y1="1038" x2="1270.64" y2="1035.6" stroke="#111" stroke-width="1.25"/><line x1="1277.72" y1="773" x2="1277.72" y2="775.4" stroke="#111" stroke-width="1.25"/><line x1="1277.72" y1="1038" x2="1277.72" y2="1035.6" stroke="#111" stroke-width="1.25"/><line x1="1284.79" y1="773" x2="1284.79" y2="775.4" stroke="#111" stroke-width="1.25"/><line x1="1284.79" y1="1038" x2="1284.79" y2="1035.6" stroke="#111" stroke-width="1.25"/><line x1="1291.86" y1="773" x2="1291.86" y2="775.4" stroke="#111" stroke-width="1.25"/><line x1="1291.86" y1="1038" x2="1291.86" y2="1035.6" stroke="#111" stroke-width="1.25"/><line x1="1298.93" y1="773" x2="1298.93" y2="775.4" stroke="#111" stroke-width="1.25"/><line x1="1298.93" y1="1038" x2="1298.93" y2="1035.6" stroke="#111" stroke-width="1.25"/><line x1="1306.00" y1="773" x2="1306.00" y2="775.4" stroke="#111" stroke-width="1.25"/><line x1="1306.00" y1="1038" x2="1306.00" y2="1035.6" stroke="#111" stroke-width="1.25"/><line x1="1313.08" y1="773" x2="1313.08" y2="775.4" stroke="#111" stroke-width="1.25"/><line x1="1313.08" y1="1038" x2="1313.08" y2="1035.6" stroke="#111" stroke-width="1.25"/><line x1="1320.15" y1="773" x2="1320.15" y2="775.4" stroke="#111" stroke-width="1.25"/><line x1="1320.15" y1="1038" x2="1320.15" y2="1035.6" stroke="#111" stroke-width="1.25"/><line x1="1327.22" y1="773" x2="1327.22" y2="775.4" stroke="#111" stroke-width="1.25"/><line x1="1327.22" y1="1038" x2="1327.22" y2="1035.6" stroke="#111" stroke-width="1.25"/><line x1="1334.29" y1="773" x2="1334.29" y2="775.4" stroke="#111" stroke-width="1.25"/><line x1="1334.29" y1="1038" x2="1334.29" y2="1035.6" stroke="#111" stroke-width="1.25"/><line x1="1341.37" y1="773" x2="1341.37" y2="775.4" stroke="#111" stroke-width="1.25"/><line x1="1341.37" y1="1038" x2="1341.37" y2="1035.6" stroke="#111" stroke-width="1.25"/><line x1="1348.44" y1="773" x2="1348.44" y2="775.4" stroke="#111" stroke-width="1.25"/><line x1="1348.44" y1="1038" x2="1348.44" y2="1035.6" stroke="#111" stroke-width="1.25"/><line x1="1355.51" y1="773" x2="1355.51" y2="775.4" stroke="#111" stroke-width="1.25"/><line x1="1355.51" y1="1038" x2="1355.51" y2="1035.6" stroke="#111" stroke-width="1.25"/><line x1="1362.58" y1="773" x2="1362.58" y2="775.4" stroke="#111" stroke-width="1.25"/><line x1="1362.58" y1="1038" x2="1362.58" y2="1035.6" stroke="#111" stroke-width="1.25"/><line x1="1369.65" y1="773" x2="1369.65" y2="775.4" stroke="#111" stroke-width="1.25"/><line x1="1369.65" y1="1038" x2="1369.65" y2="1035.6" stroke="#111" stroke-width="1.25"/><line x1="1376.73" y1="773" x2="1376.73" y2="775.4" stroke="#111" stroke-width="1.25"/><line x1="1376.73" y1="1038" x2="1376.73" y2="1035.6" stroke="#111" stroke-width="1.25"/><line x1="1383.80" y1="773" x2="1383.80" y2="775.4" stroke="#111" stroke-width="1.25"/><line x1="1383.80" y1="1038" x2="1383.80" y2="1035.6" stroke="#111" stroke-width="1.25"/><line x1="1390.87" y1="773" x2="1390.87" y2="775.4" stroke="#111" stroke-width="1.25"/><line x1="1390.87" y1="1038" x2="1390.87" y2="1035.6" stroke="#111" stroke-width="1.25"/><line x1="1397.94" y1="773" x2="1397.94" y2="775.4" stroke="#111" stroke-width="1.25"/><line x1="1397.94" y1="1038" x2="1397.94" y2="1035.6" stroke="#111" stroke-width="1.25"/><line x1="1405.01" y1="773" x2="1405.01" y2="775.4" stroke="#111" stroke-width="1.25"/><line x1="1405.01" y1="1038" x2="1405.01" y2="1035.6" stroke="#111" stroke-width="1.25"/><line x1="1412.09" y1="773" x2="1412.09" y2="775.4" stroke="#111" stroke-width="1.25"/><line x1="1412.09" y1="1038" x2="1412.09" y2="1035.6" stroke="#111" stroke-width="1.25"/><line x1="1419.16" y1="773" x2="1419.16" y2="775.4" stroke="#111" stroke-width="1.25"/><line x1="1419.16" y1="1038" x2="1419.16" y2="1035.6" stroke="#111" stroke-width="1.25"/><line x1="1426.23" y1="773" x2="1426.23" y2="775.4" stroke="#111" stroke-width="1.25"/><line x1="1426.23" y1="1038" x2="1426.23" y2="1035.6" stroke="#111" stroke-width="1.25"/><line x1="1433.30" y1="773" x2="1433.30" y2="775.4" stroke="#111" stroke-width="1.25"/><line x1="1433.30" y1="1038" x2="1433.30" y2="1035.6" stroke="#111" stroke-width="1.25"/><line x1="1440.38" y1="773" x2="1440.38" y2="775.4" stroke="#111" stroke-width="1.25"/><line x1="1440.38" y1="1038" x2="1440.38" y2="1035.6" stroke="#111" stroke-width="1.25"/><line x1="1447.45" y1="773" x2="1447.45" y2="775.4" stroke="#111" stroke-width="1.25"/><line x1="1447.45" y1="1038" x2="1447.45" y2="1035.6" stroke="#111" stroke-width="1.25"/><line x1="1454.52" y1="773" x2="1454.52" y2="775.4" stroke="#111" stroke-width="1.25"/><line x1="1454.52" y1="1038" x2="1454.52" y2="1035.6" stroke="#111" stroke-width="1.25"/><line x1="1461.59" y1="773" x2="1461.59" y2="775.4" stroke="#111" stroke-width="1.25"/><line x1="1461.59" y1="1038" x2="1461.59" y2="1035.6" stroke="#111" stroke-width="1.25"/><line x1="959.3" y1="773" x2="959.3" y2="785.5" stroke="#555" stroke-width="1.3"/><line x1="959.3" y1="1038" x2="959.3" y2="1025.5" stroke="#555" stroke-width="1.3"/><line x1="1178.4" y1="773" x2="1178.4" y2="785.5" stroke="#555" stroke-width="1.3"/><line x1="1178.4" y1="1038" x2="1178.4" y2="1025.5" stroke="#555" stroke-width="1.3"/><line x1="1390.7" y1="773" x2="1390.7" y2="785.5" stroke="#555" stroke-width="1.3"/><line x1="1390.7" y1="1038" x2="1390.7" y2="1025.5" stroke="#555" stroke-width="1.3"/><text x="891.9" y="1056.4" text-anchor="middle" font-size="12" fill="#222">Septiembre 21</text><text x="1068.0" y="1056.4" text-anchor="middle" font-size="12" fill="#222">Octubre 21</text><text x="1284.3" y="1056.4" text-anchor="middle" font-size="12" fill="#222">Noviembre 21</text><text x="1429.2" y="1056.4" text-anchor="middle" font-size="12" fill="#222">Diciembre 21</text><text transform="translate(786.2,905.5) rotate(-90)" text-anchor="middle" font-size="18" fill="#111">u [mm]</text><text x="1146.6" y="1075" text-anchor="middle" font-size="18.4" fill="#111">Fecha</text><path d="M839.40 1028.60V1034.50M837.40 1028.60H841.40M837.40 1034.50H841.40M846.47 1012.00V1017.90M844.47 1012.00H848.47M844.47 1017.90H848.47M853.54 998.00V1003.90M851.54 998.00H855.54M851.54 1003.90H855.54M860.61 994.00V999.90M858.61 994.00H862.61M858.61 999.90H862.61M867.68 966.00V971.90M865.68 966.00H869.68M865.68 971.90H869.68M874.75 927.00V932.90M872.75 927.00H876.75M872.75 932.90H876.75M881.82 913.70V919.60M879.82 913.70H883.82M879.82 919.60H883.82M888.89 915.80V921.70M886.89 915.80H890.89M886.89 921.70H890.89M895.96 906.70V912.60M893.96 906.70H897.96M893.96 912.60H897.96M903.03 900.50V906.40M901.03 900.50H905.03M901.03 906.40H905.03M910.10 907.70V913.60M908.10 907.70H912.10M908.10 913.60H912.10M917.17 915.50V921.40M915.17 915.50H919.17M915.17 921.40H919.17M924.24 922.10V928.00M922.24 922.10H926.24M922.24 928.00H926.24M931.31 922.10V928.00M929.31 922.10H933.31M929.31 928.00H933.31M938.38 908.90V914.80M936.38 908.90H940.38M936.38 914.80H940.38M945.45 906.70V912.60M943.45 906.70H947.45M943.45 912.60H947.45M952.52 920.70V926.60M950.52 920.70H954.52M950.52 926.60H954.52M959.59 917.30V923.20M957.59 917.30H961.59M957.59 923.20H961.59M966.66 919.60V925.50M964.66 919.60H968.66M964.66 925.50H968.66M973.73 923.20V929.10M971.73 923.20H975.73M971.73 929.10H975.73M980.80 929.80V935.70M978.80 929.80H982.80M978.80 935.70H982.80M987.87 933.20V939.10M985.87 933.20H989.87M985.87 939.10H989.87M994.94 923.10V929.00M992.94 923.10H996.94M992.94 929.00H996.94M1002.01 922.40V928.30M1000.01 922.40H1004.01M1000.01 928.30H1004.01M1009.08 920.60V926.50M1007.08 920.60H1011.08M1007.08 926.50H1011.08M1016.15 929.50V935.40M1014.15 929.50H1018.15M1014.15 935.40H1018.15M1023.22 927.20V933.10M1021.22 927.20H1025.22M1021.22 933.10H1025.22M1030.29 927.20V933.10M1028.29 927.20H1032.29M1028.29 933.10H1032.29M1037.36 906.30V912.20M1035.36 906.30H1039.36M1035.36 912.20H1039.36M1044.43 885.30V891.20M1042.43 885.30H1046.43M1042.43 891.20H1046.43M1051.50 886.00V891.90M1049.50 886.00H1053.50M1049.50 891.90H1053.50M1058.57 914.70V920.60M1056.57 914.70H1060.57M1056.57 920.60H1060.57M1065.64 926.80V932.70M1063.64 926.80H1067.64M1063.64 932.70H1067.64M1072.71 929.90V935.80M1070.71 929.90H1074.71M1070.71 935.80H1074.71M1079.78 919.10V925.00M1077.78 919.10H1081.78M1077.78 925.00H1081.78M1086.85 933.60V939.50M1084.85 933.60H1088.85M1084.85 939.50H1088.85M1093.92 931.40V937.30M1091.92 931.40H1095.92M1091.92 937.30H1095.92M1100.99 940.80V946.70M1098.99 940.80H1102.99M1098.99 946.70H1102.99M1108.06 929.50V935.40M1106.06 929.50H1110.06M1106.06 935.40H1110.06M1115.13 922.50V928.40M1113.13 922.50H1117.13M1113.13 928.40H1117.13M1122.20 934.20V944.30M1120.20 934.20H1124.20M1120.20 944.30H1124.20M1129.27 824.90V831.90M1127.27 824.90H1131.27M1127.27 831.90H1131.27M1136.34 888.20V897.90M1134.34 888.20H1138.34M1134.34 897.90H1138.34M1143.41 919.90V928.90M1141.41 919.90H1145.41M1141.41 928.90H1145.41M1150.48 917.70V930.20M1148.48 917.70H1152.48M1148.48 930.20H1152.48M1157.55 925.80V935.10M1155.55 925.80H1159.55M1155.55 935.10H1159.55M1164.62 921.70V929.80M1162.62 921.70H1166.62M1162.62 929.80H1166.62M1171.69 917.70V928.50M1169.69 917.70H1173.69M1169.69 928.50H1173.69M1178.76 927.20V937.40M1176.76 927.20H1180.76M1176.76 937.40H1180.76M1185.83 932.90V944.40M1183.83 932.90H1187.83M1183.83 944.40H1187.83M1192.90 922.30V930.10M1190.90 922.30H1194.90M1190.90 930.10H1194.90M1199.97 911.00V923.10M1197.97 911.00H1201.97M1197.97 923.10H1201.97M1207.04 853.00V861.00M1205.04 853.00H1209.04M1205.04 861.00H1209.04M1214.11 933.90V943.10M1212.11 933.90H1216.11M1212.11 943.10H1216.11M1221.18 933.90V941.90M1219.18 933.90H1223.18M1219.18 941.90H1223.18M1228.25 930.90V939.50M1226.25 930.90H1230.25M1226.25 939.50H1230.25M1235.32 927.20V937.40M1233.32 927.20H1237.32M1233.32 937.40H1237.32M1242.39 931.20V940.50M1240.39 931.20H1244.39M1240.39 940.50H1244.39M1249.46 933.90V945.00M1247.46 933.90H1251.46M1247.46 945.00H1251.46M1256.53 941.80V949.80M1254.53 941.80H1258.53M1254.53 949.80H1258.53M1263.60 926.00V935.00M1261.60 926.00H1265.60M1261.60 935.00H1265.60M1270.67 944.80V950.40M1268.67 944.80H1272.67M1268.67 950.40H1272.67M1277.74 941.60V947.20M1275.74 941.60H1279.74M1275.74 947.20H1279.74M1284.81 939.40V945.00M1282.81 939.40H1286.81M1282.81 945.00H1286.81M1291.88 934.30V939.90M1289.88 934.30H1293.88M1289.88 939.90H1293.88M1298.95 917.20V922.80M1296.95 917.20H1300.95M1296.95 922.80H1300.95M1306.02 885.80V891.40M1304.02 885.80H1308.02M1304.02 891.40H1308.02M1313.09 935.70V941.30M1311.09 935.70H1315.09M1311.09 941.30H1315.09M1320.16 915.40V921.00M1318.16 915.40H1322.16M1318.16 921.00H1322.16M1327.23 924.50V930.10M1325.23 924.50H1329.23M1325.23 930.10H1329.23M1334.30 933.00V938.60M1332.30 933.00H1336.30M1332.30 938.60H1336.30M1341.37 929.40V935.00M1339.37 929.40H1343.37M1339.37 935.00H1343.37M1348.44 910.60V916.20M1346.44 910.60H1350.44M1346.44 916.20H1350.44M1355.51 889.80V895.40M1353.51 889.80H1357.51M1353.51 895.40H1357.51M1362.58 921.00V926.60M1360.58 921.00H1364.58M1360.58 926.60H1364.58M1369.65 942.10V947.70M1367.65 942.10H1371.65M1367.65 947.70H1371.65M1376.72 953.90V959.50M1374.72 953.90H1378.72M1374.72 959.50H1378.72M1383.79 941.10V946.70M1381.79 941.10H1385.79M1381.79 946.70H1385.79M1390.86 927.10V932.70M1388.86 927.10H1392.86M1388.86 932.70H1392.86M1397.93 874.90V880.50M1395.93 874.90H1399.93M1395.93 880.50H1399.93M1405.00 929.80V935.40M1403.00 929.80H1407.00M1403.00 935.40H1407.00M1412.07 921.30V926.90M1410.07 921.30H1414.07M1410.07 926.90H1414.07M1419.14 931.80V937.40M1417.14 931.80H1421.14M1417.14 937.40H1421.14M1426.21 930.30V935.90M1424.21 930.30H1428.21M1424.21 935.90H1428.21M1433.28 928.40V934.00M1431.28 928.40H1435.28M1431.28 934.00H1435.28M1440.35 937.50V943.10M1438.35 937.50H1442.35M1438.35 943.10H1442.35M1447.42 938.20V943.80M1445.42 938.20H1449.42M1445.42 943.80H1449.42M1454.49 942.80V948.40M1452.49 942.80H1456.49M1452.49 948.40H1456.49M1461.56 931.80V937.40M1459.56 931.80H1463.56M1459.56 937.40H1463.56" stroke="#333" stroke-width="0.95" fill="none"/><g fill="#0000e6"><circle cx="839.40" cy="1031.70" r="1.75"/><circle cx="846.47" cy="1015.10" r="1.75"/><circle cx="853.54" cy="1001.10" r="1.75"/><circle cx="860.61" cy="997.10" r="1.75"/><circle cx="867.68" cy="969.10" r="1.75"/><circle cx="874.75" cy="930.10" r="1.75"/><circle cx="881.82" cy="916.80" r="1.75"/><circle cx="888.89" cy="918.90" r="1.75"/><circle cx="895.96" cy="909.80" r="1.75"/><circle cx="903.03" cy="903.60" r="1.75"/><circle cx="910.10" cy="910.80" r="1.75"/><circle cx="917.17" cy="918.60" r="1.75"/><circle cx="924.24" cy="925.20" r="1.75"/><circle cx="931.31" cy="925.20" r="1.75"/><circle cx="938.38" cy="912.00" r="1.75"/><circle cx="945.45" cy="909.80" r="1.75"/><circle cx="952.52" cy="923.80" r="1.75"/><circle cx="959.59" cy="920.40" r="1.75"/><circle cx="966.66" cy="922.70" r="1.75"/><circle cx="973.73" cy="926.30" r="1.75"/><circle cx="980.80" cy="932.90" r="1.75"/><circle cx="987.87" cy="936.30" r="1.75"/><circle cx="994.94" cy="926.20" r="1.75"/><circle cx="1002.01" cy="925.50" r="1.75"/><circle cx="1009.08" cy="923.70" r="1.75"/><circle cx="1016.15" cy="932.60" r="1.75"/><circle cx="1023.22" cy="930.30" r="1.75"/><circle cx="1030.29" cy="930.30" r="1.75"/><circle cx="1037.36" cy="909.40" r="1.75"/><circle cx="1044.43" cy="888.40" r="1.75"/><circle cx="1051.50" cy="889.10" r="1.75"/><circle cx="1058.57" cy="917.80" r="1.75"/><circle cx="1065.64" cy="929.90" r="1.75"/><circle cx="1072.71" cy="933.00" r="1.75"/><circle cx="1079.78" cy="922.20" r="1.75"/><circle cx="1086.85" cy="936.70" r="1.75"/><circle cx="1093.92" cy="934.50" r="1.75"/><circle cx="1100.99" cy="943.90" r="1.75"/><circle cx="1108.06" cy="932.60" r="1.75"/><circle cx="1115.13" cy="925.60" r="1.75"/><circle cx="1122.20" cy="941.50" r="1.75"/><circle cx="1129.27" cy="829.10" r="1.75"/><circle cx="1136.34" cy="895.10" r="1.75"/><circle cx="1143.41" cy="926.10" r="1.75"/><circle cx="1150.48" cy="927.40" r="1.75"/><circle cx="1157.55" cy="932.30" r="1.75"/><circle cx="1164.62" cy="927.00" r="1.75"/><circle cx="1171.69" cy="925.70" r="1.75"/><circle cx="1178.76" cy="934.60" r="1.75"/><circle cx="1185.83" cy="941.60" r="1.75"/><circle cx="1192.90" cy="927.30" r="1.75"/><circle cx="1199.97" cy="920.30" r="1.75"/><circle cx="1207.04" cy="858.20" r="1.75"/><circle cx="1214.11" cy="940.30" r="1.75"/><circle cx="1221.18" cy="939.10" r="1.75"/><circle cx="1228.25" cy="936.70" r="1.75"/><circle cx="1235.32" cy="934.60" r="1.75"/><circle cx="1242.39" cy="937.70" r="1.75"/><circle cx="1249.46" cy="942.20" r="1.75"/><circle cx="1256.53" cy="947.00" r="1.75"/><circle cx="1263.60" cy="932.20" r="1.75"/><circle cx="1270.67" cy="947.60" r="1.75"/><circle cx="1277.74" cy="944.40" r="1.75"/><circle cx="1284.81" cy="942.20" r="1.75"/><circle cx="1291.88" cy="937.10" r="1.75"/><circle cx="1298.95" cy="920.00" r="1.75"/><circle cx="1306.02" cy="888.60" r="1.75"/><circle cx="1313.09" cy="938.50" r="1.75"/><circle cx="1320.16" cy="918.20" r="1.75"/><circle cx="1327.23" cy="927.30" r="1.75"/><circle cx="1334.30" cy="935.80" r="1.75"/><circle cx="1341.37" cy="932.20" r="1.75"/><circle cx="1348.44" cy="913.40" r="1.75"/><circle cx="1355.51" cy="892.60" r="1.75"/><circle cx="1362.58" cy="923.80" r="1.75"/><circle cx="1369.65" cy="944.90" r="1.75"/><circle cx="1376.72" cy="956.70" r="1.75"/><circle cx="1383.79" cy="943.90" r="1.75"/><circle cx="1390.86" cy="929.90" r="1.75"/><circle cx="1397.93" cy="877.70" r="1.75"/><circle cx="1405.00" cy="932.60" r="1.75"/><circle cx="1412.07" cy="924.10" r="1.75"/><circle cx="1419.14" cy="934.60" r="1.75"/><circle cx="1426.21" cy="933.10" r="1.75"/><circle cx="1433.28" cy="931.20" r="1.75"/><circle cx="1440.35" cy="940.30" r="1.75"/><circle cx="1447.42" cy="941.00" r="1.75"/><circle cx="1454.49" cy="945.60" r="1.75"/><circle cx="1461.56" cy="934.60" r="1.75"/></g><g fill="#ff0000"><circle cx="839.40" cy="1031.40" r="1.75"/><circle cx="846.47" cy="1014.80" r="1.75"/><circle cx="853.54" cy="1000.80" r="1.75"/><circle cx="860.61" cy="996.80" r="1.75"/><circle cx="867.68" cy="968.80" r="1.75"/><circle cx="874.75" cy="929.80" r="1.75"/><circle cx="881.82" cy="916.50" r="1.75"/><circle cx="888.89" cy="918.60" r="1.75"/><circle cx="895.96" cy="909.50" r="1.75"/><circle cx="903.03" cy="903.30" r="1.75"/><circle cx="910.10" cy="910.50" r="1.75"/><circle cx="917.17" cy="918.30" r="1.75"/><circle cx="924.24" cy="924.90" r="1.75"/><circle cx="931.31" cy="924.90" r="1.75"/><circle cx="938.38" cy="911.70" r="1.75"/><circle cx="945.45" cy="909.50" r="1.75"/><circle cx="952.52" cy="923.50" r="1.75"/><circle cx="959.59" cy="920.10" r="1.75"/><circle cx="966.66" cy="922.40" r="1.75"/><circle cx="973.73" cy="926.00" r="1.75"/><circle cx="980.80" cy="932.60" r="1.75"/><circle cx="987.87" cy="936.00" r="1.75"/><circle cx="994.94" cy="925.90" r="1.75"/><circle cx="1002.01" cy="925.20" r="1.75"/><circle cx="1009.08" cy="923.40" r="1.75"/><circle cx="1016.15" cy="932.30" r="1.75"/><circle cx="1023.22" cy="930.00" r="1.75"/><circle cx="1030.29" cy="930.00" r="1.75"/><circle cx="1037.36" cy="909.10" r="1.75"/><circle cx="1044.43" cy="888.10" r="1.75"/><circle cx="1051.50" cy="888.80" r="1.75"/><circle cx="1058.57" cy="917.50" r="1.75"/><circle cx="1065.64" cy="929.60" r="1.75"/><circle cx="1072.71" cy="932.70" r="1.75"/><circle cx="1079.78" cy="921.90" r="1.75"/><circle cx="1086.85" cy="936.40" r="1.75"/><circle cx="1093.92" cy="934.20" r="1.75"/><circle cx="1100.99" cy="943.60" r="1.75"/><circle cx="1108.06" cy="932.30" r="1.75"/><circle cx="1115.13" cy="925.30" r="1.75"/><circle cx="1122.20" cy="937.00" r="1.75"/><circle cx="1129.27" cy="827.70" r="1.75"/><circle cx="1136.34" cy="891.00" r="1.75"/><circle cx="1143.41" cy="922.70" r="1.75"/><circle cx="1150.48" cy="920.50" r="1.75"/><circle cx="1157.55" cy="928.60" r="1.75"/><circle cx="1164.62" cy="924.50" r="1.75"/><circle cx="1171.69" cy="920.50" r="1.75"/><circle cx="1178.76" cy="930.00" r="1.75"/><circle cx="1185.83" cy="935.70" r="1.75"/><circle cx="1192.90" cy="925.10" r="1.75"/><circle cx="1199.97" cy="913.80" r="1.75"/><circle cx="1207.04" cy="855.80" r="1.75"/><circle cx="1214.11" cy="936.70" r="1.75"/><circle cx="1221.18" cy="936.70" r="1.75"/><circle cx="1228.25" cy="933.70" r="1.75"/><circle cx="1235.32" cy="930.00" r="1.75"/><circle cx="1242.39" cy="934.00" r="1.75"/><circle cx="1249.46" cy="936.70" r="1.75"/><circle cx="1256.53" cy="944.60" r="1.75"/><circle cx="1263.60" cy="928.80" r="1.75"/></g><line x1="874.3" y1="773" x2="874.3" y2="1038" stroke="#28d228" stroke-width="2.2"/><rect x="825.1" y="773" width="643.1999999999999" height="265" fill="none" stroke="#000" stroke-width="2"/></svg></body></html>
